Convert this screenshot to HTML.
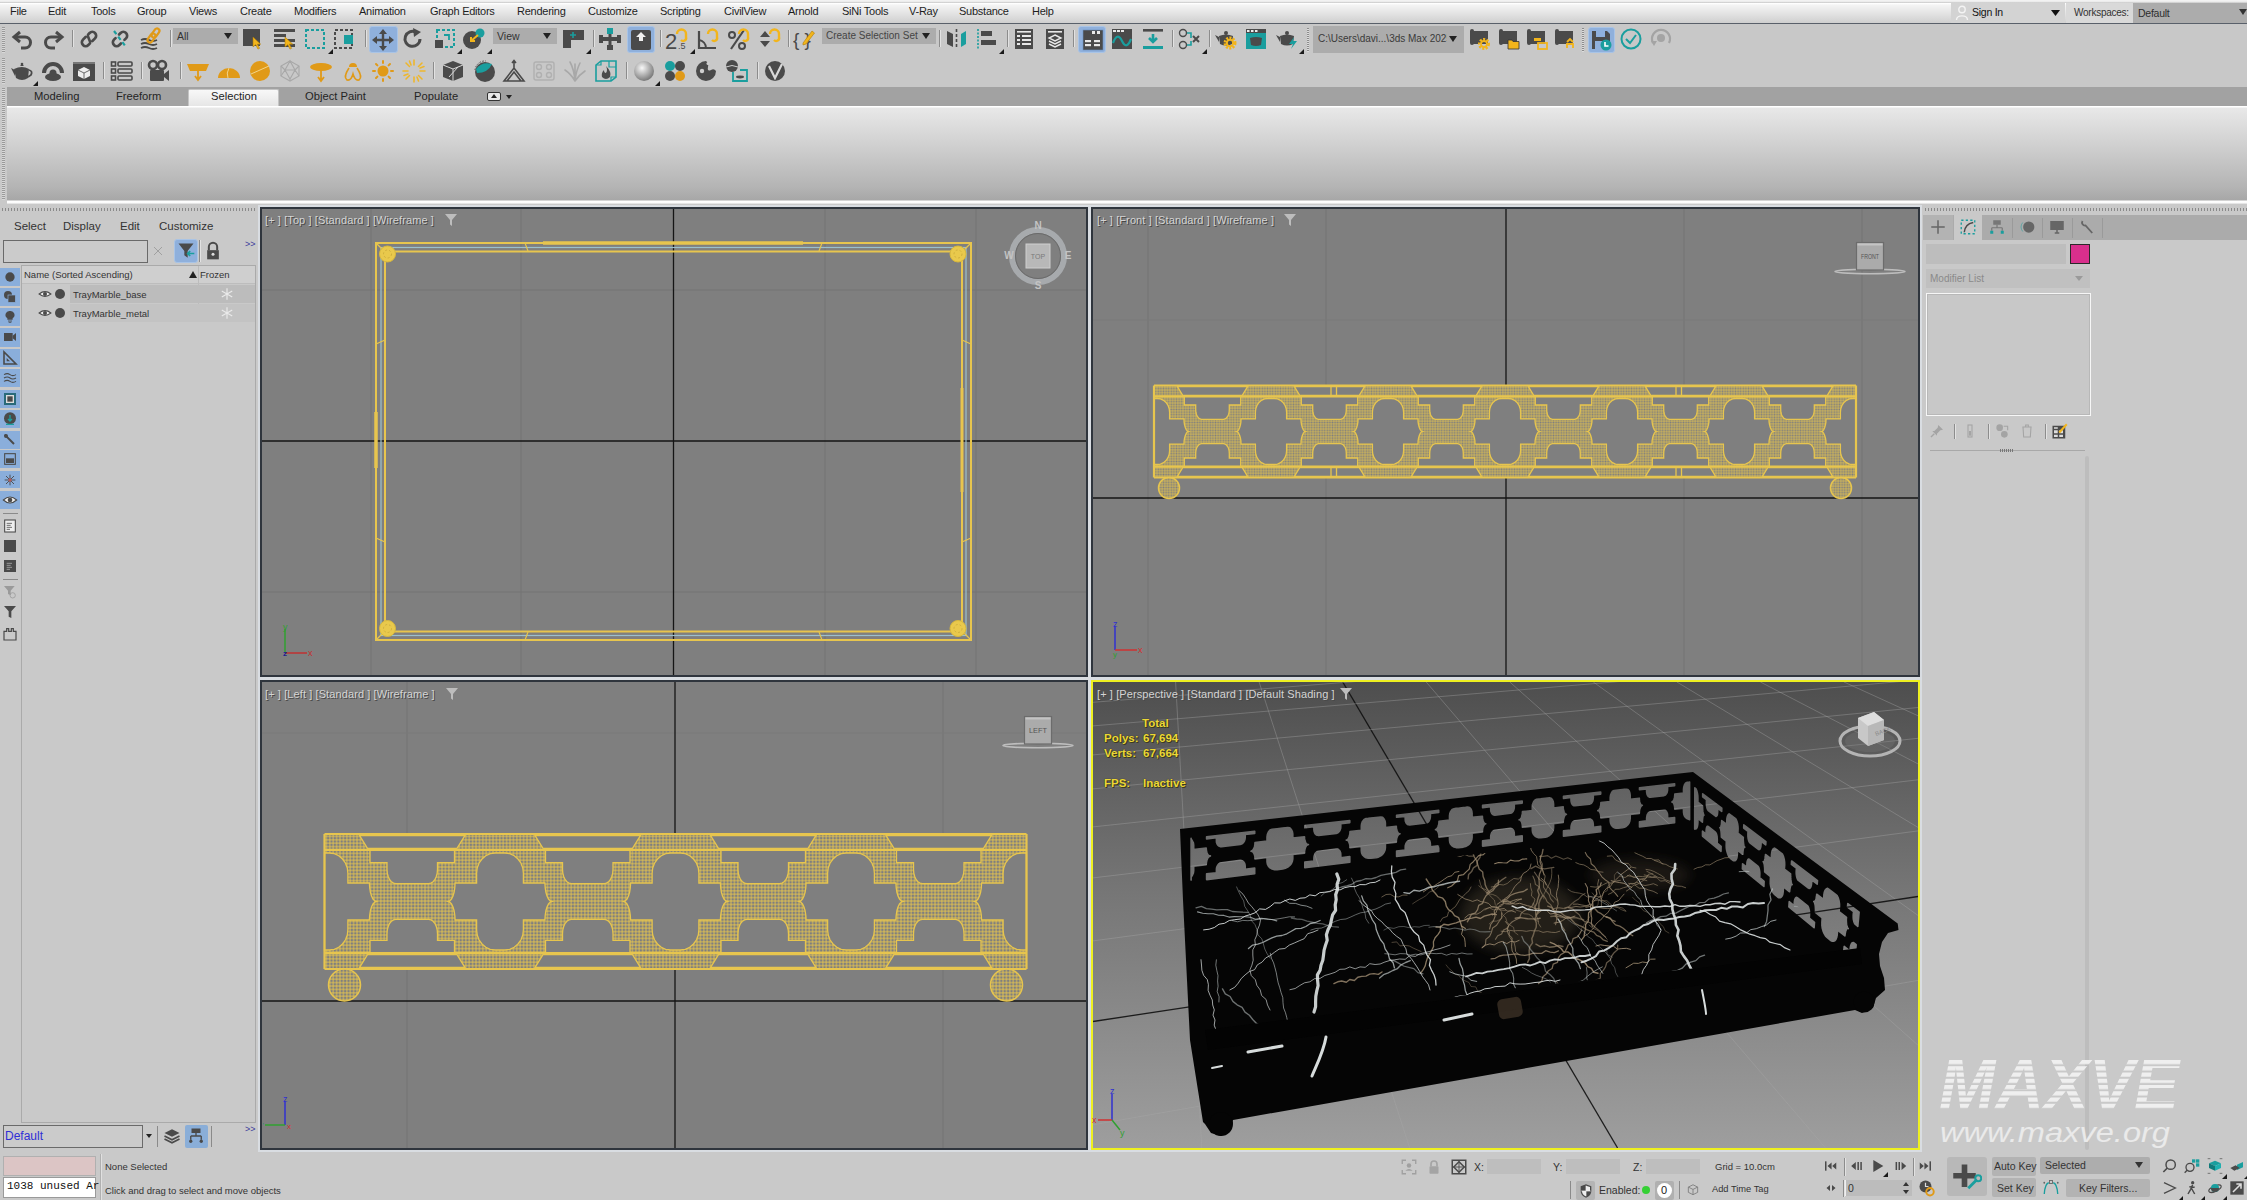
<!DOCTYPE html><html><head><meta charset="utf-8"><style>

*{margin:0;padding:0;box-sizing:border-box}
html,body{width:2247px;height:1200px;overflow:hidden;background:#c9c9c9;font-family:"Liberation Sans",sans-serif;font-size:11px;color:#2a2a2a}
body{position:relative}
.a{position:absolute}
.t{position:absolute;white-space:nowrap}
#menubar{left:0;top:0;width:2247px;height:24px;background:linear-gradient(#f2f2f2 0,#f2f2f2 1.4px,#c4c4c4 2.2px,#ffffff 3.4px,#f4f4f4 5px,#e2e2e2 14px,#cfcfcf 23px);border-bottom:1px solid #59606a}
#menubar .t{top:5px;font-size:11px;color:#1e1e1e;letter-spacing:-0.25px}
.dd{position:absolute;background:#acacac;font-size:10px;color:#333}
.sep{position:absolute;width:1px;background:#8e8e8e;border-right:1px solid #e4e4e4}
.hl{position:absolute;background:#8aaed8;border-radius:2px}
.vpl{position:absolute;font-size:11px;color:#d4d4d4;letter-spacing:0.1px;white-space:nowrap;text-shadow:1px 1px 0 #484848}
.stat{position:absolute;font-size:11.5px;font-weight:bold;color:#ecd836;white-space:nowrap;text-shadow:1px 1px 0 #3a3a20,0 0 1px #20200a}

</style></head><body>
<div id="menubar" class="a">
<span class="t" style="left:10px">File</span>
<span class="t" style="left:48px">Edit</span>
<span class="t" style="left:91px">Tools</span>
<span class="t" style="left:137px">Group</span>
<span class="t" style="left:189px">Views</span>
<span class="t" style="left:240px">Create</span>
<span class="t" style="left:294px">Modifiers</span>
<span class="t" style="left:359px">Animation</span>
<span class="t" style="left:430px">Graph Editors</span>
<span class="t" style="left:517px">Rendering</span>
<span class="t" style="left:588px">Customize</span>
<span class="t" style="left:660px">Scripting</span>
<span class="t" style="left:724px">CivilView</span>
<span class="t" style="left:788px">Arnold</span>
<span class="t" style="left:842px">SiNi Tools</span>
<span class="t" style="left:909px">V-Ray</span>
<span class="t" style="left:959px">Substance</span>
<span class="t" style="left:1032px">Help</span>
<div class="a" style="left:1951px;top:3px;width:114px;height:20px;background:#d3d3d3"></div>
<svg class="a" style="left:1955px;top:5px" width="14" height="16" viewBox="0 0 14 16"><circle cx="7" cy="4.5" r="3.2" fill="none" stroke="#f4f4f4" stroke-width="1.4"/><path d="M1.5 15 C1.5 9.5 12.5 9.5 12.5 15" fill="none" stroke="#f4f4f4" stroke-width="1.4"/></svg>
<span class="t" style="left:1972px;top:6px;font-size:10.5px;color:#111">Sign In</span>
<svg class="a" style="left:2051px;top:10px" width="9" height="6"><path d="M0 0 L9 0 L4.5 6Z" fill="#111"/></svg>
<div class="a" style="left:2066px;top:3px;width:68px;height:20px;background:#d9d9d9"></div>
<span class="t" style="left:2074px;top:7px;font-size:10px;color:#333">Workspaces:</span>
<div class="a" style="left:2133px;top:3px;width:114px;height:20px;background:#acacac"></div>
<span class="t" style="left:2138px;top:7px;font-size:10.5px;color:#2e2e2e">Default</span>
<svg class="a" style="left:2239px;top:9px" width="8" height="6"><path d="M0 0 L8 0 L4 6Z" fill="#333"/></svg>
</div>
<div class="a" style="left:0;top:24px;width:2247px;height:63px;background:#c8c8c8"></div>
<div class="a" style="left:2px;top:27px;width:3px;height:26px;background:repeating-linear-gradient(#9a9a9a 0 1px,#d8d8d8 1px 2px)"></div>
<div class="a" style="left:2px;top:58px;width:3px;height:26px;background:repeating-linear-gradient(#9a9a9a 0 1px,#d8d8d8 1px 2px)"></div>
<svg class="a" style="left:10.5px;top:26.5px" width="24" height="24" viewBox="0 0 24 24"><path d="M9 5 L3 10 L9 15" fill="none" stroke="#4a4a4a" stroke-width="3" stroke-linejoin="miter"/><path d="M4 10 H14 A5.5 5.5 0 0 1 14 21 H10" fill="none" stroke="#4a4a4a" stroke-width="3"/></svg>
<svg class="a" style="left:41.0px;top:26.5px" width="24" height="24" viewBox="0 0 24 24"><path d="M15 5 L21 10 L15 15" fill="none" stroke="#4a4a4a" stroke-width="3"/><path d="M20 10 H10 A5.5 5.5 0 0 0 10 21 H14" fill="none" stroke="#4a4a4a" stroke-width="3"/></svg>
<div class="a" style="left:72px;top:30px;width:1px;height:17px;background:#8c8c8c;box-shadow:1px 0 0 #e2e2e2"></div>
<svg class="a" style="left:77.0px;top:26.5px" width="24" height="24" viewBox="0 0 24 24"><g transform="rotate(-45 12 12)" fill="none" stroke="#4a4a4a" stroke-width="2.7" stroke-linecap="round"><path d="M11 8.2 H7.3 A3.8 3.8 0 0 0 7.3 15.8 H9.3 C11.8 15.8 12.2 8.2 14.7 8.2 H16.7 A3.8 3.8 0 0 1 16.7 15.8 H13"/></g></svg>
<svg class="a" style="left:108.0px;top:26.5px" width="24" height="24" viewBox="0 0 24 24"><g transform="rotate(-45 12 12)" fill="none" stroke="#4a4a4a" stroke-width="2.7" stroke-linecap="round"><path d="M9.5 8.2 H7.3 A3.8 3.8 0 0 0 7.3 15.8 H9.5"/><path d="M14.5 15.8 H16.7 A3.8 3.8 0 0 0 16.7 8.2 H14.5"/></g><path d="M6 4 L18 20" stroke="#1a9e9e" stroke-width="2.2" stroke-dasharray="4 3"/></svg>
<svg class="a" style="left:139.0px;top:26.5px" width="24" height="24" viewBox="0 0 24 24"><g fill="none" stroke="#4a4a4a" stroke-width="1.8"><path d="M2 13 Q6 11 10 13 T18 13"/><path d="M2 17 Q6 15 10 17 T18 17"/><path d="M2 21 Q6 19 10 21 T18 21"/></g><g fill="none" stroke="#e09a18" stroke-width="2.2"><rect x="14" y="1" width="5" height="10" rx="2.5" transform="rotate(35 16.5 6)"/><rect x="10" y="6" width="5" height="10" rx="2.5" transform="rotate(35 12.5 11)"/></g></svg>
<div class="a" style="left:170px;top:30px;width:1px;height:17px;background:#8c8c8c;box-shadow:1px 0 0 #e2e2e2"></div>
<div class="a" style="left:173px;top:28px;width:65px;height:16px;background:#acacac"></div><span class="t" style="left:177px;top:30px;font-size:10.5px;color:#333">All</span><svg class="a" style="left:224px;top:33px" width="8" height="6"><path d="M0 0 L8 0 L4 6Z" fill="#222"/></svg>
<svg class="a" style="left:241.0px;top:26.5px" width="24" height="24" viewBox="0 0 24 24"><rect x="2" y="2" width="17" height="17" fill="#4a4a4a"/><path transform="translate(12 10) scale(1.1)" d="M0 0 L0 9 L2.5 7 L4.5 11 L6 10.3 L4 6.5 L7 6.5Z" fill="#f2b51c" stroke="#b07a00" stroke-width="0.5"/></svg>
<svg class="a" style="left:273.0px;top:26.5px" width="24" height="24" viewBox="0 0 24 24"><g fill="#4a4a4a"><rect x="1" y="2" width="21" height="3"/><rect x="1" y="7" width="12" height="3"/><rect x="1" y="12" width="21" height="3"/><rect x="1" y="17" width="21" height="3"/></g><path transform="translate(12 10) scale(1.1)" d="M0 0 L0 9 L2.5 7 L4.5 11 L6 10.3 L4 6.5 L7 6.5Z" fill="#f2b51c" stroke="#b07a00" stroke-width="0.5"/></svg>
<svg class="a" style="left:303.0px;top:26.5px" width="24" height="24" viewBox="0 0 24 24"><rect x="3" y="3" width="18" height="18" fill="none" stroke="#1a9e9e" stroke-width="2" stroke-dasharray="3 2"/></svg>
<svg class="a" style="left:328px;top:49px" width="5" height="5"><path d="M5 0 L5 5 L0 5Z" fill="#1a1a1a"/></svg>
<svg class="a" style="left:333.0px;top:26.5px" width="24" height="24" viewBox="0 0 24 24"><rect x="2" y="3" width="17" height="18" fill="none" stroke="#4a4a4a" stroke-width="2" stroke-dasharray="3 2"/><rect x="11" y="8" width="9" height="9" fill="#1a9e9e"/></svg>
<div class="a" style="left:365px;top:30px;width:1px;height:17px;background:#8c8c8c;box-shadow:1px 0 0 #e2e2e2"></div>
<div class="a" style="left:369px;top:26px;width:29px;height:27px;background:#8fb0dc;border:1px solid #a9c4e6;border-radius:3px"></div>
<svg class="a" style="left:371.0px;top:27.5px" width="24" height="24" viewBox="0 0 24 24"><g fill="#4a4a4a"><path d="M12 1 L16 6 H13.2 V10.8 H18 V8 L23 12 L18 16 V13.2 H13.2 V18 H16 L12 23 L8 18 H10.8 V13.2 H6 V16 L1 12 L6 8 V10.8 H10.8 V6 H8Z"/></g></svg>
<svg class="a" style="left:401.0px;top:26.5px" width="24" height="24" viewBox="0 0 24 24"><path d="M19 12 A7.5 7.5 0 1 1 15 5.2" fill="none" stroke="#4a4a4a" stroke-width="3"/><path d="M12 1 L20 5 L13 10Z" fill="#4a4a4a"/></svg>
<svg class="a" style="left:432.5px;top:26.5px" width="24" height="24" viewBox="0 0 24 24"><rect x="4" y="3" width="17" height="17" fill="none" stroke="#1a9e9e" stroke-width="2" stroke-dasharray="3 2"/><rect x="2" y="13" width="8" height="8" fill="#4a4a4a"/><path d="M11 8 H16 V13" fill="none" stroke="#1a9e9e" stroke-width="1.8"/></svg>
<svg class="a" style="left:457px;top:49px" width="5" height="5"><path d="M5 0 L5 5 L0 5Z" fill="#1a1a1a"/></svg>
<svg class="a" style="left:462.0px;top:26.5px" width="24" height="24" viewBox="0 0 24 24"><circle cx="10" cy="13" r="9" fill="#4a4a4a"/><circle cx="18" cy="6" r="4.5" fill="#1a9e9e"/><path d="M16 8 L9 14 M9 10 V14 H13" fill="none" stroke="#f2b51c" stroke-width="2"/></svg>
<svg class="a" style="left:487px;top:49px" width="5" height="5"><path d="M5 0 L5 5 L0 5Z" fill="#1a1a1a"/></svg>
<div class="a" style="left:493px;top:28px;width:64px;height:16px;background:#acacac"></div><span class="t" style="left:497px;top:30px;font-size:10.5px;color:#333">View</span><svg class="a" style="left:543px;top:33px" width="8" height="6"><path d="M0 0 L8 0 L4 6Z" fill="#222"/></svg>
<svg class="a" style="left:561.6px;top:26.5px" width="24" height="24" viewBox="0 0 24 24"><rect x="1" y="3" width="8" height="18" fill="#4a4a4a"/><rect x="9" y="3" width="13" height="10" fill="#4a4a4a"/><path d="M11 5 V11 M8 8 H14" stroke="#1a9e9e" stroke-width="1.6"/></svg>
<svg class="a" style="left:586px;top:49px" width="5" height="5"><path d="M5 0 L5 5 L0 5Z" fill="#1a1a1a"/></svg>
<div class="a" style="left:593px;top:30px;width:1px;height:17px;background:#8c8c8c;box-shadow:1px 0 0 #e2e2e2"></div>
<svg class="a" style="left:598.0px;top:26.5px" width="24" height="24" viewBox="0 0 24 24"><rect x="9" y="1" width="6" height="6" fill="#1a9e9e"/><g fill="#4a4a4a"><rect x="10.5" y="7" width="3" height="14"/><rect x="1" y="10" width="22" height="4"/><rect x="1" y="8" width="4" height="8"/><rect x="19" y="8" width="4" height="8"/><rect x="9" y="18" width="6" height="5"/></g></svg>
<div class="a" style="left:627px;top:26px;width:28px;height:27px;background:#8fb0dc;border:1px solid #a9c4e6;border-radius:3px"></div>
<svg class="a" style="left:629.0px;top:27.5px" width="24" height="24" viewBox="0 0 24 24"><rect x="2" y="2" width="20" height="20" rx="2" fill="#4a4a4a"/><path d="M12 4 L17 9 H14 V13 H10 V9 H7Z" fill="#f0f0f0"/></svg>
<div class="a" style="left:660px;top:30px;width:1px;height:17px;background:#8c8c8c;box-shadow:1px 0 0 #e2e2e2"></div>
<svg class="a" style="left:665.0px;top:26.5px" width="24" height="24" viewBox="0 0 24 24"><text x="0" y="22" font-family="Liberation Sans" font-size="22" fill="#4a4a4a">2</text><text x="13" y="22" font-family="Liberation Sans" font-size="9" fill="#4a4a4a">.5</text><path d="M12 7 A4.5 4.5 0 0 1 21 7 V10 A3 3 0 0 1 16 13" fill="none" stroke="#f2b51c" stroke-width="2.4"/></svg>
<svg class="a" style="left:690px;top:49px" width="5" height="5"><path d="M5 0 L5 5 L0 5Z" fill="#1a1a1a"/></svg>
<svg class="a" style="left:695.6px;top:26.5px" width="24" height="24" viewBox="0 0 24 24"><path d="M3 4 V21 H20" fill="none" stroke="#4a4a4a" stroke-width="2.2"/><path d="M3 13 A8 8 0 0 1 10 21" fill="none" stroke="#4a4a4a" stroke-width="1.8"/><path d="M12 7 A4.5 4.5 0 0 1 21 7 V10 A3 3 0 0 1 16 13" fill="none" stroke="#f2b51c" stroke-width="2.4"/></svg>
<svg class="a" style="left:726.7px;top:26.5px" width="24" height="24" viewBox="0 0 24 24"><circle cx="5" cy="8" r="3" fill="none" stroke="#4a4a4a" stroke-width="2"/><circle cx="15" cy="19" r="3" fill="none" stroke="#4a4a4a" stroke-width="2"/><path d="M4 22 L17 3" stroke="#4a4a4a" stroke-width="2.2"/><path d="M12 7 A4.5 4.5 0 0 1 21 7 V10 A3 3 0 0 1 16 13" fill="none" stroke="#f2b51c" stroke-width="2.4"/></svg>
<svg class="a" style="left:758.0px;top:26.5px" width="24" height="24" viewBox="0 0 24 24"><path d="M2 10 L7 4 L12 10Z M2 14 L12 14 L7 20Z" fill="#4a4a4a"/><path d="M12 7 A4.5 4.5 0 0 1 21 7 V10 A3 3 0 0 1 16 13" fill="none" stroke="#f2b51c" stroke-width="2.4"/></svg>
<div class="a" style="left:788px;top:30px;width:1px;height:17px;background:#8c8c8c;box-shadow:1px 0 0 #e2e2e2"></div>
<svg class="a" style="left:793.0px;top:26.5px" width="24" height="24" viewBox="0 0 24 24"><text x="0" y="19" font-family="Liberation Sans" font-size="19" fill="#4a4a4a">{ }</text><path d="M10 16 L19 4 L21.5 6 L13 17 L10 18Z" fill="#f2b51c" stroke="#b07a00" stroke-width="0.6"/></svg>
<div class="a" style="left:822px;top:28px;width:114px;height:16px;background:#acacac"></div><span class="t" style="left:826px;top:30px;font-size:10px;color:#444">Create Selection Set</span><svg class="a" style="left:922px;top:33px" width="8" height="6"><path d="M0 0 L8 0 L4 6Z" fill="#222"/></svg>
<div class="a" style="left:939px;top:30px;width:1px;height:17px;background:#8c8c8c;box-shadow:1px 0 0 #e2e2e2"></div>
<svg class="a" style="left:945.0px;top:26.5px" width="24" height="24" viewBox="0 0 24 24"><path d="M2 4 L8 7 V20 L2 17Z" fill="#4a4a4a"/><path d="M11.5 2 V22" stroke="#4a4a4a" stroke-width="1.6" stroke-dasharray="3 2"/><path d="M16 7 L21 4 V17 L16 20Z" fill="#1a9e9e"/></svg>
<svg class="a" style="left:975.0px;top:26.5px" width="24" height="24" viewBox="0 0 24 24"><path d="M3 2 V22" stroke="#1a9e9e" stroke-width="1.6" stroke-dasharray="2 1.5"/><rect x="6" y="4" width="11" height="5" fill="#4a4a4a"/><rect x="6" y="13" width="15" height="5" fill="#4a4a4a"/></svg>
<svg class="a" style="left:999px;top:49px" width="5" height="5"><path d="M5 0 L5 5 L0 5Z" fill="#1a1a1a"/></svg>
<div class="a" style="left:1007px;top:30px;width:1px;height:17px;background:#8c8c8c;box-shadow:1px 0 0 #e2e2e2"></div>
<svg class="a" style="left:1012.0px;top:26.5px" width="24" height="24" viewBox="0 0 24 24"><rect x="3" y="2" width="18" height="20" fill="#4a4a4a"/><g fill="#e8e8e8"><rect x="5" y="4" width="14" height="1.6"/><rect x="5" y="8" width="3" height="2"/><rect x="10" y="8" width="9" height="2"/><rect x="5" y="12" width="3" height="2"/><rect x="10" y="12" width="9" height="2"/><rect x="5" y="16" width="3" height="2"/><rect x="10" y="16" width="9" height="2"/></g></svg>
<svg class="a" style="left:1043.0px;top:26.5px" width="24" height="24" viewBox="0 0 24 24"><rect x="3" y="2" width="18" height="20" fill="#4a4a4a"/><rect x="5" y="4" width="14" height="1.6" fill="#e8e8e8"/><path d="M12 8 L18 11 L12 14 L6 11Z M6 14 L12 17 L18 14 M6 17 L12 20 L18 17" fill="none" stroke="#e8e8e8" stroke-width="1.4"/></svg>
<div class="a" style="left:1073px;top:30px;width:1px;height:17px;background:#8c8c8c;box-shadow:1px 0 0 #e2e2e2"></div>
<div class="a" style="left:1078px;top:26px;width:28px;height:27px;background:#8fb0dc;border:1px solid #a9c4e6;border-radius:3px"></div>
<svg class="a" style="left:1080.5px;top:27.5px" width="24" height="24" viewBox="0 0 24 24"><rect x="2" y="2" width="20" height="20" fill="#4a4a4a" stroke="#6c8fc0" stroke-width="0.6"/><g fill="#e8e8e8"><rect x="11" y="3" width="3" height="3"/><rect x="16" y="3" width="3" height="3"/><rect x="4" y="12" width="6" height="2.2"/><rect x="13" y="12" width="6" height="2.2"/><rect x="4" y="16" width="6" height="2.2"/><rect x="13" y="16" width="6" height="2.2"/></g></svg>
<svg class="a" style="left:1110.0px;top:26.5px" width="24" height="24" viewBox="0 0 24 24"><rect x="2" y="2" width="20" height="20" fill="#4a4a4a"/><g fill="#e8e8e8"><rect x="3" y="3" width="3" height="2"/><rect x="7" y="3" width="3" height="2"/><rect x="11" y="3" width="3" height="2"/></g><path d="M3 16 C6 8 9 8 12 14 S18 20 21 12" fill="none" stroke="#1a9e9e" stroke-width="2.2"/></svg>
<svg class="a" style="left:1141.0px;top:26.5px" width="24" height="24" viewBox="0 0 24 24"><rect x="2" y="2" width="20" height="2.6" fill="#4a4a4a"/><path d="M12 7 V14 M8 11 L12 15 L16 11" fill="none" stroke="#1a9e9e" stroke-width="2.6"/><rect x="2" y="19" width="20" height="3" fill="#1a9e9e"/></svg>
<div class="a" style="left:1172px;top:30px;width:1px;height:17px;background:#8c8c8c;box-shadow:1px 0 0 #e2e2e2"></div>
<svg class="a" style="left:1178.0px;top:26.5px" width="24" height="24" viewBox="0 0 24 24"><g fill="none" stroke="#4a4a4a" stroke-width="1.4"><circle cx="5" cy="6" r="3.5"/><circle cx="5" cy="18" r="3.5"/></g><path d="M9 6 H13 V11 M9 18 H13 V14" fill="none" stroke="#1a9e9e" stroke-width="1.6"/><path d="M15 9 L21 15 M21 9 L15 15" stroke="#4a4a4a" stroke-width="2"/></svg>
<svg class="a" style="left:1202px;top:49px" width="5" height="5"><path d="M5 0 L5 5 L0 5Z" fill="#1a1a1a"/></svg>
<div class="a" style="left:1209px;top:30px;width:1px;height:17px;background:#8c8c8c;box-shadow:1px 0 0 #e2e2e2"></div>
<svg class="a" style="left:1214.0px;top:26.5px" width="24" height="24" viewBox="0 0 24 24"><path d="M5 9 Q12 6 19 9 L18 17 Q12 20 6 17Z" fill="#4a4a4a"/><path d="M5 10 L1 8 L5 15Z" fill="#4a4a4a"/><circle cx="12" cy="6" r="2" fill="#4a4a4a"/><circle cx="16" cy="16" r="5" fill="none" stroke="#f2b51c" stroke-width="3" stroke-dasharray="2 1.2"/><circle cx="16" cy="16" r="3.2" fill="none" stroke="#f2b51c" stroke-width="2"/></svg>
<svg class="a" style="left:1244.0px;top:26.5px" width="24" height="24" viewBox="0 0 24 24"><rect x="2" y="2" width="20" height="20" fill="#1a9e9e"/><rect x="2" y="2" width="20" height="4" fill="#4a4a4a"/><g fill="#eee"><rect x="3" y="3" width="2.5" height="2"/><rect x="7" y="3" width="2.5" height="2"/><rect x="11" y="3" width="2.5" height="2"/></g><path d="M6 11 Q12 9 18 11 L17 18 Q12 20 7 18Z" fill="#4a4a4a"/></svg>
<svg class="a" style="left:1275.0px;top:26.5px" width="24" height="24" viewBox="0 0 24 24"><path d="M5 9 Q12 6 19 9 L18 17 Q12 20 6 17Z" fill="#4a4a4a"/><path d="M5 10 L1 8 L5 15Z" fill="#4a4a4a"/><circle cx="12" cy="6" r="2" fill="#4a4a4a"/><path d="M19 10 L14 17 H18 L16 22 L22 14 H18Z" fill="#1a9e9e"/></svg>
<svg class="a" style="left:1299px;top:49px" width="5" height="5"><path d="M5 0 L5 5 L0 5Z" fill="#1a1a1a"/></svg>
<div class="a" style="left:1307px;top:28px;width:2px;height:24px;background:repeating-linear-gradient(#8c8c8c 0 1px,#dcdcdc 1px 2px)"></div>
<div class="a" style="left:1313px;top:26px;width:151px;height:27px;background:#acacac"></div>
<span class="t" style="left:1318px;top:33px;font-size:10px;color:#3a3a3a">C:\Users\davi...\3ds Max 2025</span>
<div class="a" style="left:1447px;top:30px;width:10px;height:20px;background:#acacac"></div>
<svg class="a" style="left:1449px;top:36px" width="8" height="6"><path d="M0 0 L8 0 L4 6Z" fill="#222"/></svg>
<svg class="a" style="left:1468.0px;top:26.5px" width="24" height="24" viewBox="0 0 24 24"><rect x="2" y="2" width="4" height="16" rx="2" fill="#4a4a4a"/><rect x="5" y="4" width="15" height="13" fill="#4a4a4a"/><circle cx="16" cy="17" r="4.5" fill="none" stroke="#f2b51c" stroke-width="3" stroke-dasharray="2 1.3"/><circle cx="16" cy="17" r="3" fill="none" stroke="#f2b51c" stroke-width="1.8"/></svg>
<svg class="a" style="left:1496.6px;top:26.5px" width="24" height="24" viewBox="0 0 24 24"><rect x="2" y="2" width="4" height="16" rx="2" fill="#4a4a4a"/><rect x="5" y="4" width="15" height="13" fill="#4a4a4a"/><path d="M11 13 H15 L16 14.5 H22 V22 H11Z" fill="#f2b51c" stroke="#333" stroke-width="0.8"/></svg>
<svg class="a" style="left:1524.5px;top:26.5px" width="24" height="24" viewBox="0 0 24 24"><rect x="2" y="2" width="4" height="16" rx="2" fill="#4a4a4a"/><rect x="5" y="4" width="15" height="13" fill="#4a4a4a"/><rect x="9" y="11" width="7" height="3" fill="#f2b51c"/><rect x="13" y="16" width="9" height="6" fill="none" stroke="#f2b51c" stroke-width="1.8"/></svg>
<svg class="a" style="left:1553.0px;top:26.5px" width="24" height="24" viewBox="0 0 24 24"><rect x="2" y="2" width="4" height="16" rx="2" fill="#4a4a4a"/><rect x="5" y="4" width="15" height="13" fill="#4a4a4a"/><path d="M14 15 L17 12 L20 15 M14 21 V17 H20 V21" fill="none" stroke="#f2b51c" stroke-width="1.8"/></svg>
<div class="a" style="left:1582px;top:28px;width:2px;height:24px;background:repeating-linear-gradient(#8c8c8c 0 1px,#dcdcdc 1px 2px)"></div>
<div class="a" style="left:1588px;top:27px;width:27px;height:26px;background:#8fb0dc;border:1px solid #a9c4e6;border-radius:3px"></div>
<svg class="a" style="left:1589.0px;top:27.5px" width="24" height="24" viewBox="0 0 24 24"><path d="M3 3 H18 L21 6 V21 H3Z" fill="#4a4a4a"/><rect x="7" y="3" width="9" height="6" fill="#8fb0dc"/><rect x="6" y="13" width="12" height="8" fill="#8fb0dc"/><circle cx="17" cy="17" r="5.5" fill="#1a9e9e"/><path d="M16 14 V18 H19.5" fill="none" stroke="#fff" stroke-width="1.6"/></svg>
<svg class="a" style="left:1619.0px;top:26.5px" width="24" height="24" viewBox="0 0 24 24"><circle cx="12" cy="12" r="9.5" fill="none" stroke="#1a9e9e" stroke-width="2"/><path d="M7 12 L11 16 L17 8" fill="none" stroke="#1a9e9e" stroke-width="2"/></svg>
<svg class="a" style="left:1648.6px;top:26.5px" width="24" height="24" viewBox="0 0 24 24"><path d="M4 16 A9 9 0 1 1 20 16" fill="none" stroke="#a4a4a4" stroke-width="2.2"/><circle cx="12" cy="11" r="4" fill="#a4a4a4"/><path d="M2 14 L5 19 L8 14" fill="#a4a4a4"/></svg>
<svg class="a" style="left:10.0px;top:58.6px" width="24" height="24" viewBox="0 0 24 24"><path d="M4 10 Q12 6 19 10 L18 19 Q12 23 6 19Z" fill="#4a4a4a"/><path d="M19 11 Q23 12 21 16 L18 18" fill="none" stroke="#4a4a4a" stroke-width="1.8"/><path d="M5 11 L1 9 L5 17Z" fill="#4a4a4a"/><path d="M10 7 Q12 4 14 7Z" fill="#4a4a4a"/><circle cx="12" cy="5" r="1.3" fill="#4a4a4a"/></svg>
<svg class="a" style="left:33px;top:81px" width="5" height="5"><path d="M5 0 L5 5 L0 5Z" fill="#1a1a1a"/></svg>
<svg class="a" style="left:41.0px;top:58.6px" width="24" height="24" viewBox="0 0 24 24"><path d="M3 14 A9 9 0 0 1 21 14" fill="none" stroke="#4a4a4a" stroke-width="4"/><ellipse cx="12" cy="18" rx="8" ry="4" fill="#4a4a4a"/><circle cx="12" cy="14" r="3.5" fill="#4a4a4a"/></svg>
<svg class="a" style="left:72.0px;top:58.6px" width="24" height="24" viewBox="0 0 24 24"><rect x="1" y="3" width="22" height="19" fill="#4a4a4a"/><rect x="1" y="3" width="22" height="2" fill="#777"/><path d="M12 8 L18 11 V17 L12 20 L6 17 V11Z" fill="#eee"/><path d="M6 11 L12 14 L18 11 M12 14 V20" fill="none" stroke="#4a4a4a" stroke-width="0.8"/></svg>
<div class="a" style="left:103px;top:62px;width:1px;height:17px;background:#8c8c8c;box-shadow:1px 0 0 #e2e2e2"></div>
<svg class="a" style="left:110.0px;top:58.6px" width="24" height="24" viewBox="0 0 24 24"><g fill="none" stroke="#4a4a4a" stroke-width="1.6"><rect x="1.5" y="3" width="4" height="4"/><rect x="1.5" y="10" width="4" height="4"/><rect x="1.5" y="17" width="4" height="4"/><rect x="8" y="3" width="14" height="4" rx="1"/><rect x="8" y="10" width="14" height="4" rx="1"/><rect x="8" y="17" width="14" height="4" rx="1"/></g></svg>
<div class="a" style="left:141px;top:62px;width:1px;height:17px;background:#8c8c8c;box-shadow:1px 0 0 #e2e2e2"></div>
<svg class="a" style="left:147.0px;top:58.6px" width="24" height="24" viewBox="0 0 24 24"><circle cx="6" cy="6" r="4" fill="none" stroke="#4a4a4a" stroke-width="2.6"/><circle cx="15" cy="6" r="4" fill="none" stroke="#4a4a4a" stroke-width="2.6"/><rect x="3" y="11" width="14" height="11" rx="1" fill="#4a4a4a"/><path d="M17 15 L22 11 V22 L17 18Z" fill="#4a4a4a"/></svg>
<div class="a" style="left:180px;top:62px;width:1px;height:17px;background:#8c8c8c;box-shadow:1px 0 0 #e2e2e2"></div>
<svg class="a" style="left:186.0px;top:58.6px" width="24" height="24" viewBox="0 0 24 24"><path d="M1 5 H23 L20 12 H4Z" fill="#e09a18"/><path d="M12 9 V20 M9 17 L12 21 L15 17" fill="none" stroke="#e09a18" stroke-width="1.8"/></svg>
<svg class="a" style="left:217.0px;top:58.6px" width="24" height="24" viewBox="0 0 24 24"><path d="M1 19 A11 10 0 0 1 23 19Z" fill="#e09a18"/><path d="M12 9 Q9 14 11 19" fill="none" stroke="#f2d48a" stroke-width="1"/></svg>
<svg class="a" style="left:248.0px;top:58.6px" width="24" height="24" viewBox="0 0 24 24"><circle cx="12" cy="12" r="10" fill="#e09a18"/><path d="M3 15 Q12 11 21 7" fill="none" stroke="#f2d48a" stroke-width="1"/></svg>
<svg class="a" style="left:278.0px;top:58.6px" width="24" height="24" viewBox="0 0 24 24"><g fill="none" stroke="#a8a8a8" stroke-width="1.1"><path d="M12 2 L21 7 V17 L12 22 L3 17 V7Z"/><path d="M12 2 L7 11 L17 11Z M7 11 L12 20 L17 11 M3 7 L7 11 M21 7 L17 11 M3 17 L7 11 M21 17 L17 11 M12 22 L12 20"/></g></svg>
<svg class="a" style="left:309.0px;top:58.6px" width="24" height="24" viewBox="0 0 24 24"><ellipse cx="12" cy="8" rx="11" ry="4" fill="#e09a18"/><path d="M12 10 V21 M9 18 L12 22 L15 18" fill="none" stroke="#e09a18" stroke-width="1.8"/></svg>
<svg class="a" style="left:340.5px;top:58.6px" width="24" height="24" viewBox="0 0 24 24"><path d="M8 8 A4 4 0 0 1 16 8Z" fill="#e09a18"/><path d="M8 9 Q2 18 6 21 Q10 22 12 15 Q14 22 18 21 Q22 18 16 9" fill="none" stroke="#e09a18" stroke-width="1.6"/></svg>
<svg class="a" style="left:371.0px;top:58.6px" width="24" height="24" viewBox="0 0 24 24"><circle cx="12" cy="12" r="5.5" fill="#e09a18"/><g stroke="#e09a18" stroke-width="2" stroke-linecap="round"><path d="M12 2 V4 M12 20 V22 M2 12 H4 M20 12 H22 M5 5 L6.4 6.4 M17.6 17.6 L19 19 M5 19 L6.4 17.6 M17.6 6.4 L19 5"/></g></svg>
<svg class="a" style="left:401.7px;top:58.6px" width="24" height="24" viewBox="0 0 24 24"><g stroke="#f2b51c" stroke-width="1.6" stroke-linecap="round" opacity="0.9"><path d="M12 1 V6 M12 18 V23 M1 12 H6 M18 12 H23 M4 4 L7.5 7.5 M16.5 16.5 L20 20 M4 20 L7.5 16.5 M16.5 7.5 L20 4 M7.5 2 L9 6 M15 18 L16.5 22 M2 16.5 L6 15 M18 9 L22 7.5"/></g></svg>
<div class="a" style="left:433px;top:62px;width:1px;height:17px;background:#8c8c8c;box-shadow:1px 0 0 #e2e2e2"></div>
<svg class="a" style="left:440.5px;top:58.6px" width="24" height="24" viewBox="0 0 24 24"><path d="M12 2 L22 6 V18 L12 22 L2 18 V6Z" fill="#4a4a4a"/><path d="M2 6 L12 10 L22 6 M12 10 V22 M8 18 L17 8" fill="none" stroke="#d8d8d8" stroke-width="1"/></svg>
<svg class="a" style="left:471.7px;top:58.6px" width="24" height="24" viewBox="0 0 24 24"><circle cx="13" cy="13" r="10" fill="#4a4a4a"/><path d="M4 10 Q10 2 20 5 Q16 14 5 14Z" fill="#1a9e9e"/><path d="M3 11 A10 10 0 0 1 14 2" fill="none" stroke="#4a4a4a" stroke-width="1" stroke-dasharray="1.5 1.5"/></svg>
<svg class="a" style="left:502.0px;top:58.6px" width="24" height="24" viewBox="0 0 24 24"><path d="M2 22 H22 L12 9Z M5 22 L12 13 L19 22 M12 9 V2 M10 4 L12 1.5 L14 4" fill="none" stroke="#4a4a4a" stroke-width="1.6"/></svg>
<svg class="a" style="left:532.0px;top:58.6px" width="24" height="24" viewBox="0 0 24 24"><g fill="none" stroke="#b0b0b0" stroke-width="1.4"><rect x="2" y="3" width="20" height="18" rx="2"/><circle cx="7" cy="8" r="2.5"/><circle cx="17" cy="8" r="2.5"/><circle cx="7" cy="16" r="2.5"/><circle cx="17" cy="16" r="2.5"/></g></svg>
<svg class="a" style="left:563.0px;top:58.6px" width="24" height="24" viewBox="0 0 24 24"><g fill="none" stroke="#a8a8a8" stroke-width="1.6" stroke-linecap="round"><path d="M12 22 Q11 10 7 3 M12 22 Q13 12 17 4 M12 22 Q8 15 2 11 M12 22 Q16 16 22 12 M12 22 Q12 12 12 5"/></g></svg>
<svg class="a" style="left:594.0px;top:58.6px" width="24" height="24" viewBox="0 0 24 24"><path d="M2 6 L7 2 H22 V18 L17 22 H2Z" fill="none" stroke="#1a9e9e" stroke-width="1.6"/><path d="M7 2 V6 H2 M17 22 V18 H22 M15 2 V8 H22" fill="none" stroke="#1a9e9e" stroke-width="1.2"/><path d="M12 7 Q18 13 16 18 Q12 22 8 18 Q7 14 10 11 Q10 14 12 14 Q14 11 12 7Z" fill="#4a4a4a"/></svg>
<div class="a" style="left:626px;top:62px;width:1px;height:17px;background:#8c8c8c;box-shadow:1px 0 0 #e2e2e2"></div>
<svg class="a" style="left:632px;top:58.6px" width="24" height="24" viewBox="0 0 24 24"><defs><radialGradient id="sph" cx="0.4" cy="0.35" r="0.65"><stop offset="0" stop-color="#f8f8f8"/><stop offset="1" stop-color="#7a7a7a"/></radialGradient></defs><circle cx="12" cy="12" r="10" fill="url(#sph)"/></svg>
<svg class="a" style="left:655px;top:81px" width="5" height="5"><path d="M5 0 L5 5 L0 5Z" fill="#1a1a1a"/></svg>
<svg class="a" style="left:662.6px;top:58.6px" width="24" height="24" viewBox="0 0 24 24"><circle cx="7" cy="7" r="5" fill="#1a9e9e"/><circle cx="17" cy="7" r="5" fill="#4a4a4a"/><circle cx="7" cy="17" r="5" fill="#4a4a4a"/><circle cx="17" cy="17" r="5" fill="#e09a18"/></svg>
<svg class="a" style="left:693.7px;top:58.6px" width="24" height="24" viewBox="0 0 24 24"><path d="M12 2 A10 10 0 1 0 22 12 Q20 9 17 11 Q13 13 14 8 Q15 4 12 2Z" fill="#4a4a4a"/><circle cx="8" cy="12" r="2.2" fill="#cfcfcf"/><circle cx="14" cy="4.5" r="1.5" fill="#cfcfcf"/></svg>
<svg class="a" style="left:725.0px;top:58.6px" width="24" height="24" viewBox="0 0 24 24"><circle cx="7" cy="7" r="6" fill="#4a4a4a"/><path d="M1 8 Q7 5 13 8" stroke="#cfcfcf" stroke-width="1" fill="none"/><path d="M8 13 V22 H22 V11 H15" fill="none" stroke="#1a9e9e" stroke-width="1.8"/><ellipse cx="15" cy="18" rx="4" ry="1.4" fill="#4a4a4a"/></svg>
<div class="a" style="left:757px;top:62px;width:1px;height:17px;background:#8c8c8c;box-shadow:1px 0 0 #e2e2e2"></div>
<svg class="a" style="left:763.0px;top:58.6px" width="24" height="24" viewBox="0 0 24 24"><circle cx="12" cy="12" r="10" fill="#4a4a4a"/><path d="M6 7 L12 19 L19 5" fill="none" stroke="#d8d8d8" stroke-width="2.2"/></svg>
<div class="a" style="left:2px;top:88px;width:3px;height:112px;background:repeating-linear-gradient(#9a9a9a 0 1px,#d8d8d8 1px 2px)"></div>
<div class="a" style="left:7px;top:87px;width:2240px;height:19px;background:#a2a2a2"></div>
<div class="a" style="left:188px;top:89px;width:91px;height:17px;background:linear-gradient(#f8f8f8,#e6e6e6);border:1px solid #c4c4c4;border-bottom:none;border-radius:2px 2px 0 0"></div>
<span class="t" style="left:34px;top:90px;font-size:11.2px;color:#242424">Modeling</span>
<span class="t" style="left:116px;top:90px;font-size:11.2px;color:#242424">Freeform</span>
<span class="t" style="left:211px;top:90px;font-size:11.2px;color:#242424">Selection</span>
<span class="t" style="left:305px;top:90px;font-size:11.2px;color:#242424">Object Paint</span>
<span class="t" style="left:414px;top:90px;font-size:11.2px;color:#242424">Populate</span>
<div class="a" style="left:487px;top:92px;width:14px;height:9px;border:1px solid #333;border-radius:2px;background:#e8e8e8"></div>
<svg class="a" style="left:491px;top:94px" width="6" height="4"><path d="M0 4 L6 4 L3 0Z" fill="#222"/></svg>
<svg class="a" style="left:506px;top:95px" width="6" height="4"><path d="M0 0 L6 0 L3 4Z" fill="#222"/></svg>
<div class="a" style="left:7px;top:106px;width:2240px;height:98px;background:linear-gradient(#ffffff 0,#ffffff 1px,#e8e8e8 2px,#d2d2d2 36px,#b4b4b4 81px,#a7a7a7 94px,#ffffff 95px,#fafafa 97px,#d0d0d0 98px)"></div>
<div class="a" style="left:2px;top:208px;width:254px;height:3px;background:repeating-linear-gradient(90deg,#8a8a8a 0 1px,transparent 1px 3px)"></div>
<div class="a" style="left:1925px;top:208px;width:322px;height:3px;background:repeating-linear-gradient(90deg,#8a8a8a 0 1px,transparent 1px 3px)"></div>
<span class="t" style="left:14px;top:220px;font-size:11.5px;color:#333">Select</span>
<span class="t" style="left:63px;top:220px;font-size:11.5px;color:#333">Display</span>
<span class="t" style="left:120px;top:220px;font-size:11.5px;color:#333">Edit</span>
<span class="t" style="left:159px;top:220px;font-size:11.5px;color:#333">Customize</span>
<div class="a" style="left:3px;top:240px;width:145px;height:23px;border:1px solid #6a6a6a;background:#cbcbcb"></div>
<div class="a" style="left:21px;top:265px;width:235px;height:858px;border:1px solid #aaaaaa;background:#c9c9c9"></div>
<div class="a" style="left:22px;top:266px;width:233px;height:18px;background:#cfcfcf;border-bottom:1px solid #bdbdbd"></div>
<div class="a" style="left:198px;top:266px;width:1px;height:56px;background:#bcbcbc"></div>
<span class="t" style="left:24px;top:269px;font-size:9.5px;color:#333">Name (Sorted Ascending)</span>
<svg class="a" style="left:189px;top:271px" width="8" height="7"><path d="M0 7 L8 7 L4 0Z" fill="#222"/></svg>
<span class="t" style="left:200px;top:269px;font-size:9.5px;color:#333">Frozen</span>
<div class="a" style="left:70px;top:285px;width:185px;height:18px;background:#bcbcbc"></div>
<div class="a" style="left:70px;top:304px;width:185px;height:18px;background:#c3c3c3"></div>
<span class="t" style="left:73px;top:289px;font-size:9.5px;color:#333">TrayMarble_base</span>
<span class="t" style="left:73px;top:308px;font-size:9.5px;color:#333">TrayMarble_metal</span>
<div class="a" style="left:3px;top:1125px;width:140px;height:23px;border:1px solid #6a6a6a;background:#cbcbcb"></div>
<span class="t" style="left:5px;top:1129px;font-size:12px;color:#2f2fd6">Default</span>
<svg class="a" style="left:146px;top:1134px" width="6" height="4"><path d="M0 0 L6 0 L3 4Z" fill="#222"/></svg>
<div class="a" style="left:157px;top:1126px;width:1px;height:21px;background:#8a8a8a"></div>
<div class="hl" style="left:185px;top:1125px;width:23px;height:23px"></div>
<div class="a" style="left:211px;top:1126px;width:1px;height:21px;background:#8a8a8a"></div>
<svg class="a" style="left:150.0px;top:243.0px" width="16" height="16" viewBox="0 0 24 24"><path d="M6 6 L18 18 M18 6 L6 18" stroke="#a0a0a0" stroke-width="1.5"/></svg>
<div class="a" style="left:174px;top:239px;width:24px;height:24px;background:#8fb0dc;border:1px solid #a9c4e6;border-radius:3px"></div>
<svg class="a" style="left:176.0px;top:241.0px" width="20" height="20" viewBox="0 0 24 24"><path d="M3 3 H21 L14 12 V20 L10 17 V12Z" fill="#4a4a4a"/><path d="M22 15 H14 M17 12 L14 15 L17 18" fill="none" stroke="#1a9e9e" stroke-width="2"/></svg>
<div class="a" style="left:199px;top:240px;width:1px;height:22px;background:#8c8c8c;box-shadow:1px 0 0 #e2e2e2"></div>
<svg class="a" style="left:203.0px;top:241.0px" width="20" height="20" viewBox="0 0 24 24"><path d="M7 11 V7 A5 5 0 0 1 17 7 V11" fill="none" stroke="#4a4a4a" stroke-width="2.4"/><rect x="5" y="11" width="14" height="11" fill="#4a4a4a"/><circle cx="12" cy="16" r="1.8" fill="#ddd"/></svg>
<span class="t" style="left:245px;top:239px;font-size:9px;color:#3a3a9a">&gt;&gt;</span>
<span class="t" style="left:245px;top:1124px;font-size:9px;color:#3a3a9a">&gt;&gt;</span>
<div class="a" style="left:0;top:268px;width:19.5px;height:18px;background:#8aaedb"></div>
<div class="a" style="left:0;top:288px;width:19.5px;height:18px;background:#8aaedb"></div>
<div class="a" style="left:0;top:308px;width:19.5px;height:18px;background:#8aaedb"></div>
<div class="a" style="left:0;top:328px;width:19.5px;height:19px;background:#8aaedb"></div>
<div class="a" style="left:0;top:349px;width:19.5px;height:18px;background:#8aaedb"></div>
<div class="a" style="left:0;top:369px;width:19.5px;height:18px;background:#8aaedb"></div>
<div class="a" style="left:0;top:390px;width:19.5px;height:18px;background:#8aaedb"></div>
<div class="a" style="left:0;top:410px;width:19.5px;height:18px;background:#8aaedb"></div>
<div class="a" style="left:0;top:431px;width:19.5px;height:18px;background:#8aaedb"></div>
<div class="a" style="left:0;top:450px;width:19.5px;height:18px;background:#8aaedb"></div>
<div class="a" style="left:0;top:471px;width:19.5px;height:17px;background:#8aaedb"></div>
<div class="a" style="left:0;top:491px;width:19.5px;height:18px;background:#8aaedb"></div>
<svg class="a" style="left:1.8px;top:268.6px" width="16" height="16" viewBox="0 0 24 24"><circle cx="12" cy="12" r="7" fill="#4a4a4a"/></svg>
<svg class="a" style="left:1.8px;top:288.6px" width="16" height="16" viewBox="0 0 24 24"><circle cx="9" cy="9" r="6" fill="#4a4a4a"/><rect x="9" y="9" width="11" height="11" fill="#4a4a4a" stroke="#8aaedb" stroke-width="1"/></svg>
<svg class="a" style="left:1.8px;top:308.9px" width="16" height="16" viewBox="0 0 24 24"><path d="M12 3 A6 6 0 0 1 16 14 V16 H8 V14 A6 6 0 0 1 12 3Z" fill="#4a4a4a"/><path d="M9 18 H15 M10 20 H14" stroke="#4a4a4a" stroke-width="1.3"/></svg>
<svg class="a" style="left:1.8px;top:329.4px" width="16" height="16" viewBox="0 0 24 24"><rect x="3" y="6" width="13" height="12" fill="#4a4a4a"/><path d="M16 10 L21 6 V18 L16 14Z" fill="#4a4a4a"/></svg>
<svg class="a" style="left:1.8px;top:349.9px" width="16" height="16" viewBox="0 0 24 24"><path d="M3 3 V21 H21Z" fill="none" stroke="#4a4a4a" stroke-width="2.4"/><path d="M7 12 V17 H12Z" fill="#4a4a4a"/></svg>
<svg class="a" style="left:1.8px;top:370.2px" width="16" height="16" viewBox="0 0 24 24"><g fill="none" stroke="#4a4a4a" stroke-width="1.6"><path d="M3 7 Q8 4 12 7 T21 7"/><path d="M3 12 Q8 9 12 12 T21 12"/><path d="M3 17 Q8 14 12 17 T21 17"/></g></svg>
<svg class="a" style="left:1.8px;top:390.8px" width="16" height="16" viewBox="0 0 24 24"><rect x="3" y="3" width="18" height="18" fill="#2a6a7a"/><rect x="6" y="6" width="12" height="12" fill="#ddd"/><rect x="8" y="8" width="8" height="8" fill="#4a4a4a"/></svg>
<svg class="a" style="left:1.8px;top:411.0px" width="16" height="16" viewBox="0 0 24 24"><circle cx="12" cy="11" r="9" fill="#4a4a4a"/><path d="M12 6 V15 M9 12 L12 15 L15 12" stroke="#1a9e9e" stroke-width="2" fill="none"/><rect x="6" y="19" width="12" height="2" fill="#1a9e9e"/></svg>
<svg class="a" style="left:1.8px;top:432.0px" width="16" height="16" viewBox="0 0 24 24"><path d="M4 4 L18 18" stroke="#4a4a4a" stroke-width="3"/><circle cx="6" cy="6" r="3" fill="#4a4a4a"/></svg>
<svg class="a" style="left:1.8px;top:451.0px" width="16" height="16" viewBox="0 0 24 24"><rect x="4" y="4" width="16" height="16" fill="none" stroke="#4a4a4a" stroke-width="1.6"/><rect x="6" y="11" width="12" height="7" fill="#4a4a4a"/></svg>
<svg class="a" style="left:1.8px;top:471.5px" width="16" height="16" viewBox="0 0 24 24"><g stroke="#4a4a4a" stroke-width="1.4"><path d="M12 4 V20 M4 12 H20 M6 6 L18 18 M18 6 L6 18"/></g><circle cx="12" cy="12" r="2.5" fill="#b05a5a"/></svg>
<svg class="a" style="left:1.8px;top:492.0px" width="16" height="16" viewBox="0 0 24 24"><path d="M2 12 Q12 3 22 12 Q12 21 2 12Z" fill="#f0f0f0" stroke="#4a4a4a" stroke-width="1.6"/><circle cx="12" cy="12" r="3.5" fill="#4a4a4a"/></svg>
<div class="a" style="left:3px;top:513px;width:15px;height:1px;background:#8a8a8a"></div>
<div class="a" style="left:3px;top:579px;width:15px;height:1px;background:#8a8a8a"></div>
<svg class="a" style="left:1.5px;top:518.0px" width="16" height="16" viewBox="0 0 24 24"><rect x="4" y="3" width="16" height="18" fill="#eee" stroke="#4a4a4a" stroke-width="1.6"/><path d="M7 8 H15 M7 11 H13 M7 14 H15 M7 17 H12" stroke="#4a4a4a" stroke-width="1.2"/></svg>
<svg class="a" style="left:1.5px;top:538.0px" width="16" height="16" viewBox="0 0 24 24"><rect x="3" y="3" width="18" height="18" fill="#4a4a4a"/></svg>
<svg class="a" style="left:1.5px;top:558.0px" width="16" height="16" viewBox="0 0 24 24"><rect x="3" y="3" width="18" height="18" fill="#4a4a4a"/><path d="M7 8 H15 M7 11 H13 M7 14 H15 M7 17 H12" stroke="#aaa" stroke-width="1.2"/></svg>
<svg class="a" style="left:1.5px;top:584.0px" width="16" height="16" viewBox="0 0 24 24"><path d="M3 3 H19 L13 10 V17 L9 15 V10Z" fill="#9a9a9a"/><circle cx="16" cy="17" r="4" fill="none" stroke="#9a9a9a" stroke-width="1.2"/></svg>
<svg class="a" style="left:1.5px;top:604.0px" width="16" height="16" viewBox="0 0 24 24"><path d="M3 3 H21 L14 11 V21 L10 19 V11Z" fill="#4a4a4a"/></svg>
<svg class="a" style="left:1.5px;top:626.0px" width="16" height="16" viewBox="0 0 24 24"><path d="M3 8 H7 V4 H10 V8 H14 V4 H17 V8 H21 V21 H3Z" fill="none" stroke="#4a4a4a" stroke-width="1.8"/></svg>
<svg class="a" style="left:38.0px;top:287.0px" width="14" height="14" viewBox="0 0 24 24"><path d="M2 12 Q12 4 22 12 Q12 20 2 12Z" fill="#f4f4f4" stroke="#4a4a4a" stroke-width="2"/><circle cx="12" cy="12" r="3.5" fill="#4a4a4a"/></svg>
<div class="a" style="left:55px;top:289px;width:10px;height:10px;border-radius:50%;background:#4a4a4a"></div>
<svg class="a" style="left:220.0px;top:287.0px" width="14" height="14" viewBox="0 0 24 24"><g stroke="#eaeaea" stroke-width="2"><path d="M12 2 V22 M3 7 L21 17 M21 7 L3 17"/></g></svg>
<svg class="a" style="left:38.0px;top:306.0px" width="14" height="14" viewBox="0 0 24 24"><path d="M2 12 Q12 4 22 12 Q12 20 2 12Z" fill="#f4f4f4" stroke="#4a4a4a" stroke-width="2"/><circle cx="12" cy="12" r="3.5" fill="#4a4a4a"/></svg>
<div class="a" style="left:55px;top:308px;width:10px;height:10px;border-radius:50%;background:#4a4a4a"></div>
<svg class="a" style="left:220.0px;top:306.0px" width="14" height="14" viewBox="0 0 24 24"><g stroke="#eaeaea" stroke-width="2"><path d="M12 2 V22 M3 7 L21 17 M21 7 L3 17"/></g></svg>
<svg class="a" style="left:163.0px;top:1127.0px" width="18" height="18" viewBox="0 0 24 24"><path d="M12 3 L22 8 L12 13 L2 8Z" fill="#4a4a4a"/><path d="M2 12 L12 17 L22 12 M2 16 L12 21 L22 16" fill="none" stroke="#4a4a4a" stroke-width="2.2"/></svg>
<svg class="a" style="left:187.0px;top:1127.0px" width="18" height="18" viewBox="0 0 24 24"><rect x="6" y="2" width="12" height="6" fill="#4a4a4a"/><path d="M12 8 V12 M5 12 H19 M5 12 V17 M19 12 V17" stroke="#4a4a4a" stroke-width="1.8" fill="none"/><circle cx="5" cy="19" r="2.2" fill="#4a4a4a"/><circle cx="19" cy="19" r="2.2" fill="#4a4a4a"/></svg>
<svg class="a" style="left:0;top:0" width="2247" height="1200" viewBox="0 0 2247 1200">
<defs><pattern id="meshF" width="2.6" height="2.6" patternUnits="userSpaceOnUse"><rect width="2.6" height="2.6" fill="#e7c54e"/><rect x="0.33" y="0.33" width="1.95" height="1.95" fill="#7f7f7f"/></pattern><pattern id="meshL" width="3.4" height="3.4" patternUnits="userSpaceOnUse"><rect width="3.4" height="3.4" fill="#e7c54e"/><rect x="0.43" y="0.43" width="2.55" height="2.55" fill="#7f7f7f"/></pattern><filter id="blur1" x="-20%" y="-20%" width="140%" height="140%"><feGaussianBlur stdDeviation="6"/></filter><linearGradient id="pbg" x1="0" y1="0" x2="0" y2="1"><stop offset="0" stop-color="#4e4e4e"/><stop offset="0.45" stop-color="#767676"/><stop offset="1" stop-color="#9e9e9e"/></linearGradient></defs>
<rect x="258" y="205" width="1664" height="947" fill="#d9dde2"/>
<rect x="260" y="207" width="828" height="470" fill="#2f353d"/>
<rect x="262" y="209" width="824" height="466" fill="#7f7f7f"/>
<rect x="1091" y="207" width="829" height="470" fill="#2f353d"/>
<rect x="1093" y="209" width="825" height="466" fill="#7f7f7f"/>
<rect x="260" y="680" width="828" height="470" fill="#2f353d"/>
<rect x="262" y="682" width="824" height="466" fill="#7f7f7f"/>
<line x1="371" y1="209" x2="371" y2="675" stroke="#747474" stroke-width="1"/>
<line x1="521" y1="209" x2="521" y2="675" stroke="#747474" stroke-width="1"/>
<line x1="825" y1="209" x2="825" y2="675" stroke="#747474" stroke-width="1"/>
<line x1="976" y1="209" x2="976" y2="675" stroke="#747474" stroke-width="1"/>
<line x1="262" y1="290" x2="1086" y2="290" stroke="#747474" stroke-width="1"/>
<line x1="262" y1="592" x2="1086" y2="592" stroke="#747474" stroke-width="1"/>
<line x1="673.5" y1="209" x2="673.5" y2="675" stroke="#151515" stroke-width="1.3"/>
<line x1="262" y1="441" x2="1086" y2="441" stroke="#151515" stroke-width="1.3"/>
<line x1="1148" y1="209" x2="1148" y2="675" stroke="#747474" stroke-width="1"/>
<line x1="1326" y1="209" x2="1326" y2="675" stroke="#747474" stroke-width="1"/>
<line x1="1684" y1="209" x2="1684" y2="675" stroke="#747474" stroke-width="1"/>
<line x1="1862" y1="209" x2="1862" y2="675" stroke="#747474" stroke-width="1"/>
<line x1="1093" y1="320" x2="1918" y2="320" stroke="#7a7a7a" stroke-width="1"/>
<line x1="1506" y1="209" x2="1506" y2="675" stroke="#151515" stroke-width="1.3"/>
<line x1="1093" y1="498" x2="1918" y2="498" stroke="#151515" stroke-width="1.3"/>
<line x1="407" y1="682" x2="407" y2="1148" stroke="#747474" stroke-width="1"/>
<line x1="943" y1="682" x2="943" y2="1148" stroke="#747474" stroke-width="1"/>
<line x1="262" y1="733" x2="1086" y2="733" stroke="#7a7a7a" stroke-width="1"/>
<line x1="675" y1="682" x2="675" y2="1148" stroke="#151515" stroke-width="1.3"/>
<line x1="262" y1="1001" x2="1086" y2="1001" stroke="#151515" stroke-width="1.3"/>
<rect x="376" y="243" width="595" height="397" fill="none" stroke="#e7c54e" stroke-width="2"/>
<rect x="381" y="247.5" width="585" height="388" fill="none" stroke="#9cc0cc" stroke-width="1.2"/>
<rect x="385" y="251.5" width="577" height="380" fill="none" stroke="#e7c54e" stroke-width="2"/>
<line x1="543" y1="243" x2="803" y2="243" stroke="#e7c54e" stroke-width="3.5"/>
<line x1="376" y1="412" x2="376" y2="468" stroke="#e7c54e" stroke-width="3.5"/>
<line x1="962" y1="388" x2="962" y2="492" stroke="#e7c54e" stroke-width="3"/>
<line x1="376" y1="243" x2="385" y2="252" stroke="#e7c54e" stroke-width="1.2"/>
<line x1="971" y1="243" x2="962" y2="252" stroke="#e7c54e" stroke-width="1.2"/>
<line x1="376" y1="640" x2="385" y2="631" stroke="#e7c54e" stroke-width="1.2"/>
<line x1="971" y1="640" x2="962" y2="631" stroke="#e7c54e" stroke-width="1.2"/>
<line x1="525" y1="243" x2="528" y2="251" stroke="#e7c54e" stroke-width="1.2"/>
<line x1="822" y1="243" x2="819" y2="251" stroke="#e7c54e" stroke-width="1.2"/>
<line x1="525" y1="640" x2="528" y2="632" stroke="#e7c54e" stroke-width="1.2"/>
<line x1="822" y1="640" x2="819" y2="632" stroke="#e7c54e" stroke-width="1.2"/>
<line x1="376" y1="344" x2="385" y2="340" stroke="#e7c54e" stroke-width="1.2"/>
<line x1="376" y1="538" x2="385" y2="542" stroke="#e7c54e" stroke-width="1.2"/>
<line x1="971" y1="344" x2="962" y2="340" stroke="#e7c54e" stroke-width="1.2"/>
<line x1="971" y1="538" x2="962" y2="542" stroke="#e7c54e" stroke-width="1.2"/>
<circle cx="387.5" cy="254" r="8" fill="#e9c94c" stroke="#d8b83c" stroke-width="1"/>
<circle cx="387.5" cy="254" r="4" fill="none" stroke="#c8a83a" stroke-width="0.8" stroke-dasharray="2 2"/>
<circle cx="958" cy="254" r="8" fill="#e9c94c" stroke="#d8b83c" stroke-width="1"/>
<circle cx="958" cy="254" r="4" fill="none" stroke="#c8a83a" stroke-width="0.8" stroke-dasharray="2 2"/>
<circle cx="387.5" cy="628.5" r="8" fill="#e9c94c" stroke="#d8b83c" stroke-width="1"/>
<circle cx="387.5" cy="628.5" r="4" fill="none" stroke="#c8a83a" stroke-width="0.8" stroke-dasharray="2 2"/>
<circle cx="958" cy="628.5" r="8" fill="#e9c94c" stroke="#d8b83c" stroke-width="1"/>
<circle cx="958" cy="628.5" r="4" fill="none" stroke="#c8a83a" stroke-width="0.8" stroke-dasharray="2 2"/>
<rect x="1154" y="385.5" width="702" height="92" fill="url(#meshF)"/>
<path d="M1177.4 386.6 L1247.6 386.6 L1242.3 395.3 L1182.7 395.3Z M1184.3 396.4 L1240.7 396.4 L1240.7 405.0 L1229.3 405.0 L1229.3 409.6 L1229.1 412.2 L1228.6 414.5 L1227.6 416.5 L1226.4 418.0 L1225.0 419.0 L1223.5 419.3 L1201.5 419.3 L1200.0 419.0 L1198.6 418.0 L1197.4 416.5 L1196.4 414.5 L1195.9 412.2 L1195.7 409.6 L1195.7 405.0 L1184.3 405.0Z M1184.3 466.6 L1240.7 466.6 L1240.7 458.0 L1229.3 458.0 L1229.3 453.4 L1229.1 450.8 L1228.6 448.5 L1227.6 446.5 L1226.4 445.0 L1225.0 444.0 L1223.5 443.7 L1201.5 443.7 L1200.0 444.0 L1198.6 445.0 L1197.4 446.5 L1196.4 448.5 L1195.9 450.8 L1195.7 453.4 L1195.7 458.0 L1184.3 458.0Z M1177.4 476.4 L1247.6 476.4 L1242.3 467.7 L1182.7 467.7Z M1294.4 386.6 L1364.6 386.6 L1359.3 395.3 L1299.7 395.3Z M1301.3 396.4 L1357.7 396.4 L1357.7 405.0 L1346.3 405.0 L1346.3 409.6 L1346.1 412.2 L1345.6 414.5 L1344.6 416.5 L1343.4 418.0 L1342.0 419.0 L1340.5 419.3 L1318.5 419.3 L1317.0 419.0 L1315.6 418.0 L1314.4 416.5 L1313.4 414.5 L1312.9 412.2 L1312.7 409.6 L1312.7 405.0 L1301.3 405.0Z M1301.3 466.6 L1357.7 466.6 L1357.7 458.0 L1346.3 458.0 L1346.3 453.4 L1346.1 450.8 L1345.6 448.5 L1344.6 446.5 L1343.4 445.0 L1342.0 444.0 L1340.5 443.7 L1318.5 443.7 L1317.0 444.0 L1315.6 445.0 L1314.4 446.5 L1313.4 448.5 L1312.9 450.8 L1312.7 453.4 L1312.7 458.0 L1301.3 458.0Z M1294.4 476.4 L1364.6 476.4 L1359.3 467.7 L1299.7 467.7Z M1411.4 386.6 L1481.6 386.6 L1476.3 395.3 L1416.7 395.3Z M1418.3 396.4 L1474.7 396.4 L1474.7 405.0 L1463.3 405.0 L1463.3 409.6 L1463.1 412.2 L1462.6 414.5 L1461.6 416.5 L1460.4 418.0 L1459.0 419.0 L1457.5 419.3 L1435.5 419.3 L1434.0 419.0 L1432.6 418.0 L1431.4 416.5 L1430.4 414.5 L1429.9 412.2 L1429.7 409.6 L1429.7 405.0 L1418.3 405.0Z M1418.3 466.6 L1474.7 466.6 L1474.7 458.0 L1463.3 458.0 L1463.3 453.4 L1463.1 450.8 L1462.6 448.5 L1461.6 446.5 L1460.4 445.0 L1459.0 444.0 L1457.5 443.7 L1435.5 443.7 L1434.0 444.0 L1432.6 445.0 L1431.4 446.5 L1430.4 448.5 L1429.9 450.8 L1429.7 453.4 L1429.7 458.0 L1418.3 458.0Z M1411.4 476.4 L1481.6 476.4 L1476.3 467.7 L1416.7 467.7Z M1528.4 386.6 L1598.6 386.6 L1593.3 395.3 L1533.7 395.3Z M1535.3 396.4 L1591.7 396.4 L1591.7 405.0 L1580.3 405.0 L1580.3 409.6 L1580.1 412.2 L1579.6 414.5 L1578.6 416.5 L1577.4 418.0 L1576.0 419.0 L1574.5 419.3 L1552.5 419.3 L1551.0 419.0 L1549.6 418.0 L1548.4 416.5 L1547.4 414.5 L1546.9 412.2 L1546.7 409.6 L1546.7 405.0 L1535.3 405.0Z M1535.3 466.6 L1591.7 466.6 L1591.7 458.0 L1580.3 458.0 L1580.3 453.4 L1580.1 450.8 L1579.6 448.5 L1578.6 446.5 L1577.4 445.0 L1576.0 444.0 L1574.5 443.7 L1552.5 443.7 L1551.0 444.0 L1549.6 445.0 L1548.4 446.5 L1547.4 448.5 L1546.9 450.8 L1546.7 453.4 L1546.7 458.0 L1535.3 458.0Z M1528.4 476.4 L1598.6 476.4 L1593.3 467.7 L1533.7 467.7Z M1645.4 386.6 L1715.6 386.6 L1710.3 395.3 L1650.7 395.3Z M1652.3 396.4 L1708.7 396.4 L1708.7 405.0 L1697.3 405.0 L1697.3 409.6 L1697.1 412.2 L1696.6 414.5 L1695.6 416.5 L1694.4 418.0 L1693.0 419.0 L1691.5 419.3 L1669.5 419.3 L1668.0 419.0 L1666.6 418.0 L1665.4 416.5 L1664.4 414.5 L1663.9 412.2 L1663.7 409.6 L1663.7 405.0 L1652.3 405.0Z M1652.3 466.6 L1708.7 466.6 L1708.7 458.0 L1697.3 458.0 L1697.3 453.4 L1697.1 450.8 L1696.6 448.5 L1695.6 446.5 L1694.4 445.0 L1693.0 444.0 L1691.5 443.7 L1669.5 443.7 L1668.0 444.0 L1666.6 445.0 L1665.4 446.5 L1664.4 448.5 L1663.9 450.8 L1663.7 453.4 L1663.7 458.0 L1652.3 458.0Z M1645.4 476.4 L1715.6 476.4 L1710.3 467.7 L1650.7 467.7Z M1762.4 386.6 L1832.6 386.6 L1827.3 395.3 L1767.7 395.3Z M1769.3 396.4 L1825.7 396.4 L1825.7 405.0 L1814.3 405.0 L1814.3 409.6 L1814.1 412.2 L1813.6 414.5 L1812.6 416.5 L1811.4 418.0 L1810.0 419.0 L1808.5 419.3 L1786.5 419.3 L1785.0 419.0 L1783.6 418.0 L1782.4 416.5 L1781.4 414.5 L1780.9 412.2 L1780.7 409.6 L1780.7 405.0 L1769.3 405.0Z M1769.3 466.6 L1825.7 466.6 L1825.7 458.0 L1814.3 458.0 L1814.3 453.4 L1814.1 450.8 L1813.6 448.5 L1812.6 446.5 L1811.4 445.0 L1810.0 444.0 L1808.5 443.7 L1786.5 443.7 L1785.0 444.0 L1783.6 445.0 L1782.4 446.5 L1781.4 448.5 L1780.9 450.8 L1780.7 453.4 L1780.7 458.0 L1769.3 458.0Z M1762.4 476.4 L1832.6 476.4 L1827.3 467.7 L1767.7 467.7Z M1154.0 431.5 L1154.0 431.1 L1154.0 429.8 L1154.0 427.8 L1154.0 425.2 L1154.0 422.2 L1154.0 418.9 L1154.0 418.9 L1154.0 412.3 L1154.0 408.7 L1154.0 405.4 L1154.0 402.5 L1154.0 400.3 L1154.0 398.9 L1154.0 398.5 L1157.3 398.5 L1160.5 398.9 L1163.5 400.3 L1166.0 402.5 L1168.0 405.4 L1169.2 408.7 L1169.6 412.3 L1169.6 418.9 L1184.0 418.9 L1184.1 422.2 L1184.6 425.2 L1185.4 427.8 L1186.4 429.8 L1187.5 431.1 L1188.7 431.5 L1187.5 431.9 L1186.4 433.2 L1185.4 435.2 L1184.6 437.8 L1184.1 440.8 L1184.0 444.1 L1169.6 444.1 L1169.6 450.7 L1169.2 454.3 L1168.0 457.6 L1166.0 460.5 L1163.5 462.7 L1160.5 464.1 L1157.3 464.5 L1154.0 464.5 L1154.0 464.1 L1154.0 462.7 L1154.0 460.5 L1154.0 457.6 L1154.0 454.3 L1154.0 450.7 L1154.0 444.1 L1154.0 444.1 L1154.0 440.8 L1154.0 437.8 L1154.0 435.2 L1154.0 433.2 L1154.0 431.9Z M1236.3 431.5 L1237.5 431.1 L1238.6 429.8 L1239.6 427.8 L1240.4 425.2 L1240.9 422.2 L1241.0 418.9 L1255.4 418.9 L1255.4 412.3 L1255.8 408.7 L1257.0 405.4 L1259.0 402.5 L1261.5 400.3 L1264.5 398.9 L1267.7 398.5 L1274.3 398.5 L1277.5 398.9 L1280.5 400.3 L1283.0 402.5 L1285.0 405.4 L1286.2 408.7 L1286.6 412.3 L1286.6 418.9 L1301.0 418.9 L1301.1 422.2 L1301.6 425.2 L1302.4 427.8 L1303.4 429.8 L1304.5 431.1 L1305.7 431.5 L1304.5 431.9 L1303.4 433.2 L1302.4 435.2 L1301.6 437.8 L1301.1 440.8 L1301.0 444.1 L1286.6 444.1 L1286.6 450.7 L1286.2 454.3 L1285.0 457.6 L1283.0 460.5 L1280.5 462.7 L1277.5 464.1 L1274.3 464.5 L1267.7 464.5 L1264.5 464.1 L1261.5 462.7 L1259.0 460.5 L1257.0 457.6 L1255.8 454.3 L1255.4 450.7 L1255.4 444.1 L1241.0 444.1 L1240.9 440.8 L1240.4 437.8 L1239.6 435.2 L1238.6 433.2 L1237.5 431.9Z M1353.3 431.5 L1354.5 431.1 L1355.6 429.8 L1356.6 427.8 L1357.4 425.2 L1357.9 422.2 L1358.0 418.9 L1372.4 418.9 L1372.4 412.3 L1372.8 408.7 L1374.0 405.4 L1376.0 402.5 L1378.5 400.3 L1381.5 398.9 L1384.7 398.5 L1391.3 398.5 L1394.5 398.9 L1397.5 400.3 L1400.0 402.5 L1402.0 405.4 L1403.2 408.7 L1403.6 412.3 L1403.6 418.9 L1418.0 418.9 L1418.1 422.2 L1418.6 425.2 L1419.4 427.8 L1420.4 429.8 L1421.5 431.1 L1422.7 431.5 L1421.5 431.9 L1420.4 433.2 L1419.4 435.2 L1418.6 437.8 L1418.1 440.8 L1418.0 444.1 L1403.6 444.1 L1403.6 450.7 L1403.2 454.3 L1402.0 457.6 L1400.0 460.5 L1397.5 462.7 L1394.5 464.1 L1391.3 464.5 L1384.7 464.5 L1381.5 464.1 L1378.5 462.7 L1376.0 460.5 L1374.0 457.6 L1372.8 454.3 L1372.4 450.7 L1372.4 444.1 L1358.0 444.1 L1357.9 440.8 L1357.4 437.8 L1356.6 435.2 L1355.6 433.2 L1354.5 431.9Z M1470.3 431.5 L1471.5 431.1 L1472.6 429.8 L1473.6 427.8 L1474.4 425.2 L1474.9 422.2 L1475.0 418.9 L1489.4 418.9 L1489.4 412.3 L1489.8 408.7 L1491.0 405.4 L1493.0 402.5 L1495.5 400.3 L1498.5 398.9 L1501.7 398.5 L1508.3 398.5 L1511.5 398.9 L1514.5 400.3 L1517.0 402.5 L1519.0 405.4 L1520.2 408.7 L1520.6 412.3 L1520.6 418.9 L1535.0 418.9 L1535.1 422.2 L1535.6 425.2 L1536.4 427.8 L1537.4 429.8 L1538.5 431.1 L1539.7 431.5 L1538.5 431.9 L1537.4 433.2 L1536.4 435.2 L1535.6 437.8 L1535.1 440.8 L1535.0 444.1 L1520.6 444.1 L1520.6 450.7 L1520.2 454.3 L1519.0 457.6 L1517.0 460.5 L1514.5 462.7 L1511.5 464.1 L1508.3 464.5 L1501.7 464.5 L1498.5 464.1 L1495.5 462.7 L1493.0 460.5 L1491.0 457.6 L1489.8 454.3 L1489.4 450.7 L1489.4 444.1 L1475.0 444.1 L1474.9 440.8 L1474.4 437.8 L1473.6 435.2 L1472.6 433.2 L1471.5 431.9Z M1587.3 431.5 L1588.5 431.1 L1589.6 429.8 L1590.6 427.8 L1591.4 425.2 L1591.9 422.2 L1592.0 418.9 L1606.4 418.9 L1606.4 412.3 L1606.8 408.7 L1608.0 405.4 L1610.0 402.5 L1612.5 400.3 L1615.5 398.9 L1618.7 398.5 L1625.3 398.5 L1628.5 398.9 L1631.5 400.3 L1634.0 402.5 L1636.0 405.4 L1637.2 408.7 L1637.6 412.3 L1637.6 418.9 L1652.0 418.9 L1652.1 422.2 L1652.6 425.2 L1653.4 427.8 L1654.4 429.8 L1655.5 431.1 L1656.7 431.5 L1655.5 431.9 L1654.4 433.2 L1653.4 435.2 L1652.6 437.8 L1652.1 440.8 L1652.0 444.1 L1637.6 444.1 L1637.6 450.7 L1637.2 454.3 L1636.0 457.6 L1634.0 460.5 L1631.5 462.7 L1628.5 464.1 L1625.3 464.5 L1618.7 464.5 L1615.5 464.1 L1612.5 462.7 L1610.0 460.5 L1608.0 457.6 L1606.8 454.3 L1606.4 450.7 L1606.4 444.1 L1592.0 444.1 L1591.9 440.8 L1591.4 437.8 L1590.6 435.2 L1589.6 433.2 L1588.5 431.9Z M1704.3 431.5 L1705.5 431.1 L1706.6 429.8 L1707.6 427.8 L1708.4 425.2 L1708.9 422.2 L1709.0 418.9 L1723.4 418.9 L1723.4 412.3 L1723.8 408.7 L1725.0 405.4 L1727.0 402.5 L1729.5 400.3 L1732.5 398.9 L1735.7 398.5 L1742.3 398.5 L1745.5 398.9 L1748.5 400.3 L1751.0 402.5 L1753.0 405.4 L1754.2 408.7 L1754.6 412.3 L1754.6 418.9 L1769.0 418.9 L1769.1 422.2 L1769.6 425.2 L1770.4 427.8 L1771.4 429.8 L1772.5 431.1 L1773.7 431.5 L1772.5 431.9 L1771.4 433.2 L1770.4 435.2 L1769.6 437.8 L1769.1 440.8 L1769.0 444.1 L1754.6 444.1 L1754.6 450.7 L1754.2 454.3 L1753.0 457.6 L1751.0 460.5 L1748.5 462.7 L1745.5 464.1 L1742.3 464.5 L1735.7 464.5 L1732.5 464.1 L1729.5 462.7 L1727.0 460.5 L1725.0 457.6 L1723.8 454.3 L1723.4 450.7 L1723.4 444.1 L1709.0 444.1 L1708.9 440.8 L1708.4 437.8 L1707.6 435.2 L1706.6 433.2 L1705.5 431.9Z M1821.3 431.5 L1822.5 431.1 L1823.6 429.8 L1824.6 427.8 L1825.4 425.2 L1825.9 422.2 L1826.0 418.9 L1840.4 418.9 L1840.4 412.3 L1840.8 408.7 L1842.0 405.4 L1844.0 402.5 L1846.5 400.3 L1849.5 398.9 L1852.7 398.5 L1856.0 398.5 L1856.0 398.9 L1856.0 400.3 L1856.0 402.5 L1856.0 405.4 L1856.0 408.7 L1856.0 412.3 L1856.0 418.9 L1856.0 418.9 L1856.0 422.2 L1856.0 425.2 L1856.0 427.8 L1856.0 429.8 L1856.0 431.1 L1856.0 431.5 L1856.0 431.9 L1856.0 433.2 L1856.0 435.2 L1856.0 437.8 L1856.0 440.8 L1856.0 444.1 L1856.0 444.1 L1856.0 450.7 L1856.0 454.3 L1856.0 457.6 L1856.0 460.5 L1856.0 462.7 L1856.0 464.1 L1856.0 464.5 L1852.7 464.5 L1849.5 464.1 L1846.5 462.7 L1844.0 460.5 L1842.0 457.6 L1840.8 454.3 L1840.4 450.7 L1840.4 444.1 L1826.0 444.1 L1825.9 440.8 L1825.4 437.8 L1824.6 435.2 L1823.6 433.2 L1822.5 431.9Z" fill="#7f7f7f" stroke="#e7c54e" stroke-width="1.3"/>
<line x1="1154" y1="385.5" x2="1856" y2="385.5" stroke="#e7c54e" stroke-width="2.2"/>
<line x1="1154" y1="396.4" x2="1856" y2="396.4" stroke="#e7c54e" stroke-width="2.2"/>
<line x1="1154" y1="466.6" x2="1856" y2="466.6" stroke="#e7c54e" stroke-width="2.2"/>
<line x1="1154" y1="477.5" x2="1856" y2="477.5" stroke="#e7c54e" stroke-width="2.2"/>
<line x1="1154" y1="385.5" x2="1154" y2="477.5" stroke="#e7c54e" stroke-width="2.2"/>
<line x1="1856" y1="385.5" x2="1856" y2="477.5" stroke="#e7c54e" stroke-width="2.2"/>
<circle cx="1169.0" cy="488.0" r="10.5" fill="url(#meshF)" stroke="#e7c54e" stroke-width="1.5"/>
<circle cx="1841.0" cy="488.0" r="10.5" fill="url(#meshF)" stroke="#e7c54e" stroke-width="1.5"/>
<rect x="324.5" y="834" width="702" height="135" fill="url(#meshL)"/>
<path d="M359.6 835.6 L464.9 835.6 L457.0 848.3 L367.5 848.3Z M370.0 849.9 L454.5 849.9 L454.5 862.6 L437.5 862.6 L437.5 869.4 L437.2 873.1 L436.3 876.5 L435.0 879.5 L433.1 881.7 L431.0 883.1 L428.7 883.6 L395.8 883.6 L393.5 883.1 L391.4 881.7 L389.5 879.5 L388.2 876.5 L387.3 873.1 L387.0 869.4 L387.0 862.6 L370.0 862.6Z M370.0 953.1 L454.5 953.1 L454.5 940.4 L437.5 940.4 L437.5 933.6 L437.2 929.9 L436.3 926.5 L435.0 923.5 L433.1 921.3 L431.0 919.9 L428.7 919.4 L395.8 919.4 L393.5 919.9 L391.4 921.3 L389.5 923.5 L388.2 926.5 L387.3 929.9 L387.0 933.6 L387.0 940.4 L370.0 940.4Z M359.6 967.4 L464.9 967.4 L457.0 954.7 L367.5 954.7Z M535.1 835.6 L640.4 835.6 L632.5 848.3 L543.0 848.3Z M545.5 849.9 L630.0 849.9 L630.0 862.6 L613.0 862.6 L613.0 869.4 L612.7 873.1 L611.8 876.5 L610.5 879.5 L608.6 881.7 L606.5 883.1 L604.2 883.6 L571.3 883.6 L569.0 883.1 L566.9 881.7 L565.0 879.5 L563.7 876.5 L562.8 873.1 L562.5 869.4 L562.5 862.6 L545.5 862.6Z M545.5 953.1 L630.0 953.1 L630.0 940.4 L613.0 940.4 L613.0 933.6 L612.7 929.9 L611.8 926.5 L610.5 923.5 L608.6 921.3 L606.5 919.9 L604.2 919.4 L571.3 919.4 L569.0 919.9 L566.9 921.3 L565.0 923.5 L563.7 926.5 L562.8 929.9 L562.5 933.6 L562.5 940.4 L545.5 940.4Z M535.1 967.4 L640.4 967.4 L632.5 954.7 L543.0 954.7Z M710.6 835.6 L815.9 835.6 L808.0 848.3 L718.5 848.3Z M721.0 849.9 L805.5 849.9 L805.5 862.6 L788.5 862.6 L788.5 869.4 L788.2 873.1 L787.3 876.5 L786.0 879.5 L784.1 881.7 L782.0 883.1 L779.7 883.6 L746.8 883.6 L744.5 883.1 L742.4 881.7 L740.5 879.5 L739.2 876.5 L738.3 873.1 L738.0 869.4 L738.0 862.6 L721.0 862.6Z M721.0 953.1 L805.5 953.1 L805.5 940.4 L788.5 940.4 L788.5 933.6 L788.2 929.9 L787.3 926.5 L786.0 923.5 L784.1 921.3 L782.0 919.9 L779.7 919.4 L746.8 919.4 L744.5 919.9 L742.4 921.3 L740.5 923.5 L739.2 926.5 L738.3 929.9 L738.0 933.6 L738.0 940.4 L721.0 940.4Z M710.6 967.4 L815.9 967.4 L808.0 954.7 L718.5 954.7Z M886.1 835.6 L991.4 835.6 L983.5 848.3 L894.0 848.3Z M896.5 849.9 L981.0 849.9 L981.0 862.6 L964.0 862.6 L964.0 869.4 L963.7 873.1 L962.8 876.5 L961.5 879.5 L959.6 881.7 L957.5 883.1 L955.2 883.6 L922.3 883.6 L920.0 883.1 L917.9 881.7 L916.0 879.5 L914.7 876.5 L913.8 873.1 L913.5 869.4 L913.5 862.6 L896.5 862.6Z M896.5 953.1 L981.0 953.1 L981.0 940.4 L964.0 940.4 L964.0 933.6 L963.7 929.9 L962.8 926.5 L961.5 923.5 L959.6 921.3 L957.5 919.9 L955.2 919.4 L922.3 919.4 L920.0 919.9 L917.9 921.3 L916.0 923.5 L914.7 926.5 L913.8 929.9 L913.5 933.6 L913.5 940.4 L896.5 940.4Z M886.1 967.4 L991.4 967.4 L983.5 954.7 L894.0 954.7Z M324.5 901.5 L324.5 900.9 L324.5 899.0 L324.5 896.1 L324.5 892.3 L324.5 887.8 L324.5 883.0 L324.5 883.0 L324.5 873.3 L324.5 868.0 L324.5 863.2 L324.5 859.0 L324.5 855.7 L324.5 853.7 L324.5 853.0 L329.5 853.0 L334.3 853.7 L338.7 855.7 L342.5 859.0 L345.5 863.2 L347.3 868.0 L347.9 873.3 L347.9 883.0 L369.4 883.0 L369.7 887.8 L370.4 892.3 L371.5 896.1 L373.0 899.0 L374.8 900.9 L376.6 901.5 L374.8 902.1 L373.0 904.0 L371.5 906.9 L370.4 910.7 L369.7 915.2 L369.4 920.0 L347.9 920.0 L347.9 929.7 L347.3 935.0 L345.5 939.8 L342.5 944.0 L338.7 947.3 L334.3 949.3 L329.5 950.0 L324.5 950.0 L324.5 949.3 L324.5 947.3 L324.5 944.0 L324.5 939.8 L324.5 935.0 L324.5 929.7 L324.5 920.0 L324.5 920.0 L324.5 915.2 L324.5 910.7 L324.5 906.9 L324.5 904.0 L324.5 902.1Z M447.9 901.5 L449.7 900.9 L451.5 899.0 L453.0 896.1 L454.1 892.3 L454.8 887.8 L455.1 883.0 L476.6 883.0 L476.6 873.3 L477.2 868.0 L479.0 863.2 L482.0 859.0 L485.8 855.7 L490.2 853.7 L495.0 853.0 L505.0 853.0 L509.8 853.7 L514.2 855.7 L518.0 859.0 L521.0 863.2 L522.8 868.0 L523.4 873.3 L523.4 883.0 L544.9 883.0 L545.2 887.8 L545.9 892.3 L547.0 896.1 L548.5 899.0 L550.3 900.9 L552.1 901.5 L550.3 902.1 L548.5 904.0 L547.0 906.9 L545.9 910.7 L545.2 915.2 L544.9 920.0 L523.4 920.0 L523.4 929.7 L522.8 935.0 L521.0 939.8 L518.0 944.0 L514.2 947.3 L509.8 949.3 L505.0 950.0 L495.0 950.0 L490.2 949.3 L485.8 947.3 L482.0 944.0 L479.0 939.8 L477.2 935.0 L476.6 929.7 L476.6 920.0 L455.1 920.0 L454.8 915.2 L454.1 910.7 L453.0 906.9 L451.5 904.0 L449.7 902.1Z M623.4 901.5 L625.2 900.9 L627.0 899.0 L628.5 896.1 L629.6 892.3 L630.3 887.8 L630.6 883.0 L652.1 883.0 L652.1 873.3 L652.7 868.0 L654.5 863.2 L657.5 859.0 L661.3 855.7 L665.7 853.7 L670.5 853.0 L680.5 853.0 L685.3 853.7 L689.7 855.7 L693.5 859.0 L696.5 863.2 L698.3 868.0 L698.9 873.3 L698.9 883.0 L720.4 883.0 L720.7 887.8 L721.4 892.3 L722.5 896.1 L724.0 899.0 L725.8 900.9 L727.6 901.5 L725.8 902.1 L724.0 904.0 L722.5 906.9 L721.4 910.7 L720.7 915.2 L720.4 920.0 L698.9 920.0 L698.9 929.7 L698.3 935.0 L696.5 939.8 L693.5 944.0 L689.7 947.3 L685.3 949.3 L680.5 950.0 L670.5 950.0 L665.7 949.3 L661.3 947.3 L657.5 944.0 L654.5 939.8 L652.7 935.0 L652.1 929.7 L652.1 920.0 L630.6 920.0 L630.3 915.2 L629.6 910.7 L628.5 906.9 L627.0 904.0 L625.2 902.1Z M798.9 901.5 L800.7 900.9 L802.5 899.0 L804.0 896.1 L805.1 892.3 L805.8 887.8 L806.1 883.0 L827.6 883.0 L827.6 873.3 L828.2 868.0 L830.0 863.2 L833.0 859.0 L836.8 855.7 L841.2 853.7 L846.0 853.0 L856.0 853.0 L860.8 853.7 L865.2 855.7 L869.0 859.0 L872.0 863.2 L873.8 868.0 L874.4 873.3 L874.4 883.0 L895.9 883.0 L896.2 887.8 L896.9 892.3 L898.0 896.1 L899.5 899.0 L901.3 900.9 L903.1 901.5 L901.3 902.1 L899.5 904.0 L898.0 906.9 L896.9 910.7 L896.2 915.2 L895.9 920.0 L874.4 920.0 L874.4 929.7 L873.8 935.0 L872.0 939.8 L869.0 944.0 L865.2 947.3 L860.8 949.3 L856.0 950.0 L846.0 950.0 L841.2 949.3 L836.8 947.3 L833.0 944.0 L830.0 939.8 L828.2 935.0 L827.6 929.7 L827.6 920.0 L806.1 920.0 L805.8 915.2 L805.1 910.7 L804.0 906.9 L802.5 904.0 L800.7 902.1Z M974.4 901.5 L976.2 900.9 L978.0 899.0 L979.5 896.1 L980.6 892.3 L981.3 887.8 L981.6 883.0 L1003.1 883.0 L1003.1 873.3 L1003.7 868.0 L1005.5 863.2 L1008.5 859.0 L1012.3 855.7 L1016.7 853.7 L1021.5 853.0 L1026.5 853.0 L1026.5 853.7 L1026.5 855.7 L1026.5 859.0 L1026.5 863.2 L1026.5 868.0 L1026.5 873.3 L1026.5 883.0 L1026.5 883.0 L1026.5 887.8 L1026.5 892.3 L1026.5 896.1 L1026.5 899.0 L1026.5 900.9 L1026.5 901.5 L1026.5 902.1 L1026.5 904.0 L1026.5 906.9 L1026.5 910.7 L1026.5 915.2 L1026.5 920.0 L1026.5 920.0 L1026.5 929.7 L1026.5 935.0 L1026.5 939.8 L1026.5 944.0 L1026.5 947.3 L1026.5 949.3 L1026.5 950.0 L1021.5 950.0 L1016.7 949.3 L1012.3 947.3 L1008.5 944.0 L1005.5 939.8 L1003.7 935.0 L1003.1 929.7 L1003.1 920.0 L981.6 920.0 L981.3 915.2 L980.6 910.7 L979.5 906.9 L978.0 904.0 L976.2 902.1Z" fill="#7f7f7f" stroke="#e7c54e" stroke-width="1.3"/>
<line x1="324.5" y1="834.0" x2="1026.5" y2="834.0" stroke="#e7c54e" stroke-width="2.2"/>
<line x1="324.5" y1="849.9" x2="1026.5" y2="849.9" stroke="#e7c54e" stroke-width="2.2"/>
<line x1="324.5" y1="953.1" x2="1026.5" y2="953.1" stroke="#e7c54e" stroke-width="2.2"/>
<line x1="324.5" y1="969.0" x2="1026.5" y2="969.0" stroke="#e7c54e" stroke-width="2.2"/>
<line x1="324.5" y1="834" x2="324.5" y2="969" stroke="#e7c54e" stroke-width="2.2"/>
<line x1="1026.5" y1="834" x2="1026.5" y2="969" stroke="#e7c54e" stroke-width="2.2"/>
<circle cx="344.5" cy="985.0" r="16" fill="url(#meshL)" stroke="#e7c54e" stroke-width="1.5"/>
<circle cx="1006.5" cy="985.0" r="16" fill="url(#meshL)" stroke="#e7c54e" stroke-width="1.5"/>
<line x1="1331" y1="386" x2="1331" y2="396.5" stroke="#e7c54e" stroke-width="1.3"/>
<line x1="1331" y1="466.5" x2="1331" y2="477" stroke="#e7c54e" stroke-width="1.3"/>
<line x1="1336.5" y1="386" x2="1336.5" y2="396.5" stroke="#e7c54e" stroke-width="1.3"/>
<line x1="1336.5" y1="466.5" x2="1336.5" y2="477" stroke="#e7c54e" stroke-width="1.3"/>
<line x1="1676" y1="386" x2="1676" y2="396.5" stroke="#e7c54e" stroke-width="1.3"/>
<line x1="1676" y1="466.5" x2="1676" y2="477" stroke="#e7c54e" stroke-width="1.3"/>
<line x1="1681.5" y1="386" x2="1681.5" y2="396.5" stroke="#e7c54e" stroke-width="1.3"/>
<line x1="1681.5" y1="466.5" x2="1681.5" y2="477" stroke="#e7c54e" stroke-width="1.3"/>
<rect x="1091" y="680" width="829" height="470" fill="#eef020"/>
<rect x="1093" y="682" width="825" height="466" fill="url(#pbg)"/>
<svg x="1093" y="682" width="825" height="466" viewBox="1093 682 825 466">
<line x1="1092.0" y1="682" x2="993.8" y2="1148" stroke="#a8a8a8" stroke-opacity="0.38" stroke-width="1"/>
<line x1="1175.6" y1="682" x2="1201.8" y2="1148" stroke="#a8a8a8" stroke-opacity="0.38" stroke-width="1"/>
<line x1="1259.1" y1="682" x2="1409.7" y2="1148" stroke="#a8a8a8" stroke-opacity="0.38" stroke-width="1"/>
<line x1="1342.7" y1="682" x2="1617.6" y2="1148" stroke="#101010" stroke-opacity="0.9" stroke-width="1.3"/>
<line x1="1426.2" y1="682" x2="1825.6" y2="1148" stroke="#a8a8a8" stroke-opacity="0.38" stroke-width="1"/>
<line x1="1509.8" y1="682" x2="2033.5" y2="1148" stroke="#a8a8a8" stroke-opacity="0.38" stroke-width="1"/>
<line x1="1593.3" y1="682" x2="2241.4" y2="1148" stroke="#a8a8a8" stroke-opacity="0.38" stroke-width="1"/>
<line x1="1676.9" y1="682" x2="2449.4" y2="1148" stroke="#a8a8a8" stroke-opacity="0.38" stroke-width="1"/>
<line x1="1760.4" y1="682" x2="2657.3" y2="1148" stroke="#a8a8a8" stroke-opacity="0.38" stroke-width="1"/>
<line x1="1844.0" y1="682" x2="2865.2" y2="1148" stroke="#a8a8a8" stroke-opacity="0.38" stroke-width="1"/>
<line x1="1927.5" y1="682" x2="3073.2" y2="1148" stroke="#a8a8a8" stroke-opacity="0.38" stroke-width="1"/>
<line x1="1093" y1="702.3" x2="1918" y2="637.1" stroke="#a8a8a8" stroke-opacity="0.38" stroke-width="1"/>
<line x1="1093" y1="725.9" x2="1918" y2="656.3" stroke="#a8a8a8" stroke-opacity="0.38" stroke-width="1"/>
<line x1="1093" y1="754.9" x2="1918" y2="679.9" stroke="#a8a8a8" stroke-opacity="0.38" stroke-width="1"/>
<line x1="1093" y1="788.9" x2="1918" y2="707.5" stroke="#a8a8a8" stroke-opacity="0.38" stroke-width="1"/>
<line x1="1093" y1="826.9" x2="1918" y2="738.3" stroke="#a8a8a8" stroke-opacity="0.38" stroke-width="1"/>
<line x1="1093" y1="877.9" x2="1918" y2="779.8" stroke="#a8a8a8" stroke-opacity="0.38" stroke-width="1"/>
<line x1="1093" y1="940.9" x2="1918" y2="830.9" stroke="#a8a8a8" stroke-opacity="0.38" stroke-width="1"/>
<line x1="1093" y1="1021.5" x2="1918" y2="896.5" stroke="#101010" stroke-opacity="0.9" stroke-width="1.3"/>
<line x1="1093" y1="1124.8" x2="1918" y2="980.4" stroke="#a8a8a8" stroke-opacity="0.38" stroke-width="1"/>
<mask id="hmask" maskUnits="userSpaceOnUse" x="1093" y="682" width="825" height="466"><rect x="1093" y="682" width="825" height="466" fill="#fff"/><path d=" M1206.6 836.7 L1254.7 831.2 L1254.7 833.4 L1245.2 834.5 L1245.2 837.6 L1245.0 839.2 L1244.5 840.8 L1243.7 842.2 L1242.7 843.3 L1241.5 844.1 L1240.2 844.5 L1221.4 846.6 L1220.1 846.6 L1218.9 846.1 L1217.9 845.2 L1217.1 844.0 L1216.5 842.5 L1216.4 840.9 L1216.4 837.8 L1206.6 838.9Z M1206.6 879.6 L1254.7 873.7 L1254.7 868.1 L1245.2 869.2 L1245.2 866.2 L1245.0 864.6 L1244.5 863.1 L1243.7 861.9 L1242.7 861.0 L1241.5 860.5 L1240.2 860.4 L1221.4 862.7 L1220.1 863.0 L1218.9 863.8 L1217.9 865.0 L1217.1 866.4 L1216.5 868.0 L1216.4 869.6 L1216.4 872.7 L1206.6 873.9Z M1304.8 825.6 L1349.8 820.5 L1349.8 822.6 L1340.8 823.7 L1340.8 826.6 L1340.7 828.3 L1340.2 829.8 L1339.5 831.2 L1338.5 832.3 L1337.4 833.0 L1336.2 833.4 L1318.6 835.4 L1317.4 835.3 L1316.3 834.9 L1315.3 834.0 L1314.6 832.8 L1314.1 831.3 L1313.9 829.7 L1313.9 826.7 L1304.8 827.8Z M1304.8 867.7 L1349.8 862.2 L1349.8 856.6 L1340.8 857.7 L1340.8 854.7 L1340.7 853.1 L1340.2 851.7 L1339.5 850.5 L1338.5 849.6 L1337.4 849.1 L1336.2 849.1 L1318.6 851.2 L1317.4 851.5 L1316.3 852.3 L1315.3 853.4 L1314.6 854.8 L1314.1 856.3 L1313.9 858.0 L1313.9 861.0 L1304.8 862.1Z M1396.6 815.2 L1438.7 810.4 L1438.7 812.5 L1430.4 813.5 L1430.4 816.4 L1430.2 818.0 L1429.8 819.5 L1429.1 820.9 L1428.2 822.0 L1427.2 822.7 L1426.0 823.0 L1409.6 824.9 L1408.4 824.8 L1407.4 824.4 L1406.5 823.5 L1405.8 822.3 L1405.3 820.9 L1405.2 819.3 L1405.2 816.4 L1396.6 817.3Z M1396.6 856.5 L1438.7 851.4 L1438.7 845.9 L1430.4 846.9 L1430.4 844.0 L1430.2 842.4 L1429.8 841.0 L1429.1 839.8 L1428.2 839.0 L1427.2 838.5 L1426.0 838.4 L1409.6 840.4 L1408.4 840.7 L1407.4 841.5 L1406.5 842.5 L1405.8 843.9 L1405.3 845.4 L1405.2 847.0 L1405.2 850.0 L1396.6 851.0Z M1482.6 805.4 L1522.2 801.0 L1522.2 803.1 L1514.3 804.0 L1514.3 806.8 L1514.2 808.4 L1513.8 809.9 L1513.2 811.2 L1512.3 812.3 L1511.3 813.0 L1510.3 813.3 L1494.8 815.1 L1493.8 815.0 L1492.8 814.5 L1491.9 813.7 L1491.3 812.5 L1490.8 811.1 L1490.7 809.5 L1490.7 806.6 L1482.6 807.6Z M1482.6 846.1 L1522.2 841.2 L1522.2 835.9 L1514.3 836.8 L1514.3 834.0 L1514.2 832.4 L1513.8 831.0 L1513.2 829.9 L1512.3 829.0 L1511.3 828.5 L1510.3 828.4 L1494.8 830.3 L1493.8 830.6 L1492.8 831.3 L1491.9 832.4 L1491.3 833.7 L1490.8 835.2 L1490.7 836.8 L1490.7 839.7 L1482.6 840.7Z M1563.5 796.3 L1600.7 792.1 L1600.7 794.1 L1593.3 795.0 L1593.3 797.8 L1593.1 799.4 L1592.8 800.8 L1592.2 802.1 L1591.4 803.2 L1590.4 803.8 L1589.4 804.2 L1574.9 805.8 L1573.9 805.8 L1573.0 805.3 L1572.2 804.4 L1571.6 803.3 L1571.2 801.9 L1571.0 800.4 L1571.0 797.5 L1563.5 798.4Z M1563.5 836.2 L1600.7 831.7 L1600.7 826.4 L1593.3 827.3 L1593.3 824.5 L1593.1 823.0 L1592.8 821.6 L1592.2 820.5 L1591.4 819.6 L1590.4 819.1 L1589.4 819.1 L1574.9 820.8 L1573.9 821.1 L1573.0 821.8 L1572.2 822.8 L1571.6 824.1 L1571.2 825.6 L1571.0 827.2 L1571.0 830.0 L1563.5 830.9Z M1639.5 787.7 L1674.6 783.7 L1674.6 785.8 L1667.6 786.5 L1667.6 789.3 L1667.5 790.9 L1667.1 792.3 L1666.5 793.6 L1665.8 794.6 L1664.9 795.3 L1664.0 795.6 L1650.3 797.1 L1649.3 797.1 L1648.5 796.6 L1647.7 795.7 L1647.1 794.6 L1646.8 793.2 L1646.6 791.7 L1646.6 788.9 L1639.5 789.7Z M1639.5 827.0 L1674.6 822.7 L1674.6 817.6 L1667.6 818.4 L1667.6 815.6 L1667.5 814.1 L1667.1 812.8 L1666.5 811.6 L1665.8 810.8 L1664.9 810.3 L1664.0 810.2 L1650.3 811.8 L1649.3 812.2 L1648.5 812.8 L1647.7 813.9 L1647.1 815.1 L1646.8 816.6 L1646.6 818.1 L1646.6 820.9 L1639.5 821.8Z M1191.1 858.2 L1191.1 857.9 L1191.1 857.1 L1191.1 855.8 L1191.1 854.0 L1191.1 852.0 L1191.1 849.9 L1191.1 849.9 L1191.1 845.5 L1191.1 843.1 L1191.1 840.9 L1191.1 839.0 L1191.1 838.4 L1191.1 838.4 L1191.1 838.4 L1191.1 838.4 L1191.1 838.4 L1191.1 838.4 L1191.1 839.0 L1192.3 840.8 L1193.4 842.9 L1193.7 845.2 L1193.7 849.6 L1206.2 848.1 L1206.4 850.3 L1206.8 852.2 L1207.5 853.9 L1208.3 855.1 L1209.3 855.8 L1210.4 855.9 L1209.3 856.4 L1208.3 857.3 L1207.5 858.7 L1206.8 860.5 L1206.4 862.6 L1206.2 864.7 L1193.7 866.2 L1193.7 870.6 L1193.4 873.0 L1192.3 875.3 L1191.1 877.4 L1191.1 878.8 L1191.1 879.7 L1191.1 880.1 L1191.1 880.1 L1191.1 879.7 L1191.1 878.8 L1191.1 877.4 L1191.1 875.5 L1191.1 873.3 L1191.1 870.9 L1191.1 866.5 L1191.1 866.5 L1191.1 864.4 L1191.1 862.4 L1191.1 860.6 L1191.1 859.3 L1191.1 858.5Z M1251.0 851.2 L1252.0 850.8 L1253.0 849.9 L1253.8 848.5 L1254.5 846.7 L1254.9 844.6 L1255.0 842.5 L1267.0 841.1 L1267.0 836.8 L1267.4 834.4 L1268.4 832.1 L1270.0 830.1 L1272.1 829.3 L1274.6 829.0 L1277.2 828.7 L1282.7 828.1 L1285.3 827.8 L1287.8 827.5 L1289.8 827.8 L1291.4 829.5 L1292.4 831.6 L1292.8 833.8 L1292.8 838.1 L1304.5 836.8 L1304.6 838.9 L1305.0 840.8 L1305.6 842.4 L1306.4 843.6 L1307.3 844.3 L1308.4 844.5 L1307.3 844.9 L1306.4 845.8 L1305.6 847.2 L1305.0 849.0 L1304.6 851.0 L1304.5 853.1 L1292.8 854.5 L1292.8 858.8 L1292.4 861.1 L1291.4 863.4 L1289.8 865.5 L1287.8 867.1 L1285.3 868.3 L1282.7 869.0 L1277.2 869.6 L1274.6 869.6 L1272.1 869.0 L1270.0 867.9 L1268.4 866.2 L1267.4 864.1 L1267.0 861.9 L1267.0 857.5 L1255.0 859.0 L1254.9 856.8 L1254.5 854.9 L1253.8 853.3 L1253.0 852.1 L1252.0 851.4Z M1346.3 840.1 L1347.3 839.7 L1348.2 838.7 L1348.9 837.4 L1349.5 835.6 L1349.9 833.6 L1350.0 831.5 L1361.3 830.2 L1361.3 826.0 L1361.6 823.7 L1362.5 821.4 L1364.1 819.4 L1366.0 818.6 L1368.3 818.4 L1370.8 818.1 L1375.9 817.5 L1378.4 817.2 L1380.7 817.0 L1382.6 817.3 L1384.1 819.0 L1385.1 821.0 L1385.4 823.2 L1385.4 827.5 L1396.3 826.2 L1396.4 828.2 L1396.8 830.1 L1397.4 831.7 L1398.1 832.9 L1399.0 833.6 L1400.0 833.8 L1399.0 834.2 L1398.1 835.1 L1397.4 836.4 L1396.8 838.1 L1396.4 840.1 L1396.3 842.2 L1385.4 843.5 L1385.4 847.7 L1385.1 850.0 L1384.1 852.3 L1382.6 854.3 L1380.7 855.9 L1378.4 857.1 L1375.9 857.7 L1370.8 858.3 L1368.3 858.3 L1366.0 857.7 L1364.1 856.5 L1362.5 854.9 L1361.6 852.9 L1361.3 850.6 L1361.3 846.4 L1350.0 847.7 L1349.9 845.6 L1349.5 843.7 L1348.9 842.1 L1348.2 840.9 L1347.3 840.2Z M1435.5 829.6 L1436.4 829.2 L1437.2 828.3 L1438.0 827.0 L1438.5 825.3 L1438.9 823.3 L1439.0 821.3 L1449.5 820.1 L1449.5 815.9 L1449.8 813.6 L1450.7 811.4 L1452.1 809.5 L1454.0 808.7 L1456.1 808.4 L1458.5 808.2 L1463.3 807.6 L1465.6 807.4 L1467.7 807.1 L1469.6 807.5 L1471.0 809.1 L1471.8 811.1 L1472.1 813.3 L1472.1 817.4 L1482.4 816.3 L1482.5 818.3 L1482.8 820.1 L1483.4 821.7 L1484.1 822.9 L1484.9 823.6 L1485.8 823.7 L1484.9 824.1 L1484.1 825.0 L1483.4 826.3 L1482.8 828.0 L1482.5 830.0 L1482.4 832.0 L1472.1 833.2 L1472.1 837.4 L1471.8 839.6 L1471.0 841.8 L1469.6 843.8 L1467.7 845.4 L1465.6 846.5 L1463.3 847.1 L1458.5 847.7 L1456.1 847.6 L1454.0 847.0 L1452.1 845.9 L1450.7 844.3 L1449.8 842.3 L1449.5 840.1 L1449.5 835.9 L1439.0 837.1 L1438.9 835.1 L1438.5 833.2 L1438.0 831.7 L1437.2 830.5 L1436.4 829.8Z M1519.1 819.8 L1520.0 819.5 L1520.8 818.6 L1521.5 817.3 L1522.0 815.6 L1522.3 813.7 L1522.5 811.6 L1532.3 810.5 L1532.3 806.4 L1532.6 804.2 L1533.5 802.0 L1534.8 800.1 L1536.5 799.3 L1538.6 799.1 L1540.7 798.9 L1545.3 798.3 L1547.4 798.1 L1549.4 797.9 L1551.2 798.2 L1552.5 799.8 L1553.3 801.8 L1553.6 804.0 L1553.6 808.0 L1563.2 806.9 L1563.3 808.9 L1563.7 810.8 L1564.2 812.3 L1564.8 813.5 L1565.6 814.1 L1566.4 814.3 L1565.6 814.7 L1564.8 815.5 L1564.2 816.8 L1563.7 818.5 L1563.3 820.4 L1563.2 822.4 L1553.6 823.6 L1553.6 827.6 L1553.3 829.9 L1552.5 832.0 L1551.2 833.9 L1549.4 835.5 L1547.4 836.6 L1545.3 837.1 L1540.7 837.7 L1538.6 837.7 L1536.5 837.1 L1534.8 835.9 L1533.5 834.3 L1532.6 832.4 L1532.3 830.2 L1532.3 826.1 L1522.5 827.3 L1522.3 825.2 L1522.0 823.4 L1521.5 821.8 L1520.8 820.7 L1520.0 820.0Z M1597.8 810.6 L1598.6 810.3 L1599.3 809.4 L1600.0 808.1 L1600.5 806.5 L1600.8 804.6 L1600.9 802.6 L1610.2 801.5 L1610.2 797.5 L1610.5 795.3 L1611.3 793.2 L1612.5 791.3 L1614.1 790.5 L1616.1 790.3 L1618.1 790.1 L1622.4 789.6 L1624.4 789.4 L1626.3 789.2 L1627.9 789.5 L1629.2 791.1 L1629.9 793.1 L1630.2 795.2 L1630.2 799.2 L1639.3 798.2 L1639.4 800.1 L1639.7 801.9 L1640.2 803.4 L1640.8 804.6 L1641.5 805.3 L1642.3 805.4 L1641.5 805.8 L1640.8 806.6 L1640.2 807.9 L1639.7 809.5 L1639.4 811.4 L1639.3 813.4 L1630.2 814.5 L1630.2 818.5 L1629.9 820.7 L1629.2 822.8 L1627.9 824.7 L1626.3 826.2 L1624.4 827.3 L1622.4 827.8 L1618.1 828.3 L1616.1 828.3 L1614.1 827.7 L1612.5 826.5 L1611.3 825.0 L1610.5 823.0 L1610.2 820.9 L1610.2 816.9 L1600.9 818.0 L1600.8 816.0 L1600.5 814.2 L1600.0 812.6 L1599.3 811.5 L1598.6 810.8Z M1671.8 802.0 L1672.6 801.6 L1673.3 800.8 L1673.9 799.5 L1674.4 797.9 L1674.7 796.0 L1674.8 794.1 L1683.5 793.1 L1683.5 789.1 L1683.8 786.9 L1684.5 784.8 L1685.7 783.0 L1687.3 782.3 L1689.1 782.1 L1689.6 782.0 L1689.6 782.0 L1689.6 782.0 L1689.6 782.0 L1689.6 782.6 L1689.6 784.3 L1689.6 786.3 L1689.6 788.4 L1689.6 792.4 L1689.6 792.4 L1689.6 794.3 L1689.6 796.1 L1689.6 797.7 L1689.6 798.9 L1689.6 799.6 L1689.6 799.9 L1689.6 800.2 L1689.6 800.9 L1689.6 802.1 L1689.6 803.7 L1689.6 805.5 L1689.6 807.4 L1689.6 807.4 L1689.6 811.4 L1689.6 813.5 L1689.6 815.5 L1689.6 817.2 L1689.6 818.6 L1689.6 819.4 L1689.6 819.7 L1689.6 819.7 L1689.1 819.4 L1687.3 818.8 L1685.7 817.7 L1684.5 816.1 L1683.8 814.2 L1683.5 812.1 L1683.5 808.2 L1674.8 809.2 L1674.7 807.2 L1674.4 805.5 L1673.9 803.9 L1673.3 802.8 L1672.6 802.1Z M1702.7 793.8 L1721.8 808.2 L1721.7 811.4 L1717.8 808.4 L1717.7 811.4 L1717.6 813.0 L1717.4 814.4 L1717.1 815.5 L1716.6 816.1 L1716.1 816.4 L1715.6 816.2 L1708.3 810.5 L1707.8 809.9 L1707.3 808.9 L1706.9 807.6 L1706.6 806.1 L1706.4 804.4 L1706.4 802.7 L1706.4 799.7 L1702.7 796.9Z M1702.5 836.1 L1721.0 851.3 L1721.1 846.3 L1717.2 843.2 L1717.3 840.1 L1717.2 838.4 L1717.1 836.7 L1716.8 835.2 L1716.4 833.8 L1715.9 832.8 L1715.4 832.2 L1708.1 826.4 L1707.6 826.2 L1707.1 826.5 L1706.7 827.1 L1706.4 828.2 L1706.2 829.6 L1706.1 831.1 L1706.1 834.2 L1702.5 831.2Z M1743.8 824.9 L1765.9 841.6 L1765.7 844.9 L1761.2 841.4 L1761.0 844.6 L1760.9 846.2 L1760.6 847.6 L1760.2 848.7 L1759.6 849.4 L1759.0 849.6 L1758.4 849.4 L1749.9 842.8 L1749.3 842.1 L1748.8 841.0 L1748.4 839.6 L1748.1 838.0 L1747.9 836.2 L1747.9 834.5 L1748.0 831.4 L1743.7 828.1Z M1742.4 868.9 L1763.9 886.5 L1764.1 881.3 L1759.7 877.7 L1759.8 874.5 L1759.8 872.7 L1759.6 870.9 L1759.3 869.3 L1758.9 867.9 L1758.4 866.7 L1757.8 866.1 L1749.3 859.3 L1748.7 859.1 L1748.2 859.3 L1747.7 860.0 L1747.3 861.0 L1747.0 862.4 L1746.9 864.1 L1746.8 867.2 L1742.6 863.8Z M1791.6 861.0 L1817.5 880.6 L1817.2 884.1 L1811.9 880.0 L1811.6 883.3 L1811.4 885.0 L1811.0 886.5 L1810.5 887.6 L1809.9 888.3 L1809.2 888.4 L1808.4 888.1 L1798.4 880.4 L1797.7 879.6 L1797.2 878.4 L1796.7 876.9 L1796.4 875.2 L1796.2 873.3 L1796.2 871.5 L1796.4 868.2 L1791.4 864.4Z M1788.9 907.0 L1814.1 927.7 L1814.5 922.3 L1809.3 918.0 L1809.5 914.7 L1809.5 912.8 L1809.4 910.9 L1809.0 909.1 L1808.6 907.6 L1808.0 906.4 L1807.3 905.6 L1797.3 897.7 L1796.7 897.3 L1796.0 897.5 L1795.4 898.2 L1794.9 899.3 L1794.5 900.7 L1794.3 902.4 L1794.1 905.7 L1789.2 901.7Z M1847.8 903.6 L1859.1 912.1 L1858.8 915.7 L1858.8 915.7 L1858.5 919.2 L1858.3 921.0 L1858.1 922.8 L1858.0 924.3 L1857.9 925.4 L1857.8 926.1 L1857.8 926.4 L1855.7 924.7 L1854.9 923.9 L1854.2 922.6 L1853.7 920.9 L1853.3 919.0 L1853.2 917.1 L1853.2 915.1 L1853.5 911.7 L1847.5 907.1Z M1843.7 951.9 L1854.7 961.0 L1855.2 955.3 L1855.2 955.3 L1855.5 951.8 L1855.7 950.0 L1855.8 948.2 L1856.0 946.7 L1856.1 945.6 L1856.1 944.9 L1856.1 944.6 L1854.0 942.9 L1853.2 942.5 L1852.4 942.7 L1851.7 943.3 L1851.1 944.4 L1850.6 945.9 L1850.3 947.7 L1850.0 951.1 L1844.2 946.4Z M1694.8 807.9 L1694.8 807.6 L1694.8 806.8 L1694.8 805.5 L1694.8 803.8 L1694.8 801.9 L1694.8 799.8 L1694.8 799.8 L1694.8 795.5 L1694.8 793.2 L1694.8 791.1 L1694.8 789.3 L1694.8 787.8 L1694.8 787.8 L1694.8 787.8 L1694.8 787.8 L1695.1 788.0 L1696.0 788.8 L1696.8 790.8 L1697.4 793.1 L1697.8 795.6 L1697.9 798.0 L1697.9 802.2 L1702.5 805.8 L1702.6 807.9 L1702.7 810.0 L1702.9 811.9 L1703.3 813.5 L1703.6 814.6 L1704.0 815.2 L1703.6 815.1 L1703.2 815.7 L1702.9 816.7 L1702.7 818.2 L1702.5 820.0 L1702.4 822.1 L1697.9 818.5 L1697.9 822.7 L1697.7 824.9 L1697.3 826.8 L1696.7 828.1 L1695.9 828.9 L1695.0 829.0 L1694.7 829.1 L1694.7 829.1 L1694.7 828.8 L1694.7 827.9 L1694.7 826.5 L1694.7 824.7 L1694.7 822.5 L1694.7 820.2 L1694.7 816.0 L1694.7 816.0 L1694.7 813.9 L1694.7 811.9 L1694.7 810.2 L1694.7 809.0 L1694.8 808.2Z M1719.9 827.6 L1720.3 827.7 L1720.7 827.2 L1721.1 826.1 L1721.4 824.6 L1721.6 822.7 L1721.7 820.6 L1726.7 824.5 L1726.8 820.1 L1727.0 817.9 L1727.5 816.0 L1728.2 814.6 L1729.1 813.8 L1730.2 814.6 L1731.3 815.5 L1733.8 817.3 L1734.9 818.2 L1736.0 819.1 L1736.9 821.2 L1737.6 823.7 L1738.0 826.3 L1738.1 828.8 L1737.9 833.2 L1743.3 837.3 L1743.2 839.6 L1743.4 841.8 L1743.6 843.8 L1743.9 845.4 L1744.3 846.6 L1744.8 847.2 L1744.3 847.2 L1743.9 847.7 L1743.4 848.7 L1743.1 850.3 L1742.9 852.2 L1742.7 854.3 L1737.5 850.1 L1737.3 854.6 L1737.1 856.8 L1736.6 858.7 L1735.9 860.0 L1734.9 860.8 L1733.8 860.8 L1732.7 860.2 L1730.3 858.3 L1729.2 857.0 L1728.2 855.3 L1727.4 853.1 L1726.7 850.6 L1726.3 848.1 L1726.2 845.6 L1726.3 841.2 L1721.4 837.2 L1721.3 835.0 L1721.2 832.9 L1721.0 831.0 L1720.7 829.4 L1720.3 828.2Z M1763.2 861.7 L1763.7 861.8 L1764.2 861.3 L1764.6 860.2 L1765.0 858.7 L1765.3 856.7 L1765.5 854.5 L1771.3 859.0 L1771.5 854.5 L1771.8 852.1 L1772.4 850.2 L1773.3 848.8 L1774.5 848.1 L1775.7 849.0 L1777.0 850.0 L1779.9 852.2 L1781.2 853.2 L1782.5 854.2 L1783.5 856.6 L1784.2 859.2 L1784.6 861.9 L1784.7 864.6 L1784.4 869.2 L1790.6 874.0 L1790.6 876.4 L1790.7 878.7 L1790.9 880.8 L1791.3 882.5 L1791.7 883.8 L1792.2 884.6 L1791.7 884.4 L1791.1 884.9 L1790.6 886.0 L1790.2 887.6 L1789.8 889.5 L1789.6 891.8 L1783.5 886.9 L1783.2 891.5 L1782.9 893.9 L1782.3 895.8 L1781.3 897.1 L1780.2 897.8 L1778.9 897.7 L1777.6 897.0 L1774.8 894.7 L1773.5 893.3 L1772.4 891.4 L1771.4 889.0 L1770.7 886.4 L1770.3 883.7 L1770.3 881.1 L1770.5 876.5 L1764.7 871.9 L1764.7 869.6 L1764.6 867.3 L1764.4 865.3 L1764.1 863.6 L1763.6 862.4Z M1813.8 901.5 L1814.4 901.7 L1815.0 901.2 L1815.6 900.1 L1816.1 898.5 L1816.5 896.5 L1816.7 894.2 L1823.6 899.5 L1823.9 894.7 L1824.3 892.3 L1825.1 890.3 L1826.2 889.0 L1827.6 888.3 L1829.1 889.4 L1830.7 890.6 L1834.0 893.1 L1835.6 894.3 L1837.1 895.5 L1838.3 898.1 L1839.1 901.0 L1839.5 903.9 L1839.5 906.7 L1839.1 911.6 L1846.5 917.3 L1846.3 919.7 L1846.4 922.2 L1846.6 924.4 L1847.0 926.3 L1847.5 927.7 L1848.2 928.6 L1847.5 928.4 L1846.8 928.8 L1846.2 929.9 L1845.6 931.5 L1845.2 933.6 L1844.9 935.9 L1837.6 930.1 L1837.2 935.0 L1836.7 937.4 L1835.9 939.4 L1834.8 940.7 L1833.4 941.3 L1831.9 941.1 L1830.3 940.2 L1827.0 937.5 L1825.5 935.9 L1824.2 933.7 L1823.1 931.1 L1822.3 928.3 L1821.9 925.4 L1821.9 922.6 L1822.2 917.8 L1815.4 912.4 L1815.5 910.0 L1815.4 907.6 L1815.2 905.4 L1814.8 903.6 L1814.4 902.3Z" fill="#000" stroke="#000" stroke-width="1.6" stroke-linejoin="round"/></mask>
<path d="M1180.0 829.0 L1693.0 772.0 L1897.7 923.5 L1898.5 930.0 L1888.0 933.0 L1882.0 942.0 L1879.0 954.0 L1880.0 966.0 L1884.0 978.0 L1885.0 990.0 L1876.0 998.0 L1873.0 1008.0 L1862.0 1013.0 L1855.0 1010.0 L1233.0 1120.0 L1230.0 1130.0 L1221.0 1136.0 L1211.0 1133.0 L1205.0 1124.0 L1203.0 1122.0 L1190.0 1040.0 L1183.0 900.0Z" fill="#050505" mask="url(#hmask)"/>
<circle cx="1221" cy="1124" r="12" fill="#050505"/>
<circle cx="1864" cy="1002" r="10.5" fill="#050505"/>
<clipPath id="mclip"><path d="M1188 886 L1693 830 L1700 836 L1858 950 L1500 990 L1205 1035Z"/></clipPath>
<g clip-path="url(#mclip)" fill="none" stroke-linejoin="round" stroke-linecap="round">
<g filter="url(#blur1)"><ellipse cx="1520" cy="915" rx="60" ry="38" fill="#5a4c3a" opacity="0.35"/><ellipse cx="1640" cy="875" rx="50" ry="16" fill="#5a4c3a" opacity="0.25"/></g>
<path d="M1495.5 939.3 L1497.7 935.8 L1501.6 934.0 L1503.5 930.1 L1507.2 928.2 L1509.3 924.6 L1512.3 921.8 L1515.9 919.8 L1519.7 917.9 L1521.1 913.5 L1524.2 910.9 L1528.0 909.0 L1531.6 906.9 L1533.5 903.1" stroke="#9c8a70" stroke-width="1.2" opacity="0.66"/>
<path d="M1532.9 876.1 L1534.6 880.0 L1535.4 884.4 L1539.3 886.9 L1540.4 891.1 L1542.5 894.8 L1545.4 898.0 L1547.1 901.8 L1550.6 904.6 L1552.8 908.2 L1554.6 912.0 L1555.5 916.4 L1558.4 919.5 L1560.9 922.9 L1562.3 926.9 L1564.8 930.4" stroke="#9c8a70" stroke-width="1.1" opacity="0.62"/>
<path d="M1539.5 856.4 L1543.5 856.4 L1547.7 855.6 L1551.4 858.3 L1555.8 856.1 L1559.6 857.6 L1563.5 859.2 L1567.7 857.8 L1571.5 859.5" stroke="#9c8a70" stroke-width="1.1" opacity="0.52"/>
<path d="M1491.1 836.0 L1489.4 839.7 L1487.5 843.3 L1485.8 847.0 L1482.8 850.0 L1480.6 853.4 L1479.9 857.6 L1477.4 860.9 L1477.1 865.4 L1473.4 867.9 L1471.6 871.6 L1468.6 874.6 L1468.1 878.9" stroke="#9c8a70" stroke-width="1.4" opacity="0.61"/>
<path d="M1461.5 925.7 L1462.7 929.8 L1461.5 934.4 L1464.5 938.0 L1465.1 942.2 L1465.3 946.5" stroke="#9c8a70" stroke-width="1.0" opacity="0.85"/>
<path d="M1568.3 907.7 L1572.8 909.0 L1575.8 912.1 L1579.3 914.7 L1581.5 918.8 L1584.7 921.7 L1589.7 922.5 L1593.0 925.3 L1596.2 928.2 L1599.5 930.9 L1602.3 934.3 L1605.6 937.1" stroke="#9c8a70" stroke-width="1.2" opacity="0.61"/>
<path d="M1573.3 904.2 L1577.6 904.1 L1581.8 905.0 L1586.1 905.7 L1590.5 904.2 L1594.5 907.4 L1598.8 907.5 L1603.0 908.3 L1607.2 908.6 L1611.6 908.1" stroke="#9c8a70" stroke-width="1.0" opacity="0.66"/>
<path d="M1589.0 924.9 L1592.4 928.0 L1596.7 930.0 L1600.5 932.5 L1604.0 935.6 L1607.1 939.2" stroke="#9c8a70" stroke-width="0.8" opacity="0.65"/>
<path d="M1632.7 897.4 L1635.7 900.4 L1639.3 902.8 L1640.7 907.4 L1643.5 910.7 L1647.7 912.4 L1650.7 915.4 L1654.6 917.4 L1657.6 920.3 L1660.1 923.8 L1663.3 926.6 L1665.1 930.8 L1668.9 933.0" stroke="#9c8a70" stroke-width="0.8" opacity="0.51"/>
<path d="M1598.7 879.5 L1597.7 884.2 L1598.5 888.7 L1599.5 893.2 L1601.3 897.6 L1601.4 902.1 L1601.4 906.7" stroke="#9c8a70" stroke-width="0.8" opacity="0.81"/>
<path d="M1412.6 903.8 L1416.0 901.5 L1419.5 899.4 L1423.1 897.5 L1426.5 895.3 L1429.3 892.0 L1433.3 890.8 L1436.6 888.4 L1439.7 885.6 L1443.9 885.0" stroke="#9c8a70" stroke-width="0.7" opacity="0.61"/>
<path d="M1491.1 958.8 L1495.3 958.3 L1499.3 956.0 L1503.5 955.2 L1507.7 954.8 L1511.9 954.3 L1516.2 953.9 L1520.5 954.9 L1524.8 955.3 L1529.0 954.7 L1533.1 953.2 L1537.4 953.3 L1541.7 953.4 L1545.7 950.7 L1550.1 952.2 L1554.4 952.6 L1558.5 950.8" stroke="#9c8a70" stroke-width="1.3" opacity="0.80"/>
<path d="M1464.8 918.0 L1468.3 915.0 L1472.4 913.8 L1476.9 914.2 L1480.8 912.2 L1484.3 909.3 L1488.3 907.9 L1492.4 906.7 L1497.2 907.7 L1501.1 906.2 L1504.6 902.9 L1509.3 903.7 L1513.5 902.9 L1517.2 900.7 L1521.1 898.9" stroke="#9c8a70" stroke-width="1.0" opacity="0.72"/>
<path d="M1503.5 901.2 L1507.8 900.7 L1511.3 903.1 L1515.3 904.1 L1519.7 903.3 L1523.5 904.5 L1527.4 905.7 L1531.3 906.6 L1534.9 908.7 L1539.1 908.8 L1542.8 910.3 L1546.9 910.5 L1550.2 914.0 L1554.5 913.4 L1558.3 914.7 L1562.1 916.2 L1565.7 918.3 L1569.9 918.1" stroke="#9c8a70" stroke-width="1.0" opacity="0.87"/>
<path d="M1440.4 921.5 L1442.6 918.0 L1447.3 916.4 L1448.5 911.9 L1451.9 909.3 L1455.3 906.7 L1457.6 903.1 L1459.7 899.4 L1462.9 896.6 L1465.7 893.5 L1469.0 890.8 L1471.0 887.0" stroke="#9c8a70" stroke-width="0.8" opacity="0.72"/>
<path d="M1501.1 931.2 L1505.3 931.7 L1509.5 930.3 L1513.7 930.9 L1517.9 930.6 L1522.1 930.7 L1526.3 931.3 L1530.5 930.6 L1534.6 930.9 L1538.8 930.8 L1543.0 932.4 L1547.2 931.6 L1551.4 932.3 L1555.6 932.5 L1559.8 931.2" stroke="#9c8a70" stroke-width="0.9" opacity="0.72"/>
<path d="M1626.4 891.0 L1630.2 888.6 L1633.3 885.4 L1638.0 884.0 L1641.7 881.5 L1645.4 879.0 L1648.1 875.2" stroke="#9c8a70" stroke-width="0.8" opacity="0.79"/>
<path d="M1531.0 864.0 L1529.9 868.2 L1527.2 871.2 L1523.4 873.3 L1521.3 876.8 L1520.5 881.2 L1517.3 883.8 L1514.6 886.8 L1512.6 890.3 L1510.5 893.7 L1507.7 896.6 L1504.2 899.0 L1503.4 903.5 L1499.6 905.6 L1497.4 908.9 L1496.0 912.9 L1492.3 915.1" stroke="#9c8a70" stroke-width="1.0" opacity="0.75"/>
<path d="M1478.8 885.8 L1482.0 888.3 L1485.9 889.7 L1488.3 893.8 L1492.6 894.4 L1496.4 896.0 L1499.5 898.8 L1502.2 902.2 L1505.9 904.0 L1510.3 904.4 L1514.1 906.2 L1516.4 910.3 L1520.5 911.4 L1523.8 913.8 L1528.3 914.1 L1531.9 916.0 L1534.4 919.8 L1538.3 921.3" stroke="#9c8a70" stroke-width="1.0" opacity="0.53"/>
<path d="M1585.9 907.3 L1590.5 906.4 L1592.6 902.7 L1595.3 899.8 L1598.7 897.5 L1602.4 895.7 L1603.9 891.4 L1606.5 888.3 L1610.3 886.6 L1612.6 883.1 L1615.3 880.1 L1618.3 877.5 L1621.0 874.5 L1624.3 872.1 L1627.5 869.7 L1630.8 867.4" stroke="#9c8a70" stroke-width="0.9" opacity="0.80"/>
<path d="M1506.9 928.1 L1509.4 931.5 L1509.1 936.2 L1511.4 939.7 L1514.2 942.9 L1515.2 947.1 L1515.6 951.4 L1518.7 954.5" stroke="#9c8a70" stroke-width="0.8" opacity="0.83"/>
<path d="M1436.0 927.0 L1440.2 927.1 L1443.8 924.3 L1448.2 925.0 L1452.1 923.9 L1456.1 922.9 L1460.0 921.3 L1464.0 920.4 L1467.9 918.7 L1472.0 918.1 L1476.0 917.1 L1480.4 918.5 L1484.2 916.2 L1488.1 915.1 L1492.1 914.0 L1496.4 914.6" stroke="#9c8a70" stroke-width="1.4" opacity="0.85"/>
<path d="M1491.3 887.0 L1495.3 886.4 L1498.9 884.4 L1503.4 885.0 L1507.2 883.5 L1510.4 880.8 L1513.8 878.5 L1518.4 879.1 L1521.6 876.3" stroke="#9c8a70" stroke-width="0.9" opacity="0.64"/>
<path d="M1585.2 883.6 L1587.5 887.7 L1587.4 892.1 L1588.7 896.4 L1588.4 900.8 L1590.3 905.0 L1591.1 909.3 L1590.9 913.7 L1591.8 918.0 L1591.4 922.5 L1592.4 926.8" stroke="#9c8a70" stroke-width="1.1" opacity="0.80"/>
<path d="M1464.8 833.3 L1468.8 836.3 L1468.6 840.9 L1470.4 844.8 L1473.7 848.1 L1472.9 853.0 L1474.3 857.0 L1476.6 860.7 L1477.8 864.8 L1479.1 868.9 L1482.7 872.1 L1483.1 876.5 L1484.7 880.5 L1485.2 884.8 L1486.9 888.7 L1489.3 892.4" stroke="#9c8a70" stroke-width="1.4" opacity="0.73"/>
<path d="M1585.3 852.4 L1587.3 856.2 L1590.5 859.0 L1591.2 863.8 L1594.5 866.5 L1596.9 870.0 L1599.5 873.3 L1601.9 876.8 L1605.0 879.7 L1608.8 882.1 L1609.3 887.0 L1612.0 890.2 L1615.2 893.1 L1617.8 896.4" stroke="#9c8a70" stroke-width="1.1" opacity="0.76"/>
<path d="M1606.1 917.0 L1610.4 918.1 L1612.7 921.9 L1615.5 924.9 L1619.7 926.1 L1623.2 928.2 L1626.3 930.9 L1629.2 933.8 L1632.8 935.7" stroke="#9c8a70" stroke-width="1.3" opacity="0.75"/>
<path d="M1502.3 900.3 L1506.8 899.1 L1510.2 895.5 L1514.4 893.7 L1518.8 892.3 L1523.4 891.5 L1527.3 889.1" stroke="#9c8a70" stroke-width="1.3" opacity="0.77"/>
<path d="M1505.5 921.6 L1508.6 925.3 L1507.2 930.0 L1508.3 934.2 L1512.1 937.8 L1511.8 942.3 L1511.6 946.8 L1512.2 951.1 L1514.8 954.9 L1516.3 959.0 L1516.6 963.4" stroke="#9c8a70" stroke-width="0.9" opacity="0.88"/>
<path d="M1535.9 944.2 L1540.3 946.6 L1544.8 945.8 L1549.3 947.2 L1553.8 946.8 L1558.4 945.5 L1562.9 946.5" stroke="#9c8a70" stroke-width="1.4" opacity="0.69"/>
<path d="M1530.4 883.6 L1530.8 887.7 L1532.0 891.6 L1531.4 895.9 L1535.0 899.1 L1533.7 903.7 L1534.5 907.7 L1537.8 911.0 L1536.3 915.6 L1538.0 919.3 L1538.5 923.4 L1540.7 927.0" stroke="#9c8a70" stroke-width="0.9" opacity="0.65"/>
<path d="M1333.9 983.6 L1337.7 981.8 L1341.7 981.0 L1346.3 982.2 L1349.8 979.5 L1354.4 980.5 L1357.8 977.3 L1361.8 976.4 L1366.0 976.1 L1369.7 974.1 L1373.9 973.6 L1378.3 974.4 L1382.0 972.0" stroke="#9c8a70" stroke-width="1.4" opacity="0.82"/>
<path d="M1406.4 848.7 L1410.4 851.3 L1414.7 850.7 L1418.8 852.1 L1423.0 852.1 L1427.2 851.3 L1431.5 850.9 L1435.4 854.1 L1439.8 851.9 L1443.9 853.4 L1448.1 853.4 L1452.3 853.6 L1456.3 855.4 L1460.4 856.5 L1464.8 854.6 L1468.9 856.2 L1473.1 856.1" stroke="#9c8a70" stroke-width="0.9" opacity="0.72"/>
<path d="M1489.2 924.0 L1492.3 921.2 L1496.8 921.1 L1500.5 919.3 L1503.1 915.8 L1506.0 912.9 L1509.6 911.0 L1513.5 909.9" stroke="#9c8a70" stroke-width="0.8" opacity="0.64"/>
<path d="M1550.9 916.5 L1555.1 916.0 L1559.2 916.5 L1563.2 917.4 L1567.3 917.4 L1571.4 917.8 L1575.6 917.5 L1579.6 918.7 L1583.6 919.9" stroke="#9c8a70" stroke-width="1.5" opacity="0.55"/>
<path d="M1426.2 879.0 L1428.5 882.6 L1431.0 886.0 L1432.4 890.2 L1435.3 893.3 L1437.9 896.6 L1442.7 898.2 L1445.3 901.5 L1446.3 906.1 L1448.5 909.7 L1452.2 912.2 L1454.5 915.7 L1458.6 917.7 L1460.3 921.8 L1461.6 926.1 L1465.4 928.5" stroke="#9c8a70" stroke-width="1.4" opacity="0.84"/>
<path d="M1564.7 908.7 L1568.6 906.9 L1571.6 903.9 L1574.9 901.2 L1578.6 899.0 L1581.5 895.7 L1585.0 893.4" stroke="#9c8a70" stroke-width="1.1" opacity="0.52"/>
<path d="M1543.0 849.4 L1542.2 853.5 L1540.6 857.5 L1540.0 861.6 L1541.5 865.9 L1541.3 870.0 L1539.5 874.0 L1538.9 878.1 L1539.2 882.2 L1539.3 886.4 L1537.7 890.4 L1539.2 894.7 L1537.9 898.7 L1537.0 902.7 L1535.1 906.7 L1535.7 910.9 L1535.8 915.1" stroke="#9c8a70" stroke-width="1.4" opacity="0.69"/>
<path d="M1542.5 895.9 L1540.2 899.6 L1538.9 903.4 L1538.9 907.5 L1538.6 911.5 L1536.5 915.2 L1534.9 918.9 L1536.4 923.3 L1536.2 927.3 L1534.4 931.1 L1533.4 934.9 L1531.8 938.7 L1532.5 942.9 L1529.9 946.5 L1529.2 950.4 L1529.2 954.5 L1529.4 958.6 L1527.6 962.4" stroke="#9c8a70" stroke-width="1.5" opacity="0.62"/>
<path d="M1551.7 868.7 L1551.8 873.4 L1551.4 878.0 L1550.0 882.2 L1548.1 886.2 L1546.0 890.2 L1543.9 894.2 L1543.9 898.9" stroke="#9c8a70" stroke-width="0.8" opacity="0.66"/>
<path d="M1556.4 981.3 L1559.2 985.2 L1563.0 987.7 L1567.0 989.8 L1570.3 993.0 L1574.1 995.4 L1578.7 996.8" stroke="#9c8a70" stroke-width="1.0" opacity="0.57"/>
<path d="M1611.2 880.7 L1615.4 881.8 L1619.7 882.6 L1624.0 883.3 L1627.8 885.4 L1631.7 887.4" stroke="#9c8a70" stroke-width="1.0" opacity="0.88"/>
<path d="M1626.0 967.8 L1629.9 965.5 L1633.7 963.2 L1638.3 963.4 L1642.4 962.0 L1647.0 962.6 L1650.6 959.2 L1655.1 959.1" stroke="#9c8a70" stroke-width="1.0" opacity="0.86"/>
<path d="M1601.2 882.8 L1599.9 886.6 L1596.1 889.7 L1596.9 894.1 L1594.1 897.5 L1592.5 901.2 L1592.9 905.6 L1591.9 909.5 L1588.6 912.7 L1588.4 916.9 L1588.3 921.1 L1585.6 924.5 L1585.6 928.7 L1584.5 932.6 L1584.1 936.7 L1581.4 940.1" stroke="#9c8a70" stroke-width="1.3" opacity="0.87"/>
<path d="M1425.5 854.0 L1429.3 852.0 L1432.2 848.5 L1435.8 846.1 L1439.8 844.7 L1443.7 842.9" stroke="#9c8a70" stroke-width="1.1" opacity="0.87"/>
<path d="M1550.2 942.3 L1554.1 943.8 L1557.5 946.0 L1560.9 948.3 L1563.5 951.7 L1568.1 952.0 L1571.3 954.6 L1573.8 958.3 L1578.0 959.2 L1581.8 960.9 L1585.2 963.0 L1587.7 966.7 L1591.5 968.3 L1593.8 972.3 L1598.0 973.2" stroke="#9c8a70" stroke-width="1.4" opacity="0.90"/>
<path d="M1515.2 918.2 L1519.4 917.5 L1523.5 918.1 L1527.7 918.7 L1531.8 918.9 L1535.9 919.1 L1540.1 918.3" stroke="#9c8a70" stroke-width="1.4" opacity="0.77"/>
<path d="M1596.0 946.0 L1600.5 944.8 L1604.8 945.5 L1609.1 946.0 L1613.4 946.2 L1617.4 949.1 L1621.9 948.6 L1626.3 948.3 L1630.5 949.4" stroke="#9c8a70" stroke-width="1.0" opacity="0.90"/>
<path d="M1457.8 894.5 L1461.3 896.7 L1464.9 898.9 L1468.8 900.0 L1472.6 901.4 L1477.2 899.8 L1480.9 901.7 L1484.9 902.2 L1488.7 903.5 L1491.9 907.0 L1496.1 906.9 L1499.7 909.1 L1504.1 908.5 L1507.5 911.1 L1511.8 910.9 L1515.6 912.2" stroke="#9c8a70" stroke-width="0.9" opacity="0.81"/>
<path d="M1558.3 875.1 L1558.8 879.3 L1558.4 883.4 L1558.1 887.5 L1556.8 891.6 L1556.4 895.8 L1557.7 900.0 L1558.1 904.2 L1556.9 908.3 L1555.6 912.4 L1557.0 916.6 L1556.4 920.7 L1555.6 924.8" stroke="#9c8a70" stroke-width="0.9" opacity="0.82"/>
<path d="M1497.1 904.3 L1500.8 901.8 L1505.0 901.3 L1509.4 902.2 L1513.3 900.5 L1517.4 899.3 L1521.6 899.2" stroke="#9c8a70" stroke-width="0.9" opacity="0.88"/>
<path d="M1481.9 947.6 L1485.8 945.0 L1489.8 943.9 L1494.2 944.9 L1498.2 942.6 L1502.2 941.4 L1506.8 943.6 L1510.7 941.4 L1515.1 942.0 L1519.1 940.4" stroke="#9c8a70" stroke-width="1.0" opacity="0.85"/>
<path d="M1484.9 910.0 L1489.3 907.7 L1493.2 909.8 L1497.4 909.4 L1501.5 910.2 L1505.7 910.6" stroke="#9c8a70" stroke-width="0.8" opacity="0.61"/>
<path d="M1381.8 897.0 L1386.0 894.5 L1390.2 894.2 L1394.5 896.8 L1398.7 896.8 L1402.9 895.1 L1407.2 895.1" stroke="#9c8a70" stroke-width="0.7" opacity="0.87"/>
<path d="M1440.4 926.2 L1440.3 930.8 L1438.1 934.4 L1435.1 937.8 L1433.4 941.7 L1433.6 946.4 L1431.8 950.2 L1429.6 953.9 L1427.5 957.6 L1426.2 961.7 L1425.2 965.9 L1423.2 969.7 L1420.7 973.2" stroke="#9c8a70" stroke-width="1.3" opacity="0.86"/>
<path d="M1584.2 936.1 L1588.1 934.0 L1590.8 930.9 L1593.7 928.0 L1595.8 924.3 L1598.8 921.4 L1602.0 918.7 L1604.4 915.3 L1607.7 912.8 L1610.0 909.3 L1612.8 906.2 L1614.6 902.3 L1618.8 900.5 L1621.3 897.2 L1624.1 894.1" stroke="#9c8a70" stroke-width="0.9" opacity="0.81"/>
<path d="M1540.5 855.8 L1540.4 860.0 L1542.4 863.8 L1542.2 868.1 L1542.9 872.2 L1545.2 875.9 L1544.3 880.4 L1545.6 884.3" stroke="#9c8a70" stroke-width="0.8" opacity="0.79"/>
<path d="M1531.0 868.6 L1535.6 866.1 L1540.1 868.4 L1544.7 868.9 L1549.2 868.1 L1553.8 867.4" stroke="#9c8a70" stroke-width="1.4" opacity="0.58"/>
<path d="M1617.1 871.8 L1614.4 875.1 L1614.4 880.2 L1611.3 883.2 L1607.9 886.1 L1607.2 890.7 L1602.9 892.9 L1602.3 897.6 L1598.5 900.2 L1598.0 904.9 L1594.7 907.8 L1591.3 910.7 L1590.9 915.4 L1588.4 918.9 L1585.4 922.0 L1583.6 925.9 L1580.8 929.1" stroke="#9c8a70" stroke-width="0.7" opacity="0.57"/>
<path d="M1617.7 945.1 L1617.4 949.8 L1614.1 952.7 L1611.7 956.0 L1610.3 960.1 L1606.7 962.8 L1605.5 966.9 L1603.3 970.4 L1600.3 973.4 L1600.3 978.3 L1595.7 980.4 L1594.6 984.5 L1593.1 988.5 L1590.6 991.9" stroke="#9c8a70" stroke-width="1.3" opacity="0.61"/>
<path d="M1592.2 892.9 L1595.1 896.4 L1599.9 896.4 L1602.5 900.5 L1607.1 900.8 L1610.3 903.9 L1613.5 906.8 L1617.9 907.6 L1621.5 909.7 L1625.5 911.2" stroke="#9c8a70" stroke-width="1.0" opacity="0.50"/>
<path d="M1538.3 913.2 L1542.2 910.2 L1546.4 910.0 L1550.8 910.9 L1554.8 908.3 L1559.0 907.8 L1563.3 908.4 L1567.4 907.1 L1571.7 907.4 L1575.9 906.4 L1580.2 907.0 L1584.4 906.5 L1588.6 905.7" stroke="#9c8a70" stroke-width="0.9" opacity="0.75"/>
<path d="M1479.4 880.0 L1480.5 884.4 L1482.3 888.2 L1485.0 891.4 L1488.5 894.0 L1491.3 897.2 L1494.4 900.0 L1495.3 904.6 L1498.0 907.8 L1501.0 910.8 L1502.7 914.7 L1505.7 917.7 L1506.9 922.0 L1509.9 925.0 L1513.6 927.4 L1514.4 932.1 L1517.9 934.7" stroke="#9c8a70" stroke-width="0.7" opacity="0.71"/>
<path d="M1496.9 907.2 L1494.2 911.2 L1495.1 916.3 L1493.5 920.6 L1490.7 924.5 L1489.6 929.0" stroke="#9c8a70" stroke-width="1.1" opacity="0.76"/>
<path d="M1534.4 872.1 L1536.9 875.7 L1539.3 879.4 L1543.5 882.1 L1543.5 887.3 L1546.0 890.9 L1549.0 894.3 L1550.5 898.6 L1553.4 902.0" stroke="#9c8a70" stroke-width="1.1" opacity="0.59"/>
<path d="M1554.1 923.1 L1558.5 922.3 L1562.5 920.6 L1566.3 917.9 L1570.8 917.5 L1574.9 916.1" stroke="#9c8a70" stroke-width="1.0" opacity="0.82"/>
<path d="M1498.5 880.1 L1498.2 885.0 L1495.1 887.6 L1492.7 890.8 L1489.0 893.0 L1486.0 895.7 L1484.0 899.3 L1482.6 903.3 L1478.7 905.3 L1477.6 909.6 L1475.4 912.9 L1471.2 914.7 L1469.4 918.4 L1467.3 921.8" stroke="#9c8a70" stroke-width="1.3" opacity="0.77"/>
<path d="M1568.0 889.3 L1571.5 891.6 L1575.6 892.6 L1579.8 893.2 L1583.7 894.4 L1587.2 897.0 L1591.6 896.8 L1594.6 900.8 L1599.3 899.9 L1603.3 901.0 L1607.1 902.7 L1610.1 906.6 L1614.6 906.3 L1618.7 907.1 L1622.7 908.2 L1626.0 911.1" stroke="#9c8a70" stroke-width="0.7" opacity="0.78"/>
<path d="M1447.7 887.8 L1451.6 886.0 L1454.5 883.2 L1457.5 880.5 L1458.6 875.7 L1463.3 874.7 L1466.2 871.9 L1469.2 869.1 L1470.2 864.4 L1473.3 861.7 L1476.0 858.7 L1478.7 855.6 L1483.4 854.6 L1486.2 851.7 L1488.4 848.1" stroke="#9c8a70" stroke-width="1.2" opacity="0.83"/>
<path d="M1486.6 893.2 L1489.9 890.7 L1493.3 888.2 L1495.5 884.5 L1499.1 882.3 L1502.3 879.6 L1505.9 877.3" stroke="#9c8a70" stroke-width="1.3" opacity="0.65"/>
<path d="M1446.1 964.9 L1448.7 968.3 L1451.9 970.8 L1454.6 974.1 L1458.7 975.4 L1461.4 978.8 L1465.0 980.8 L1468.9 982.4 L1471.0 986.5 L1475.8 986.9 L1477.7 991.2 L1481.6 992.8" stroke="#9c8a70" stroke-width="0.8" opacity="0.50"/>
<path d="M1538.5 983.6 L1541.8 981.0 L1542.9 976.7 L1546.2 974.1 L1548.4 970.7 L1552.1 968.5 L1553.2 964.2 L1557.5 962.4 L1558.4 957.9 L1560.7 954.6 L1564.5 952.5 L1566.5 948.9 L1568.1 945.0 L1572.0 942.9 L1573.1 938.6 L1577.4 936.9 L1579.8 933.5 L1581.8 930.0" stroke="#9c8a70" stroke-width="1.3" opacity="0.75"/>
<path d="M1501.6 912.8 L1501.7 918.0 L1499.0 921.5 L1496.6 925.2 L1492.6 928.0 L1491.4 932.4 L1489.5 936.4 L1485.9 939.4 L1485.5 944.3 L1482.5 947.7" stroke="#9c8a70" stroke-width="1.1" opacity="0.71"/>
<path d="M1522.6 827.4 L1522.3 832.0 L1524.6 835.4 L1526.1 839.1 L1529.5 842.0 L1530.4 846.0 L1531.2 850.1 L1533.5 853.4 L1536.5 856.4 L1537.2 860.5 L1537.8 864.8 L1541.3 867.5 L1543.2 871.1 L1544.0 875.1" stroke="#9c8a70" stroke-width="0.9" opacity="0.78"/>
<path d="M1541.1 878.3 L1544.8 881.4 L1547.0 885.5 L1550.1 889.0 L1550.8 894.2 L1554.1 897.5 L1557.4 900.8" stroke="#9c8a70" stroke-width="0.8" opacity="0.88"/>
<path d="M1547.7 906.1 L1551.6 907.5 L1554.4 910.8 L1558.8 911.4 L1562.1 913.7 L1565.3 916.3 L1569.4 917.3 L1572.3 920.4 L1575.2 923.6 L1578.9 925.3 L1582.7 926.9 L1586.0 929.3 L1589.8 930.9 L1593.8 932.1 L1596.6 935.4 L1600.4 936.9 L1603.4 939.9 L1607.3 941.3" stroke="#9c8a70" stroke-width="1.4" opacity="0.67"/>
<path d="M1423.3 891.9 L1426.7 889.6 L1430.2 887.5 L1434.1 886.0 L1437.5 883.6 L1441.0 881.5 L1444.4 879.1 L1447.8 876.8 L1451.9 875.7 L1454.7 872.3 L1458.9 871.5" stroke="#9c8a70" stroke-width="1.0" opacity="0.81"/>
<path d="M1494.6 863.7 L1498.5 862.5 L1502.6 862.8 L1506.8 863.0 L1510.5 860.1 L1514.7 861.0 L1518.8 860.9 L1522.6 859.1 L1526.7 858.9" stroke="#9c8a70" stroke-width="1.1" opacity="0.89"/>
<path d="M1590.7 907.8 L1594.8 908.5 L1597.6 911.8 L1601.2 913.7 L1604.4 916.1 L1608.2 917.5 L1611.5 919.8 L1615.2 921.3" stroke="#9c8a70" stroke-width="1.4" opacity="0.71"/>
<path d="M1392.0 942.4 L1396.7 941.9 L1400.0 945.9 L1404.7 945.4 L1409.2 945.9 L1413.1 948.0 L1417.1 949.8 L1421.1 951.5" stroke="#9c8a70" stroke-width="0.7" opacity="0.67"/>
<path d="M1590.6 886.6 L1595.2 887.1 L1599.6 886.7 L1603.5 884.5 L1607.6 882.6 L1612.2 883.2 L1616.2 881.0 L1620.5 880.3" stroke="#8a7a62" stroke-width="1" opacity="0.7"/>
<path d="M1644.2 874.9 L1648.5 875.8 L1652.5 877.4 L1657.0 877.7 L1660.4 881.1 L1665.1 880.7 L1669.0 882.9 L1672.9 884.7 L1677.1 886.0 L1681.5 886.3 L1685.6 887.7" stroke="#8a7a62" stroke-width="1" opacity="0.7"/>
<path d="M1635.1 885.2 L1639.1 888.2 L1644.1 888.1 L1648.5 890.0 L1653.1 891.2 L1657.4 893.4" stroke="#8a7a62" stroke-width="1" opacity="0.7"/>
<path d="M1627.4 875.6 L1631.4 876.4 L1635.2 877.4 L1639.0 878.8 L1643.0 879.6 L1646.9 880.7" stroke="#8a7a62" stroke-width="1" opacity="0.7"/>
<path d="M1607.3 856.2 L1612.3 855.8 L1615.4 859.8 L1619.3 861.8 L1623.5 863.3 L1628.3 863.4 L1631.4 867.1 L1635.9 868.0" stroke="#8a7a62" stroke-width="1" opacity="0.7"/>
<path d="M1646.0 869.4 L1650.2 870.1 L1654.0 871.5 L1657.6 873.4 L1661.2 875.4 L1664.5 877.9" stroke="#8a7a62" stroke-width="1" opacity="0.7"/>
<path d="M1654.4 860.1 L1658.9 859.9 L1661.8 863.6 L1665.9 864.4 L1669.5 866.5 L1673.4 867.8 L1677.4 868.9" stroke="#8a7a62" stroke-width="1" opacity="0.7"/>
<path d="M1694.0 869.2 L1697.8 867.5 L1701.9 866.9 L1705.5 864.8 L1709.8 864.9 L1713.5 862.7 L1717.1 860.6 L1721.0 859.3 L1724.9 857.8 L1729.1 857.6 L1732.6 855.2 L1736.9 855.2" stroke="#8a7a62" stroke-width="1" opacity="0.7"/>
<path d="M1620.8 876.5 L1625.1 877.5 L1629.4 874.9 L1633.8 877.4 L1638.1 876.3 L1642.5 876.6 L1646.8 876.9 L1651.2 877.4 L1655.5 876.3" stroke="#8a7a62" stroke-width="1" opacity="0.7"/>
<path d="M1608.5 894.3 L1612.2 892.6 L1615.1 889.3 L1619.6 889.2 L1623.4 887.7 L1627.4 886.7 L1630.3 883.4 L1634.8 883.5 L1638.0 880.5 L1641.6 878.8 L1645.9 878.2 L1648.5 874.2 L1652.8 873.8" stroke="#8a7a62" stroke-width="1" opacity="0.7"/>
<path d="M1634.9 852.8 L1638.8 854.6 L1642.8 856.3 L1646.6 858.5 L1651.2 858.5 L1655.0 860.6 L1659.0 862.1 L1663.0 863.9" stroke="#8a7a62" stroke-width="1" opacity="0.7"/>
<path d="M1575.8 862.6 L1579.6 864.2 L1583.8 864.9 L1587.4 866.9 L1590.9 869.5 L1595.1 869.9 L1598.8 871.7 L1603.0 872.2" stroke="#8a7a62" stroke-width="1" opacity="0.7"/>
<path d="M1628.5 883.3 L1632.6 884.1 L1636.9 882.2 L1640.9 884.6 L1645.0 885.5 L1649.2 884.8 L1653.4 883.7 L1657.4 885.4" stroke="#8a7a62" stroke-width="1" opacity="0.7"/>
<path d="M1646.8 871.3 L1650.6 873.2 L1654.3 875.3 L1658.1 877.4 L1662.4 878.3 L1666.3 880.1 L1670.3 881.5" stroke="#8a7a62" stroke-width="1" opacity="0.7"/>
<path d="M1586.4 967.5 L1587.1 972.8 L1586.7 978.1 L1588.6 983.4 L1588.7 988.7 L1589.3 994.0 L1587.8 999.4 L1587.8 1004.7 L1588.7 1010.0 L1589.6 1015.2 L1588.8 1020.6 L1589.2 1025.9 L1590.2 1031.2" stroke="#c4cccc" stroke-width="1.1" opacity="0.47"/>
<path d="M1383.9 930.1 L1388.7 927.6 L1393.9 928.4 L1398.9 926.7 L1403.9 926.5 L1409.1 927.7 L1414.2 926.7 L1419.3 927.1 L1424.2 925.5 L1429.3 925.3" stroke="#c4cccc" stroke-width="0.7" opacity="0.52"/>
<path d="M1565.0 1000.3 L1570.2 1001.5 L1575.4 1000.3 L1580.6 1000.0 L1585.8 999.5 L1591.0 999.3 L1596.3 1000.8 L1601.5 999.3 L1606.8 1001.2 L1611.9 998.9 L1617.2 1000.6 L1622.4 998.7 L1627.6 998.3 L1632.8 999.8 L1638.0 998.5 L1643.3 999.5 L1648.5 998.1 L1653.7 998.7" stroke="#c4cccc" stroke-width="0.7" opacity="0.70"/>
<path d="M1641.2 990.2 L1645.5 987.2 L1650.6 985.7 L1654.3 981.8 L1659.7 980.8 L1663.9 977.9 L1667.7 973.9 L1672.2 971.4 L1677.5 970.3 L1682.2 968.2 L1685.9 964.1 L1690.7 962.1 L1695.8 960.6 L1699.6 956.9 L1704.6 955.1" stroke="#c4cccc" stroke-width="1.3" opacity="0.57"/>
<path d="M1232.3 920.6 L1237.6 921.8 L1242.7 920.4 L1247.9 920.7 L1253.1 920.2 L1258.3 919.4 L1263.4 918.9 L1268.7 919.5 L1273.9 919.5 L1279.1 918.7 L1284.2 917.8 L1289.3 916.8 L1294.6 916.9" stroke="#c4cccc" stroke-width="0.7" opacity="0.79"/>
<path d="M1634.4 986.6 L1639.6 986.7 L1644.9 986.7 L1650.0 987.6 L1655.0 989.4 L1660.2 988.8 L1665.3 990.2 L1670.4 990.7 L1675.5 992.0 L1680.7 991.7" stroke="#c4cccc" stroke-width="1.3" opacity="0.48"/>
<path d="M1196.0 907.8 L1201.4 906.3 L1206.4 908.7 L1211.6 909.2 L1216.8 909.9 L1222.1 909.7 L1227.4 909.6 L1232.5 911.5 L1237.7 911.9 L1243.0 912.2 L1248.2 912.3" stroke="#c4cccc" stroke-width="1.3" opacity="0.51"/>
<path d="M1248.5 948.5 L1252.7 945.1 L1257.8 944.2 L1262.7 942.5 L1267.3 940.2 L1271.9 937.8 L1276.7 936.2 L1281.9 935.5 L1286.8 933.8 L1291.3 931.2 L1295.8 928.6 L1301.2 928.4 L1305.9 926.5 L1310.3 923.5 L1315.4 922.5 L1320.1 920.5" stroke="#c4cccc" stroke-width="1.3" opacity="0.75"/>
<path d="M1521.8 936.3 L1523.9 941.2 L1527.8 945.0 L1530.5 949.5 L1534.0 953.5 L1537.0 957.8 L1540.8 961.5 L1544.2 965.6 L1545.5 971.2 L1549.9 974.5 L1553.6 978.3 L1555.7 983.3 L1559.2 987.4" stroke="#c4cccc" stroke-width="1.3" opacity="0.42"/>
<path d="M1567.5 919.2 L1571.7 922.5 L1576.3 925.3 L1580.2 929.0 L1584.6 932.0 L1587.8 936.5 L1592.4 939.4 L1595.5 943.9 L1599.8 947.1 L1603.7 950.7 L1607.5 954.5 L1612.3 957.2" stroke="#c4cccc" stroke-width="0.9" opacity="0.37"/>
<path d="M1321.1 896.1 L1324.9 892.6 L1329.9 891.0 L1334.2 888.3 L1337.5 884.0 L1342.5 882.5 L1346.7 879.7" stroke="#c4cccc" stroke-width="1.0" opacity="0.40"/>
<path d="M1794.5 906.4 L1799.7 906.6 L1804.7 907.6 L1809.9 907.8 L1814.6 910.6 L1819.7 911.5 L1825.1 910.5 L1830.2 911.0 L1835.2 912.3 L1840.2 913.4 L1845.1 915.6 L1850.1 916.5 L1855.4 916.4" stroke="#c4cccc" stroke-width="1.3" opacity="0.37"/>
<path d="M1687.3 969.6 L1684.3 974.1 L1682.3 978.8 L1681.3 983.9 L1680.6 989.1 L1678.4 993.8 L1676.4 998.6 L1676.3 1004.0 L1674.2 1008.7 L1672.8 1013.7 L1671.5 1018.7 L1669.1 1023.3 L1668.3 1028.5 L1665.9 1033.1" stroke="#c4cccc" stroke-width="0.9" opacity="0.41"/>
<path d="M1617.7 872.4 L1622.1 875.5 L1623.8 880.6 L1626.9 884.6 L1629.9 888.8 L1634.4 891.8 L1636.9 896.4 L1640.6 900.0 L1642.0 905.3 L1645.2 909.3 L1648.7 913.1 L1652.1 916.9 L1655.3 920.9 L1657.4 925.7 L1661.1 929.4" stroke="#c4cccc" stroke-width="1.0" opacity="0.63"/>
<path d="M1284.4 900.2 L1289.6 903.3 L1295.5 903.4 L1300.9 905.2 L1306.6 906.1 L1312.0 908.3" stroke="#c4cccc" stroke-width="0.9" opacity="0.73"/>
<path d="M1403.9 892.6 L1409.4 893.5 L1413.9 890.2 L1419.4 891.1 L1424.4 889.4 L1429.2 887.2 L1434.4 886.7 L1439.3 885.1 L1444.4 884.0 L1449.4 882.7 L1454.5 882.0 L1459.6 881.2" stroke="#c4cccc" stroke-width="1.4" opacity="0.80"/>
<path d="M1772.6 883.5 L1772.5 889.1 L1769.8 894.2 L1771.0 900.0 L1768.0 905.0 L1768.0 910.5 L1767.3 916.0 L1766.6 921.4 L1764.3 926.6" stroke="#c4cccc" stroke-width="1.3" opacity="0.59"/>
<path d="M1310.8 930.1 L1315.9 928.5 L1321.3 928.1 L1326.2 926.2 L1330.8 923.3 L1335.6 921.2 L1340.6 919.5 L1346.0 919.0 L1350.9 916.9 L1355.7 914.7 L1360.6 912.8 L1365.9 912.0 L1370.9 910.4 L1376.0 908.9 L1380.8 906.7 L1385.4 904.1 L1390.6 903.0" stroke="#c4cccc" stroke-width="0.7" opacity="0.68"/>
<path d="M1449.8 971.8 L1455.1 973.9 L1460.7 975.2 L1466.5 976.2 L1471.0 980.3 L1476.7 981.4" stroke="#c4cccc" stroke-width="1.0" opacity="0.74"/>
<path d="M1361.7 895.9 L1363.4 900.9 L1366.9 905.1 L1368.0 910.4 L1370.3 915.2 L1372.4 920.0 L1375.4 924.4 L1376.3 929.8 L1378.3 934.7 L1380.4 939.5 L1383.8 943.8 L1385.1 948.9 L1388.1 953.4 L1389.4 958.6 L1393.1 962.7 L1394.4 967.9" stroke="#c4cccc" stroke-width="1.3" opacity="0.78"/>
<path d="M1503.2 942.1 L1506.1 947.0 L1507.4 952.2 L1508.8 957.5 L1509.7 962.8 L1509.6 968.4 L1512.6 973.2 L1513.7 978.5 L1513.5 984.1 L1515.9 989.1 L1517.5 994.3 L1517.6 999.8" stroke="#c4cccc" stroke-width="1.1" opacity="0.61"/>
<path d="M1522.3 967.4 L1527.0 969.8 L1531.4 972.9 L1536.1 975.2 L1541.1 977.0 L1546.1 978.9 L1550.4 982.0" stroke="#c4cccc" stroke-width="1.0" opacity="0.41"/>
<path d="M1565.0 989.8 L1570.6 991.8 L1576.3 992.6 L1582.1 991.8 L1587.9 992.4 L1593.5 993.9 L1599.3 993.6" stroke="#c4cccc" stroke-width="1.1" opacity="0.53"/>
<path d="M1783.3 978.6 L1788.6 978.3 L1793.5 976.3 L1798.5 974.9 L1803.4 973.1 L1808.4 971.6 L1812.8 968.1 L1818.1 967.6 L1823.4 967.0 L1828.1 964.4" stroke="#c4cccc" stroke-width="1.4" opacity="0.46"/>
<path d="M1459.0 958.5 L1460.1 963.8 L1462.5 968.8 L1463.4 974.2 L1462.8 979.9 L1464.5 985.0 L1465.3 990.4 L1467.3 995.5 L1468.1 1000.8 L1470.1 1005.9" stroke="#c4cccc" stroke-width="1.3" opacity="0.75"/>
<path d="M1216.4 959.8 L1215.8 965.2 L1216.8 970.4 L1218.0 975.6 L1217.6 980.9 L1218.1 986.2 L1217.2 991.5 L1219.1 996.7 L1218.9 1002.0" stroke="#c4cccc" stroke-width="0.9" opacity="0.64"/>
<path d="M1270.3 953.2 L1271.4 958.2 L1273.6 962.9 L1275.0 967.9 L1276.3 972.8 L1277.2 977.9 L1278.2 982.9 L1279.8 987.8 L1281.1 992.7 L1282.8 997.6 L1283.0 1002.8 L1283.6 1008.0 L1285.5 1012.8 L1286.8 1017.7 L1287.9 1022.8 L1290.3 1027.4 L1290.4 1032.7 L1292.2 1037.5" stroke="#c4cccc" stroke-width="1.0" opacity="0.60"/>
<path d="M1578.0 935.7 L1581.0 939.7 L1583.3 944.2 L1587.2 947.6 L1589.3 952.3 L1591.0 957.1 L1595.0 960.5 L1597.1 965.1 L1600.0 969.2 L1602.8 973.4" stroke="#c4cccc" stroke-width="0.9" opacity="0.79"/>
<path d="M1379.6 978.0 L1383.5 974.7 L1388.3 972.9 L1392.8 970.5 L1397.5 968.6 L1401.1 964.8 L1405.6 962.5 L1410.3 960.6" stroke="#c4cccc" stroke-width="1.4" opacity="0.68"/>
<path d="M1291.4 918.0 L1296.6 919.0 L1302.0 919.4 L1307.1 921.1 L1312.3 922.2 L1317.5 923.4 L1322.8 923.8 L1327.9 925.6 L1333.1 926.6 L1338.4 927.2" stroke="#c4cccc" stroke-width="1.3" opacity="0.41"/>
<path d="M1739.2 871.7 L1744.6 871.3 L1749.9 871.5 L1755.1 872.9 L1760.4 873.7 L1765.8 873.6 L1771.2 873.6 L1776.5 874.3 L1781.8 874.9 L1787.0 876.1 L1792.4 875.6 L1797.7 876.4 L1803.0 877.3 L1808.4 877.5 L1813.6 878.3" stroke="#c4cccc" stroke-width="0.9" opacity="0.70"/>
<path d="M1725.7 939.1 L1731.0 938.1 L1736.1 936.1 L1740.6 933.0 L1746.4 932.9 L1750.8 929.6 L1756.3 928.7 L1761.3 926.7 L1766.4 925.0 L1770.8 921.3 L1776.0 920.0" stroke="#c4cccc" stroke-width="1.0" opacity="0.76"/>
<path d="M1201.7 877.3 L1206.8 876.7 L1212.0 877.8 L1217.1 876.6 L1222.3 876.6 L1227.4 877.0 L1232.5 876.3 L1237.7 876.2 L1242.8 876.7 L1248.0 876.1 L1253.1 877.6 L1258.3 876.9 L1263.4 876.4" stroke="#c4cccc" stroke-width="1.1" opacity="0.39"/>
<path d="M1428.9 927.2 L1434.1 926.5 L1439.2 926.9 L1444.3 927.8 L1449.3 929.1 L1454.6 928.0 L1459.6 928.9 L1464.7 930.1 L1469.9 929.0 L1475.0 929.8 L1479.9 931.8 L1485.1 931.9 L1490.3 931.6" stroke="#c4cccc" stroke-width="1.1" opacity="0.40"/>
<path d="M1754.2 966.4 L1758.9 968.8 L1763.0 972.0 L1767.1 975.3 L1771.4 978.2 L1776.2 980.5 L1780.6 983.3 L1784.3 987.1 L1788.7 990.0 L1793.4 992.4 L1796.9 996.6 L1801.7 998.7 L1806.8 1000.4 L1810.7 1004.1 L1814.5 1007.7 L1819.2 1010.1" stroke="#c4cccc" stroke-width="0.9" opacity="0.66"/>
<path d="M1197.5 911.9 L1202.7 913.2 L1208.0 913.8 L1213.4 913.7 L1218.6 915.2 L1223.9 915.4 L1229.0 917.1 L1234.4 916.6 L1239.8 916.8 L1245.1 916.7 L1250.4 917.3 L1255.5 919.3 L1261.0 918.3 L1266.3 918.8 L1271.6 919.5 L1276.8 920.9" stroke="#c4cccc" stroke-width="1.1" opacity="0.72"/>
<path d="M1577.9 982.6 L1583.3 980.1 L1587.6 976.2 L1592.2 972.6 L1597.2 969.6 L1602.3 966.9" stroke="#c4cccc" stroke-width="0.8" opacity="0.76"/>
<path d="M1558.1 919.2 L1560.9 923.9 L1562.2 929.2 L1565.5 933.7 L1567.3 938.9 L1570.2 943.5 L1572.8 948.3 L1573.0 954.1 L1575.3 959.0 L1578.7 963.5 L1580.4 968.6" stroke="#c4cccc" stroke-width="1.3" opacity="0.72"/>
<path d="M1384.8 953.7 L1389.9 954.1 L1395.1 954.8 L1400.2 953.6 L1405.4 953.8 L1410.5 955.1 L1415.6 954.2 L1420.8 954.9 L1425.9 953.5 L1431.1 953.3 L1436.2 953.7 L1441.3 953.3 L1446.5 955.2 L1451.6 953.5 L1456.8 954.1 L1461.9 953.0 L1467.1 954.0 L1472.2 953.9" stroke="#c4cccc" stroke-width="1.0" opacity="0.53"/>
<path d="M1236.6 886.9 L1238.7 891.8 L1241.0 896.4 L1243.7 900.9 L1244.7 906.3 L1247.6 910.7 L1250.3 915.2 L1251.4 920.5 L1255.0 924.6 L1256.9 929.5 L1258.0 934.9 L1261.8 938.8 L1263.4 943.9 L1264.8 949.0 L1267.1 953.7 L1270.1 958.1" stroke="#c4cccc" stroke-width="0.8" opacity="0.51"/>
<path d="M1646.5 922.8 L1651.1 920.4 L1656.1 919.1 L1660.7 916.6 L1666.0 916.2 L1670.5 913.4 L1675.8 913.1 L1680.4 910.6 L1685.0 908.4 L1689.7 906.3 L1694.9 905.4 L1699.4 902.7 L1704.7 902.5 L1708.9 899.0 L1714.1 898.1 L1718.9 896.4 L1723.5 894.0 L1728.5 892.8" stroke="#c4cccc" stroke-width="1.2" opacity="0.52"/>
<path d="M1606.7 949.2 L1607.1 954.4 L1610.3 958.5 L1611.5 963.5 L1614.7 967.6 L1615.7 972.6 L1618.1 977.1 L1619.7 981.8 L1622.2 986.2 L1623.7 991.1" stroke="#c4cccc" stroke-width="0.7" opacity="0.49"/>
<path d="M1336.8 888.6 L1341.6 887.0 L1346.6 885.9 L1351.6 884.5 L1356.0 881.5 L1361.1 880.5 L1365.9 878.6 L1371.2 878.8 L1376.1 877.5 L1380.9 875.4 L1385.9 874.3 L1391.0 873.5 L1395.9 872.3 L1400.6 869.9 L1405.7 869.2" stroke="#c4cccc" stroke-width="1.3" opacity="0.51"/>
<path d="M1587.8 895.9 L1593.3 897.0 L1598.1 899.6 L1602.7 902.4 L1607.4 905.1 L1612.1 907.9 L1616.6 910.9" stroke="#c4cccc" stroke-width="1.0" opacity="0.37"/>
<path d="M1389.1 959.8 L1394.4 960.9 L1399.0 963.4 L1403.6 966.0 L1408.7 967.3 L1413.9 968.6 L1417.9 972.6 L1423.0 973.9" stroke="#c4cccc" stroke-width="1.2" opacity="0.48"/>
<path d="M1222.5 988.9 L1225.3 993.8 L1230.1 996.5 L1232.9 1001.4 L1237.1 1004.8 L1242.1 1007.3 L1245.0 1012.1 L1249.4 1015.2 L1252.7 1019.5 L1256.5 1023.4 L1261.3 1026.1 L1265.5 1029.4 L1268.7 1033.9" stroke="#c4cccc" stroke-width="1.4" opacity="0.54"/>
<path d="M1776.4 966.7 L1781.6 967.9 L1785.8 971.3 L1790.9 972.7 L1795.6 974.9 L1800.0 977.8 L1805.6 978.1 L1809.8 981.5 L1815.3 981.9 L1819.5 985.4 L1824.2 987.6 L1829.5 988.4 L1834.1 991.1 L1838.5 994.0 L1843.7 995.0" stroke="#c4cccc" stroke-width="1.1" opacity="0.59"/>
<path d="M1351.5 878.1 L1353.8 883.0 L1354.5 888.5 L1356.6 893.4 L1359.5 898.0 L1361.5 903.0 L1362.9 908.2 L1365.0 913.2 L1365.9 918.6 L1368.8 923.2" stroke="#c4cccc" stroke-width="0.9" opacity="0.48"/>
<path d="M1336.8 873.9 L1338.8 879.2 L1337.1 884.3 L1337.5 889.5 L1335.7 894.6 L1336.2 899.8 L1335.2 904.8 L1335.6 910.3 L1332.6 914.9 L1331.4 919.9 L1330.4 925.0 L1328.0 929.8 L1326.4 934.7 L1327.2 940.3 L1325.5 945.2 L1324.1 950.1 L1323.5 955.2 L1322.8 960.3 L1321.0 965.2 L1320.1 970.2 L1317.4 974.9 L1317.6 980.3 L1318.1 985.7 L1316.8 990.9 L1315.8 996.2 L1315.6 1001.5 L1315.6 1006.8 L1314.0 1012.0" stroke="#d9dede" stroke-width="3.2" opacity="0.92"/>
<path d="M1675.2 864.1 L1674.8 869.2 L1671.5 873.8 L1671.6 878.9 L1672.9 884.1 L1670.5 888.9 L1669.2 893.8 L1669.8 899.0 L1672.3 904.0 L1672.4 909.4 L1673.8 914.6 L1675.6 919.6 L1675.9 925.0 L1678.5 929.9 L1677.3 935.7 L1679.2 940.7 L1680.5 945.9 L1680.9 951.5 L1683.8 956.1 L1687.1 960.5 L1689.3 965.4 L1691.8 970.1 L1694.3 974.9 L1694.6 980.7 L1696.7 985.6 L1700.3 989.9 L1702.0 995.0" stroke="#d9dede" stroke-width="2.6" opacity="0.92"/>
<path d="M1581.5 962.2 L1586.6 960.7 L1591.3 958.6 L1595.9 956.1 L1599.1 951.5 L1604.4 950.4 L1608.9 947.8 L1613.2 945.0 L1616.9 941.2 L1621.1 938.2 L1626.5 937.2 L1630.1 933.2 L1634.6 930.7 L1639.3 928.5 L1643.4 925.3 L1648.2 924.0 L1653.0 921.1 L1658.1 919.5 L1663.6 919.9 L1668.9 919.0 L1674.2 918.4 L1679.3 917.0 L1684.7 916.5 L1689.9 915.5 L1694.8 913.1 L1700.0 912.0 L1705.2 910.2 L1710.6 909.9 L1716.0 910.0 L1721.2 907.8 L1726.7 908.8 L1731.9 906.5 L1737.3 906.6 L1742.9 907.4 L1747.8 904.0 L1753.1 903.1 L1758.6 903.6 L1764.0 903.0" stroke="#d9dede" stroke-width="2.0" opacity="0.92"/>
<path d="M1512.1 906.2 L1517.3 908.1 L1522.8 906.8 L1527.9 909.5 L1533.2 910.1 L1538.6 910.5 L1544.0 910.1 L1549.4 910.3 L1554.6 911.9 L1560.0 912.0 L1565.0 911.2 L1570.0 910.4 L1575.0 910.1 L1580.1 910.1 L1585.1 909.9 L1590.1 909.5 L1594.9 907.1 L1599.9 906.8 L1605.0 906.6 L1610.0 906.3 L1615.0 905.2 L1620.0 904.2 L1625.0 904.0 L1630.0 904.7 L1635.0 905.1 L1640.0 906.5 L1645.0 906.4 L1650.0 906.4 L1655.0 906.7 L1660.0 906.8 L1665.0 906.0 L1670.0 906.5 L1675.0 904.6 L1680.0 906.3 L1685.0 906.2 L1690.0 905.5 L1695.0 905.8 L1700.1 906.4 L1705.0 904.8 L1710.0 904.8 L1715.0 903.5 L1720.0 903.2 L1725.1 904.2 L1729.9 901.6 L1734.9 901.6 L1740.0 902.0" stroke="#d9dede" stroke-width="1.4" opacity="0.92"/>
<path d="M1466.1 976.5 L1471.4 974.9 L1476.6 972.9 L1482.3 973.4 L1487.5 971.6 L1493.0 971.2 L1498.4 969.8 L1503.8 969.1 L1509.2 968.2 L1514.5 966.7 L1519.8 964.9 L1524.9 964.3 L1530.2 965.5 L1535.0 963.8 L1539.8 961.8 L1545.2 963.1 L1549.9 960.6 L1554.8 959.4 L1560.0 959.8 L1564.9 958.2 L1570.0 958.1 L1575.0 957.5 L1579.9 955.8 L1585.0 956.0 L1590.0 955.0" stroke="#d9dede" stroke-width="1.8" opacity="0.92"/>
<path d="M1203.6 929.9 L1209.2 929.2 L1214.4 927.5 L1219.0 924.2 L1224.5 923.3 L1229.3 920.5 L1234.8 919.7 L1240.4 919.0 L1245.1 916.1 L1250.2 914.6 L1255.3 912.7 L1259.6 908.9 L1265.5 909.4 L1270.2 906.6 L1274.6 902.9 L1280.2 903.0 L1284.9 900.7 L1289.8 899.0 L1295.3 900.4 L1300.0 898.2 L1305.2 897.8 L1309.8 894.9 L1315.2 895.8 L1319.7 892.7 L1324.8 892.2 L1329.9 891.6 L1334.7 889.4 L1340.1 889.9 L1344.8 887.6 L1349.9 886.6 L1355.1 886.6 L1359.9 884.6 L1365.3 884.7 L1370.1 882.8 L1375.3 882.3 L1380.0 880.0" stroke="#d9dede" stroke-width="1.0" opacity="0.92"/>
<path d="M1391.8 866.0 L1391.4 871.7 L1392.2 877.1 L1395.0 882.4 L1393.9 888.1 L1395.8 893.4 L1395.3 899.4 L1398.2 903.9 L1400.5 908.8 L1405.0 912.4 L1407.0 917.5 L1408.7 922.7 L1410.8 927.7 L1414.1 932.0 L1418.5 935.7 L1419.7 941.2 L1423.7 945.1 L1425.2 950.4 L1427.1 955.2 L1430.5 959.7 L1429.4 965.3 L1431.5 970.1 L1434.0 974.8 L1435.6 979.8 L1436.0 985.0" stroke="#d9dede" stroke-width="1.3" opacity="0.92"/>
<path d="M1229.9 989.9 L1234.7 987.3 L1238.2 983.2 L1241.2 978.6 L1245.1 974.9 L1249.2 971.6 L1254.6 969.7 L1257.4 964.8 L1262.1 962.1 L1265.6 958.0 L1270.3 955.5 L1274.6 952.2 L1279.1 949.1 L1284.9 948.5 L1289.3 945.1 L1294.3 943.0 L1299.2 940.8 L1304.2 938.7 L1307.7 933.7 L1313.0 932.1 L1318.0 930.0" stroke="#d9dede" stroke-width="0.8" opacity="0.92"/>
<path d="M1201.0 959.7 L1201.5 965.0 L1201.9 970.3 L1203.6 975.3 L1207.3 979.6 L1208.4 984.7 L1208.1 990.3 L1210.0 995.2 L1212.3 1000.0 L1212.7 1005.0 L1214.3 1009.9 L1213.0 1015.1 L1215.0 1020.0 L1214.2 1025.1 L1216.0 1030.0" stroke="#d9dede" stroke-width="0.8" opacity="0.92"/>
<path d="M1699.9 910.3 L1705.6 911.4 L1710.2 914.5 L1715.4 916.7 L1719.5 921.1 L1724.9 922.7 L1730.6 923.8 L1735.4 926.6 L1740.2 929.6 L1745.0 931.9 L1749.9 934.2 L1755.1 935.7 L1760.2 937.6 L1765.6 938.6 L1769.9 942.2 L1775.2 943.5 L1780.5 944.7 L1785.0 947.9 L1790.0 950.0" stroke="#d9dede" stroke-width="1.2" opacity="0.92"/>
<path d="M1450.4 1001.4 L1454.6 997.2 L1459.7 996.0 L1465.1 996.0 L1469.8 993.3 L1474.8 991.8 L1480.0 991.0 L1484.8 988.8 L1490.1 988.2 L1495.0 986.6 L1500.1 986.4 L1505.1 986.1 L1509.9 982.8 L1515.0 983.9 L1520.1 984.1 L1525.1 984.0 L1530.1 983.3 L1535.0 982.5 L1540.0 982.1 L1545.0 980.8 L1549.9 980.2 L1555.1 981.3 L1560.0 980.0" stroke="#d9dede" stroke-width="1.0" opacity="0.92"/>
<path d="M1359.3 900.7 L1362.8 904.5 L1366.9 907.6 L1371.3 910.5 L1374.0 915.1 L1377.7 918.7 L1381.8 921.8 L1385.2 925.7 L1389.4 928.8 L1392.6 932.8 L1396.5 936.2 L1401.1 939.4 L1403.1 944.3 L1405.9 948.8 L1407.0 954.3 L1411.0 958.2 L1414.0 962.5 L1417.0 966.9 L1419.7 971.4 L1422.2 976.1 L1425.4 980.4 L1428.5 984.7 L1430.0 990.0" stroke="#d9dede" stroke-width="0.8" opacity="0.92"/>
<path d="M1239.1 890.6 L1243.0 894.2 L1245.8 898.5 L1248.4 903.0 L1251.9 906.8 L1255.1 910.9 L1258.2 915.0 L1260.5 920.1 L1259.5 925.1 L1257.4 929.9 L1256.9 935.0 L1254.8 939.8 L1255.4 945.1 L1252.8 949.8 L1252.8 955.0 L1253.2 960.2 L1251.9 965.2 L1249.8 970.1 L1251.3 975.6 L1255.4 979.8 L1256.8 985.3 L1260.2 989.9 L1261.6 995.5 L1266.1 999.5 L1267.5 1005.0 L1270.0 1010.0" stroke="#d9dede" stroke-width="0.7" opacity="0.92"/>
<path d="M1599.2 840.8 L1604.1 843.2 L1607.8 846.8 L1611.9 849.9 L1615.3 853.8 L1618.7 857.7 L1621.4 862.3 L1626.1 864.9 L1629.3 868.9 L1633.4 872.1 L1636.1 876.6 L1639.0 880.4 L1641.6 885.2 L1644.8 889.7 L1645.3 895.3 L1646.7 900.5 L1649.7 905.1 L1653.2 909.5 L1653.1 915.3 L1655.0 920.4 L1658.4 924.8 L1661.0 930.4 L1658.9 935.3 L1655.9 940.0 L1653.0 944.6 L1651.6 949.8 L1648.8 954.5 L1648.8 960.3 L1646.5 965.2 L1643.3 969.7 L1641.6 974.8 L1640.0 980.0" stroke="#d9dede" stroke-width="0.9" opacity="0.92"/>
<path d="M1289.9 989.7 L1295.2 988.5 L1299.8 985.5 L1304.5 982.8 L1309.9 981.8 L1314.5 978.7 L1320.1 978.4 L1324.8 975.5 L1330.0 974.0 L1335.1 972.3 L1339.9 969.3 L1345.0 969.1 L1349.8 966.9 L1355.2 968.8 L1360.0 966.9 L1365.2 967.3 L1369.8 963.7 L1375.1 964.5 L1380.1 964.0 L1384.9 962.0 L1389.8 960.5 L1394.8 959.8 L1399.7 959.0 L1405.2 959.3 L1409.6 955.8 L1415.3 956.4 L1419.9 953.8 L1425.0 952.6 L1430.1 951.3 L1435.0 949.7 L1440.1 948.5 L1445.1 946.8 L1450.0 945.0" stroke="#d9dede" stroke-width="0.7" opacity="0.92"/>
</g>
<path d="M1205 1030 L1860 948 L1862 964 L1208 1050Z" fill="#030303"/>
<g fill="none" stroke="#d7dcdc" stroke-linecap="round">
<path d="M1248 1052 L1282 1046" stroke-width="3"/>
<path d="M1444 1020 L1472 1014" stroke-width="3"/>
<path d="M1326 1037 C1324 1050 1318 1062 1312 1076" stroke-width="3"/>
<path d="M1212 1068 L1222 1066" stroke-width="2"/>
<path d="M1702 990 C1704 1000 1706 1010 1706 1014" stroke-width="2"/>
</g>
<rect x="1498" y="998" width="24" height="20" rx="5" fill="#4e4030" opacity="0.6" transform="rotate(-10 1510 1008)"/>
</svg>
</svg>
<div class="vpl" style="left:265px;top:214px">[+ ] [Top ] [Standard ] [Wireframe ]</div>
<div class="vpl" style="left:1097px;top:214px">[+ ] [Front ] [Standard ] [Wireframe ]</div>
<div class="vpl" style="left:265px;top:688px">[+ ] [Left ] [Standard ] [Wireframe ]</div>
<div class="vpl" style="left:1097px;top:688px">[+ ] [Perspective ] [Standard ] [Default Shading ]</div>
<svg class="a" style="left:445px;top:214px" width="12" height="12" viewBox="0 0 12 12"><path d="M0 0 H12 L7 6 V12 L5 10.5 V6Z" fill="#bdbdbd"/></svg>
<svg class="a" style="left:1284px;top:214px" width="12" height="12" viewBox="0 0 12 12"><path d="M0 0 H12 L7 6 V12 L5 10.5 V6Z" fill="#bdbdbd"/></svg>
<svg class="a" style="left:446px;top:688px" width="12" height="12" viewBox="0 0 12 12"><path d="M0 0 H12 L7 6 V12 L5 10.5 V6Z" fill="#bdbdbd"/></svg>
<svg class="a" style="left:1340px;top:688px" width="12" height="12" viewBox="0 0 12 12"><path d="M0 0 H12 L7 6 V12 L5 10.5 V6Z" fill="#bdbdbd"/></svg>
<svg class="a" style="left:1000px;top:218px" width="76" height="76" viewBox="0 0 76 76"><circle cx="38" cy="38" r="26" fill="none" stroke="#a7aaad" stroke-width="6"/><circle cx="38" cy="38" r="22.5" fill="none" stroke="#6a6a6a" stroke-width="1"/><rect x="26" y="26" width="24" height="24" fill="#b8b8b8" stroke="#cfcfcf" stroke-width="1"/><text x="38" y="41" text-anchor="middle" font-family="Liberation Sans" font-size="7" fill="#7a7a7a">TOP</text><text x="38" y="11" text-anchor="middle" font-family="Liberation Sans" font-weight="bold" font-size="10" fill="#c4c4c4">N</text><text x="38" y="71" text-anchor="middle" font-family="Liberation Sans" font-weight="bold" font-size="10" fill="#c4c4c4">S</text><text x="9" y="41" text-anchor="middle" font-family="Liberation Sans" font-weight="bold" font-size="10" fill="#c4c4c4">W</text><text x="68" y="41" text-anchor="middle" font-family="Liberation Sans" font-weight="bold" font-size="10" fill="#c4c4c4">E</text></svg>
<svg class="a" style="left:1834px;top:234px" width="72" height="46" viewBox="0 0 72 46"><ellipse cx="36" cy="37.5" rx="35" ry="2.2" fill="none" stroke="#bdbdbd" stroke-width="1.6"/><rect x="22.5" y="8.5" width="27" height="27.5" fill="#ababab" stroke="#6c6c6c" stroke-width="1.2"/><rect x="23.5" y="9.5" width="25" height="2" fill="#c4c4c4"/><text x="36" y="25" text-anchor="middle" font-family="Liberation Sans" font-size="7" fill="#555" textLength="18" lengthAdjust="spacingAndGlyphs">FRONT</text></svg>
<svg class="a" style="left:1002px;top:708px" width="72" height="46" viewBox="0 0 72 46"><ellipse cx="36" cy="37.5" rx="35" ry="2.2" fill="none" stroke="#bdbdbd" stroke-width="1.6"/><rect x="22.5" y="8.5" width="27" height="27.5" fill="#ababab" stroke="#6c6c6c" stroke-width="1.2"/><rect x="23.5" y="9.5" width="25" height="2" fill="#c4c4c4"/><text x="36" y="25" text-anchor="middle" font-family="Liberation Sans" font-size="7" fill="#555" textLength="18" lengthAdjust="spacingAndGlyphs">LEFT</text></svg>
<svg class="a" style="left:1836px;top:706px" width="70" height="60" viewBox="0 0 70 60"><ellipse cx="34" cy="35" rx="30" ry="15" fill="none" stroke="#b4b4b4" stroke-width="3"/><ellipse cx="34" cy="35" rx="25" ry="11" fill="#7a7a7a" opacity="0.3"/><path d="M22 12 L38 6 L48 14 L48 34 L32 40 L22 32Z" fill="#c8c8c8"/><path d="M22 12 L38 6 L48 14 L32 20Z" fill="#dedede"/><path d="M32 20 L48 14 L48 34 L32 40Z" fill="#b8b8b8"/><text x="40" y="30" font-family="Liberation Sans" font-size="6" fill="#888" transform="rotate(-20 40 30)">BACK</text></svg>
<svg class="a" style="left:262.5px;top:622.5px" width="50" height="44" viewBox="0 0 50 44"><path d="M22 30 V6" stroke="#30a030" stroke-width="1.5"/><path d="M22 30 H44" stroke="#c03030" stroke-width="1.5"/><text x="20" y="7" font-family="Liberation Sans" font-size="9" fill="#30a030">y</text><text x="45" y="33" font-family="Liberation Sans" font-size="9" fill="#c03030">x</text><text x="20" y="33" font-family="Liberation Sans" font-weight="bold" font-size="8" fill="#202090">z</text></svg>
<svg class="a" style="left:1093px;top:620px" width="50" height="44" viewBox="0 0 50 44"><path d="M22 30 V6" stroke="#3030d0" stroke-width="1.5"/><path d="M22 30 H44" stroke="#d03030" stroke-width="1.5"/><text x="20" y="7" font-family="Liberation Sans" font-size="9" fill="#3030d0">z</text><text x="45" y="33" font-family="Liberation Sans" font-size="9" fill="#d03030">x</text><text x="20" y="37" font-family="Liberation Sans" font-size="8" fill="#30a030">y</text></svg>
<svg class="a" style="left:263px;top:1095px" width="50" height="44" viewBox="0 0 50 44"><path d="M22 30 V6" stroke="#3030d0" stroke-width="1.5"/><path d="M22 30 H2" stroke="#30a030" stroke-width="1.5"/><text x="20" y="7" font-family="Liberation Sans" font-size="9" fill="#3030d0">z</text><text x="-4" y="33" font-family="Liberation Sans" font-size="9" fill="#30a030">y</text><text x="24" y="34" font-family="Liberation Sans" font-size="8" fill="#d03030">x</text></svg>
<svg class="a" style="left:1092px;top:1070px" width="40" height="70" viewBox="0 0 40 70"><path d="M20 50 V24" stroke="#3030d0" stroke-width="1.5"/><path d="M20 50 H6" stroke="#d03030" stroke-width="1.5"/><path d="M20 50 L28 60" stroke="#30a030" stroke-width="1.5"/><text x="18" y="24" font-family="Liberation Sans" font-size="9" fill="#3030d0">z</text><text x="0" y="53" font-family="Liberation Sans" font-size="9" fill="#d03030">x</text><text x="28" y="66" font-family="Liberation Sans" font-size="9" fill="#30a030">y</text></svg>
<div class="stat" style="left:1142px;top:717px">Total</div>
<div class="stat" style="left:1104px;top:732px">Polys:</div><div class="stat" style="left:1143px;top:732px">67,694</div>
<div class="stat" style="left:1104px;top:747px">Verts:</div><div class="stat" style="left:1143px;top:747px">67,664</div>
<div class="stat" style="left:1104px;top:777px">FPS:</div><div class="stat" style="left:1143px;top:777px">Inactive</div>
<div class="a" style="left:1923px;top:215px;width:324px;height:25px;background:#ababab"></div>
<div class="a" style="left:1923px;top:215px;width:30px;height:25px;background:#b3b3b3"></div>
<div class="a" style="left:1954px;top:215px;width:28px;height:25px;background:#c9c9c9"></div>
<div class="a" style="left:2012px;top:218px;width:1px;height:20px;background:#9a9a9a"></div>
<div class="a" style="left:2042px;top:218px;width:1px;height:20px;background:#9a9a9a"></div>
<div class="a" style="left:2072px;top:218px;width:1px;height:20px;background:#9a9a9a"></div>
<div class="a" style="left:2102px;top:218px;width:1px;height:20px;background:#9a9a9a"></div>
<div class="a" style="left:1926px;top:244px;width:140px;height:20px;background:#bdbdbd"></div>
<div class="a" style="left:2070px;top:244px;width:20px;height:20px;background:#d82f8c;border:1.5px solid #2a2a2a"></div>
<div class="a" style="left:1926px;top:269px;width:164px;height:19px;background:#c0c0c0"></div>
<span class="t" style="left:1930px;top:273px;font-size:10px;color:#8a8a8a">Modifier List</span>
<svg class="a" style="left:2075px;top:276px" width="8" height="5"><path d="M0 0 L8 0 L4 5Z" fill="#9a9a9a"/></svg>
<div class="a" style="left:1926px;top:293px;width:165px;height:123px;border:1px solid #f6f6f6;background:#c8c8c8;box-shadow:inset 0 0 0 1px #b8b8b8"></div>
<div class="a" style="left:1930px;top:450px;width:155px;height:1px;background:#a8a8a8"></div>
<div class="a" style="left:2000px;top:449px;width:14px;height:3px;background:repeating-linear-gradient(90deg,#777 0 1px,transparent 1px 2px)"></div>
<div class="a" style="left:2085px;top:456px;width:4px;height:694px;background:#bdbdbd;border-radius:2px"></div>
<svg class="a" style="left:1929.0px;top:218.0px" width="18" height="18" viewBox="0 0 24 24"><path d="M12 3 V21 M3 12 H21" stroke="#666" stroke-width="2"/></svg>
<svg class="a" style="left:1959.0px;top:218.0px" width="18" height="18" viewBox="0 0 24 24"><rect x="3" y="3" width="18" height="18" fill="none" stroke="#1a9e9e" stroke-width="1.8" stroke-dasharray="3 3"/><path d="M7 19 Q8 8 19 6" fill="none" stroke="#4a4a4a" stroke-width="2"/></svg>
<svg class="a" style="left:1988.0px;top:218.0px" width="18" height="18" viewBox="0 0 24 24"><rect x="7" y="3" width="10" height="6" fill="#777"/><path d="M12 9 V13 M5 13 H19 M5 13 V17 M19 13 V17" stroke="#777" stroke-width="1.6" fill="none"/><rect x="3" y="17" width="4" height="4" fill="#1a9e9e"/><rect x="17" y="17" width="4" height="4" fill="#1a9e9e"/></svg>
<svg class="a" style="left:2019.0px;top:218.0px" width="18" height="18" viewBox="0 0 24 24"><circle cx="13" cy="12" r="7.5" fill="#666"/><path d="M5 6 A9 9 0 0 0 5 18" fill="none" stroke="#1a9e9e" stroke-width="1" opacity="0.7"/></svg>
<svg class="a" style="left:2048.0px;top:218.0px" width="18" height="18" viewBox="0 0 24 24"><rect x="3" y="4" width="18" height="12" fill="#666"/><path d="M9 20 H15 M12 16 V20" stroke="#666" stroke-width="2"/></svg>
<svg class="a" style="left:2078.0px;top:218.0px" width="18" height="18" viewBox="0 0 24 24"><path d="M6 4 A4 4 0 0 0 10 10 L19 20" fill="none" stroke="#666" stroke-width="2.4"/></svg>
<svg class="a" style="left:1929.0px;top:423.0px" width="16" height="16" viewBox="0 0 24 24"><path d="M14 3 L21 10 L17 11 L12 16 L12 19 L5 12 L8 12 L13 7Z" fill="#a4a4a4"/><path d="M8 16 L3 21" stroke="#a4a4a4" stroke-width="2"/></svg>
<div class="a" style="left:1954px;top:424px;width:1px;height:15px;background:#8c8c8c;box-shadow:1px 0 0 #e2e2e2"></div>
<svg class="a" style="left:1962.0px;top:423.0px" width="16" height="16" viewBox="0 0 24 24"><rect x="9" y="3" width="6" height="18" fill="none" stroke="#a4a4a4" stroke-width="1.6"/><rect x="10.5" y="12" width="3" height="7" fill="#a4a4a4"/></svg>
<div class="a" style="left:1988px;top:424px;width:1px;height:15px;background:#8c8c8c;box-shadow:1px 0 0 #e2e2e2"></div>
<svg class="a" style="left:1995.0px;top:423.0px" width="16" height="16" viewBox="0 0 24 24"><circle cx="7" cy="7" r="5" fill="#a4a4a4"/><circle cx="14" cy="17" r="5" fill="#a4a4a4"/><path d="M13 5 H19 V11" fill="none" stroke="#a4a4a4" stroke-width="1.6"/></svg>
<svg class="a" style="left:2019.0px;top:423.0px" width="16" height="16" viewBox="0 0 24 24"><path d="M5 6 H19 M10 6 V3 H14 V6 M6 6 L7 21 H17 L18 6" fill="none" stroke="#a4a4a4" stroke-width="1.6"/></svg>
<div class="a" style="left:2045px;top:424px;width:1px;height:15px;background:#8c8c8c;box-shadow:1px 0 0 #e2e2e2"></div>
<svg class="a" style="left:2051.0px;top:422.0px" width="18" height="18" viewBox="0 0 24 24"><rect x="2" y="5" width="17" height="17" fill="#4a4a4a"/><g fill="#ddd"><rect x="4" y="7" width="5" height="2"/><rect x="4" y="11" width="5" height="4"/><rect x="11" y="11" width="5" height="4"/><rect x="4" y="17" width="5" height="3"/><rect x="11" y="17" width="5" height="3"/></g><path d="M10 13 L20 2 L22 4 L12 15Z" fill="#f2b51c"/></svg>
<div class="a" style="left:3px;top:1156px;width:93px;height:20px;background:#dcc5c5;border:1px solid #b0b0b0"></div>
<div class="a" style="left:3px;top:1177px;width:93px;height:21px;background:#ffffff;border:1px solid #9a9a9a"></div>
<span class="t" style="left:7px;top:1180px;font-family:'Liberation Mono',monospace;font-size:11px;color:#111">1038 unused Ar</span>
<div class="a" style="left:100px;top:1154px;width:2px;height:46px;background:#b0b0b0;border-right:1px solid #e0e0e0"></div>
<span class="t" style="left:105px;top:1161px;font-size:9.5px;color:#333">None Selected</span>
<span class="t" style="left:105px;top:1185px;font-size:9.5px;color:#333">Click and drag to select and move objects</span>
<span class="t" style="left:1474px;top:1161px;font-size:10.5px;color:#333">X:</span>
<div class="a" style="left:1487px;top:1159px;width:54px;height:15px;background:#bebebe"></div>
<span class="t" style="left:1553px;top:1161px;font-size:10.5px;color:#333">Y:</span>
<div class="a" style="left:1566px;top:1159px;width:54px;height:15px;background:#bebebe"></div>
<span class="t" style="left:1633px;top:1161px;font-size:10.5px;color:#333">Z:</span>
<div class="a" style="left:1646px;top:1159px;width:54px;height:15px;background:#bebebe"></div>
<span class="t" style="left:1715px;top:1161px;font-size:9.5px;color:#333">Grid = 10.0cm</span>
<div class="a" style="left:1570px;top:1181px;width:1px;height:18px;background:#8a8a8a"></div>
<div class="a" style="left:1576px;top:1181px;width:19px;height:19px;background:#b4b4b4;border-radius:2px"></div>
<span class="t" style="left:1599px;top:1184px;font-size:10.5px;color:#333">Enabled:</span>
<div class="a" style="left:1642px;top:1186px;width:8px;height:8px;border-radius:50%;background:#35d035"></div>
<div class="a" style="left:1655px;top:1181px;width:19px;height:19px;background:#b0b0b0;border-radius:2px"></div>
<div class="a" style="left:1657px;top:1183px;width:15px;height:15px;background:#fff;border-radius:50%"></div>
<span class="t" style="left:1661px;top:1184px;font-size:11px;color:#222">0</span>
<div class="a" style="left:1679px;top:1181px;width:1px;height:18px;background:#8a8a8a"></div>
<span class="t" style="left:1712px;top:1184px;font-size:9.3px;color:#333">Add Time Tag</span>
<div class="a" style="left:1845px;top:1180px;width:67px;height:16px;background:#bcbcbc;border-left:1px solid #eee"></div>
<span class="t" style="left:1848px;top:1182px;font-size:10.5px;color:#333">0</span>
<div class="a" style="left:1947px;top:1157px;width:40px;height:39px;background:#b8b8b8;border-radius:3px"></div>
<div class="a" style="left:1992px;top:1157px;width:44px;height:19px;background:#b3b3b3;border-radius:2px"></div>
<span class="t" style="left:1994px;top:1160px;font-size:10.5px;color:#333">Auto Key</span>
<div class="a" style="left:1992px;top:1178px;width:44px;height:19px;background:#b3b3b3;border-radius:2px"></div>
<span class="t" style="left:1997px;top:1182px;font-size:10.5px;color:#333">Set Key</span>
<div class="a" style="left:2040px;top:1157px;width:110px;height:17px;background:#adadad;border-radius:2px"></div>
<span class="t" style="left:2045px;top:1159px;font-size:10.5px;color:#333">Selected</span>
<svg class="a" style="left:2135px;top:1162px" width="8" height="6"><path d="M0 0 L8 0 L4 6Z" fill="#333"/></svg>
<div class="a" style="left:2066px;top:1179px;width:84px;height:18px;background:#b3b3b3;border-radius:2px"></div>
<span class="t" style="left:2079px;top:1182px;font-size:10.5px;color:#333">Key Filters...</span>
<svg class="a" style="left:1400.0px;top:1158.0px" width="18" height="18" viewBox="0 0 24 24"><path d="M3 8 V3 H8 M16 3 H21 V8 M3 16 V21 H8 M16 21 H21 V16" fill="none" stroke="#a0a0a0" stroke-width="1.8"/><circle cx="12" cy="10" r="3" fill="#a0a0a0"/><path d="M7 17 Q12 12 17 17" fill="#a0a0a0"/></svg>
<svg class="a" style="left:1425.0px;top:1158.0px" width="18" height="18" viewBox="0 0 24 24"><path d="M8 11 V8 A4 4 0 0 1 16 8 V11" fill="none" stroke="#a4a4a4" stroke-width="2.2"/><rect x="6" y="11" width="12" height="10" rx="1" fill="#a4a4a4"/></svg>
<svg class="a" style="left:1450.0px;top:1158.0px" width="18" height="18" viewBox="0 0 24 24"><rect x="3" y="3" width="18" height="18" fill="none" stroke="#4a4a4a" stroke-width="2"/><path d="M12 5 L19 12 L12 19 L5 12Z" fill="none" stroke="#4a4a4a" stroke-width="2"/><path d="M12 3 V21 M3 12 H21" stroke="#4a4a4a" stroke-width="1.2"/></svg>
<svg class="a" style="left:1577.5px;top:1182.5px" width="16" height="16" viewBox="0 0 24 24"><path d="M12 2 L20 5 V12 Q20 19 12 22 Q4 19 4 12 V5Z" fill="#4a4a4a"/><path d="M12 4 V20 M5 12 H19" stroke="#ddd" stroke-width="1.2"/><path d="M12 4 L18 6 V12 H12Z M12 12 H6 Q6 18 12 20Z" fill="#eee"/></svg>
<svg class="a" style="left:1686.0px;top:1183.0px" width="14" height="14" viewBox="0 0 24 24"><path d="M12 3 L20 7 V16 L12 20 L4 16 V7Z M4 7 L12 11 L20 7 M12 11 V20" fill="none" stroke="#777" stroke-width="1.4"/></svg>
<svg class="a" style="left:1824.0px;top:1159.0px" width="14" height="14" viewBox="0 0 24 24"><path d="M3 4 V20" stroke="#4a4a4a" stroke-width="2.6"/><path d="M13 6 L6 12 L13 18Z M21 6 L14 12 L21 18Z" fill="#4a4a4a"/></svg>
<div class="a" style="left:1844px;top:1158px;width:1px;height:18px;background:#8c8c8c;box-shadow:1px 0 0 #e2e2e2"></div>
<svg class="a" style="left:1850.0px;top:1159.0px" width="14" height="14" viewBox="0 0 24 24"><path d="M10 5 L2 12 L10 19Z" fill="#4a4a4a"/><path d="M14 5 V19 M19 5 V19" stroke="#4a4a4a" stroke-width="2.6"/></svg>
<svg class="a" style="left:1870.0px;top:1158.0px" width="16" height="16" viewBox="0 0 24 24"><path d="M5 3 L20 12 L5 21Z" fill="#4a4a4a"/></svg>
<svg class="a" style="left:1883px;top:1172px" width="5" height="5"><path d="M5 0 L5 5 L0 5Z" fill="#1a1a1a"/></svg>
<svg class="a" style="left:1893.5px;top:1159.0px" width="14" height="14" viewBox="0 0 24 24"><path d="M4 5 V19 M9 5 V19" stroke="#4a4a4a" stroke-width="2.6"/><path d="M13 5 L21 12 L13 19Z" fill="#4a4a4a"/></svg>
<div class="a" style="left:1913px;top:1158px;width:1px;height:18px;background:#8c8c8c;box-shadow:1px 0 0 #e2e2e2"></div>
<svg class="a" style="left:1918.0px;top:1159.0px" width="14" height="14" viewBox="0 0 24 24"><path d="M3 6 L10 12 L3 18Z M11 6 L18 12 L11 18Z" fill="#4a4a4a"/><path d="M21 4 V20" stroke="#4a4a4a" stroke-width="2.6"/></svg>
<svg class="a" style="left:1825.0px;top:1182.0px" width="12" height="12" viewBox="0 0 24 24"><path d="M10 6 L3 12 L10 18Z M14 6 L21 12 L14 18Z" fill="#4a4a4a"/></svg>
<div class="a" style="left:1843px;top:1180px;width:1px;height:17px;background:#8c8c8c;box-shadow:1px 0 0 #e2e2e2"></div>
<svg class="a" style="left:1902px;top:1181px" width="8" height="14"><path d="M1 5 L4 1 L7 5Z M1 9 L4 13 L7 9Z" fill="#333"/></svg>
<svg class="a" style="left:1917.5px;top:1179.0px" width="18" height="18" viewBox="0 0 24 24"><circle cx="10" cy="10" r="8" fill="#4a4a4a"/><path d="M10 5 V10 H14" stroke="#ddd" stroke-width="1.6" fill="none"/><circle cx="16" cy="17" r="5" fill="none" stroke="#e09a18" stroke-width="2.6"/></svg>
<svg class="a" style="left:1952.0px;top:1161.5px" width="30" height="30" viewBox="0 0 24 24"><path d="M10 2 V20 M1 11 H19" stroke="#4a4a4a" stroke-width="4.5"/><path d="M13 21 L20 14" stroke="#1a9e9e" stroke-width="2.2"/><circle cx="21" cy="13" r="2.4" fill="none" stroke="#1a9e9e" stroke-width="1.6"/></svg>
<svg class="a" style="left:2042.0px;top:1179.0px" width="18" height="18" viewBox="0 0 24 24"><path d="M3 20 Q4 6 9 5 M21 20 Q20 6 15 5" fill="none" stroke="#1a9e9e" stroke-width="1.8"/><rect x="10" y="2" width="4" height="4" fill="none" stroke="#666" stroke-width="1.2"/><circle cx="3" cy="5" r="1.2" fill="#666"/><circle cx="21" cy="5" r="1.2" fill="#666"/></svg>
<svg class="a" style="left:2162.0px;top:1158.0px" width="16" height="16" viewBox="0 0 24 24"><circle cx="13" cy="10" r="7" fill="none" stroke="#4a4a4a" stroke-width="2.2"/><path d="M8 15 L2 21" stroke="#4a4a4a" stroke-width="2.6"/></svg>
<svg class="a" style="left:2184.0px;top:1158.0px" width="16" height="16" viewBox="0 0 24 24"><circle cx="9" cy="14" r="6" fill="none" stroke="#4a4a4a" stroke-width="2"/><path d="M5 18 L1 22" stroke="#4a4a4a" stroke-width="2"/><rect x="12" y="2" width="5" height="5" fill="#1a9e9e"/><rect x="18" y="2" width="5" height="5" fill="#1a9e9e"/><rect x="18" y="8" width="5" height="5" fill="#1a9e9e"/></svg>
<svg class="a" style="left:2207.0px;top:1158.0px" width="16" height="16" viewBox="0 0 24 24"><path d="M12 4 L21 8 L12 12 L3 8Z" fill="#1a9e9e"/><path d="M3 8 V15 L12 19 V12Z" fill="#127a7a"/><path d="M21 8 V15 L12 19 V12Z" fill="#20b0b0"/><path d="M1 1 H5 M19 1 H23 M1 23 H5 M19 23 H23" stroke="#4a4a4a" stroke-width="1"/></svg>
<svg class="a" style="left:2229.0px;top:1158.0px" width="16" height="16" viewBox="0 0 24 24"><path d="M12 10 L21 6 V14 L12 18Z" fill="#1a9e9e"/><path d="M2 15 L10 11 L16 15 L8 19Z" fill="#4a4a4a"/></svg>
<svg class="a" style="left:2162.0px;top:1180.0px" width="16" height="16" viewBox="0 0 24 24"><path d="M3 4 L20 12 L3 20" fill="none" stroke="#4a4a4a" stroke-width="2"/></svg>
<svg class="a" style="left:2184.0px;top:1180.0px" width="16" height="16" viewBox="0 0 24 24"><circle cx="13" cy="4" r="2.5" fill="#4a4a4a"/><path d="M13 7 L10 14 L6 21 M11 12 L16 21 M8 10 L16 11" fill="none" stroke="#4a4a4a" stroke-width="2.2"/></svg>
<svg class="a" style="left:2207.0px;top:1180.0px" width="16" height="16" viewBox="0 0 24 24"><ellipse cx="12" cy="13" rx="10" ry="4" fill="none" stroke="#4a4a4a" stroke-width="1.8" transform="rotate(-25 12 13)"/><circle cx="12" cy="12" r="6" fill="#1a9e9e"/><path d="M6 12 A6 6 0 0 0 18 12Z" fill="#4a4a4a"/></svg>
<svg class="a" style="left:2229.0px;top:1180.0px" width="16" height="16" viewBox="0 0 24 24"><rect x="2" y="2" width="20" height="20" fill="#4a4a4a"/><path d="M6 18 L18 6 M11 6 H18 V13" fill="none" stroke="#ddd" stroke-width="2.4"/></svg>
<svg class="a" style="left:2222px;top:1174px" width="5" height="5"><path d="M5 0 L5 5 L0 5Z" fill="#1a1a1a"/></svg>
<svg class="a" style="left:2244px;top:1174px" width="5" height="5"><path d="M5 0 L5 5 L0 5Z" fill="#1a1a1a"/></svg>
<svg class="a" style="left:2178px;top:1196px" width="5" height="5"><path d="M5 0 L5 5 L0 5Z" fill="#1a1a1a"/></svg>
<svg class="a" style="left:2200px;top:1196px" width="5" height="5"><path d="M5 0 L5 5 L0 5Z" fill="#1a1a1a"/></svg>
<svg class="a" style="left:2222px;top:1196px" width="5" height="5"><path d="M5 0 L5 5 L0 5Z" fill="#1a1a1a"/></svg>
<svg class="a" style="left:1930px;top:1050px" width="260" height="100" viewBox="0 0 260 100">
<defs><pattern id="stripes" width="10" height="6.25" patternUnits="userSpaceOnUse" y="10"><rect width="10" height="4.2" fill="#efefef"/></pattern></defs>
<text x="9" y="58.5" font-family="Liberation Sans" font-weight="bold" font-style="italic" font-size="71" fill="url(#stripes)" textLength="240" lengthAdjust="spacingAndGlyphs">MAXVE</text>
<text x="10" y="92" font-family="Liberation Sans" font-style="italic" font-size="27" fill="#eaeaea" textLength="230" lengthAdjust="spacingAndGlyphs">www.maxve.org</text>
</svg>
</body></html>
